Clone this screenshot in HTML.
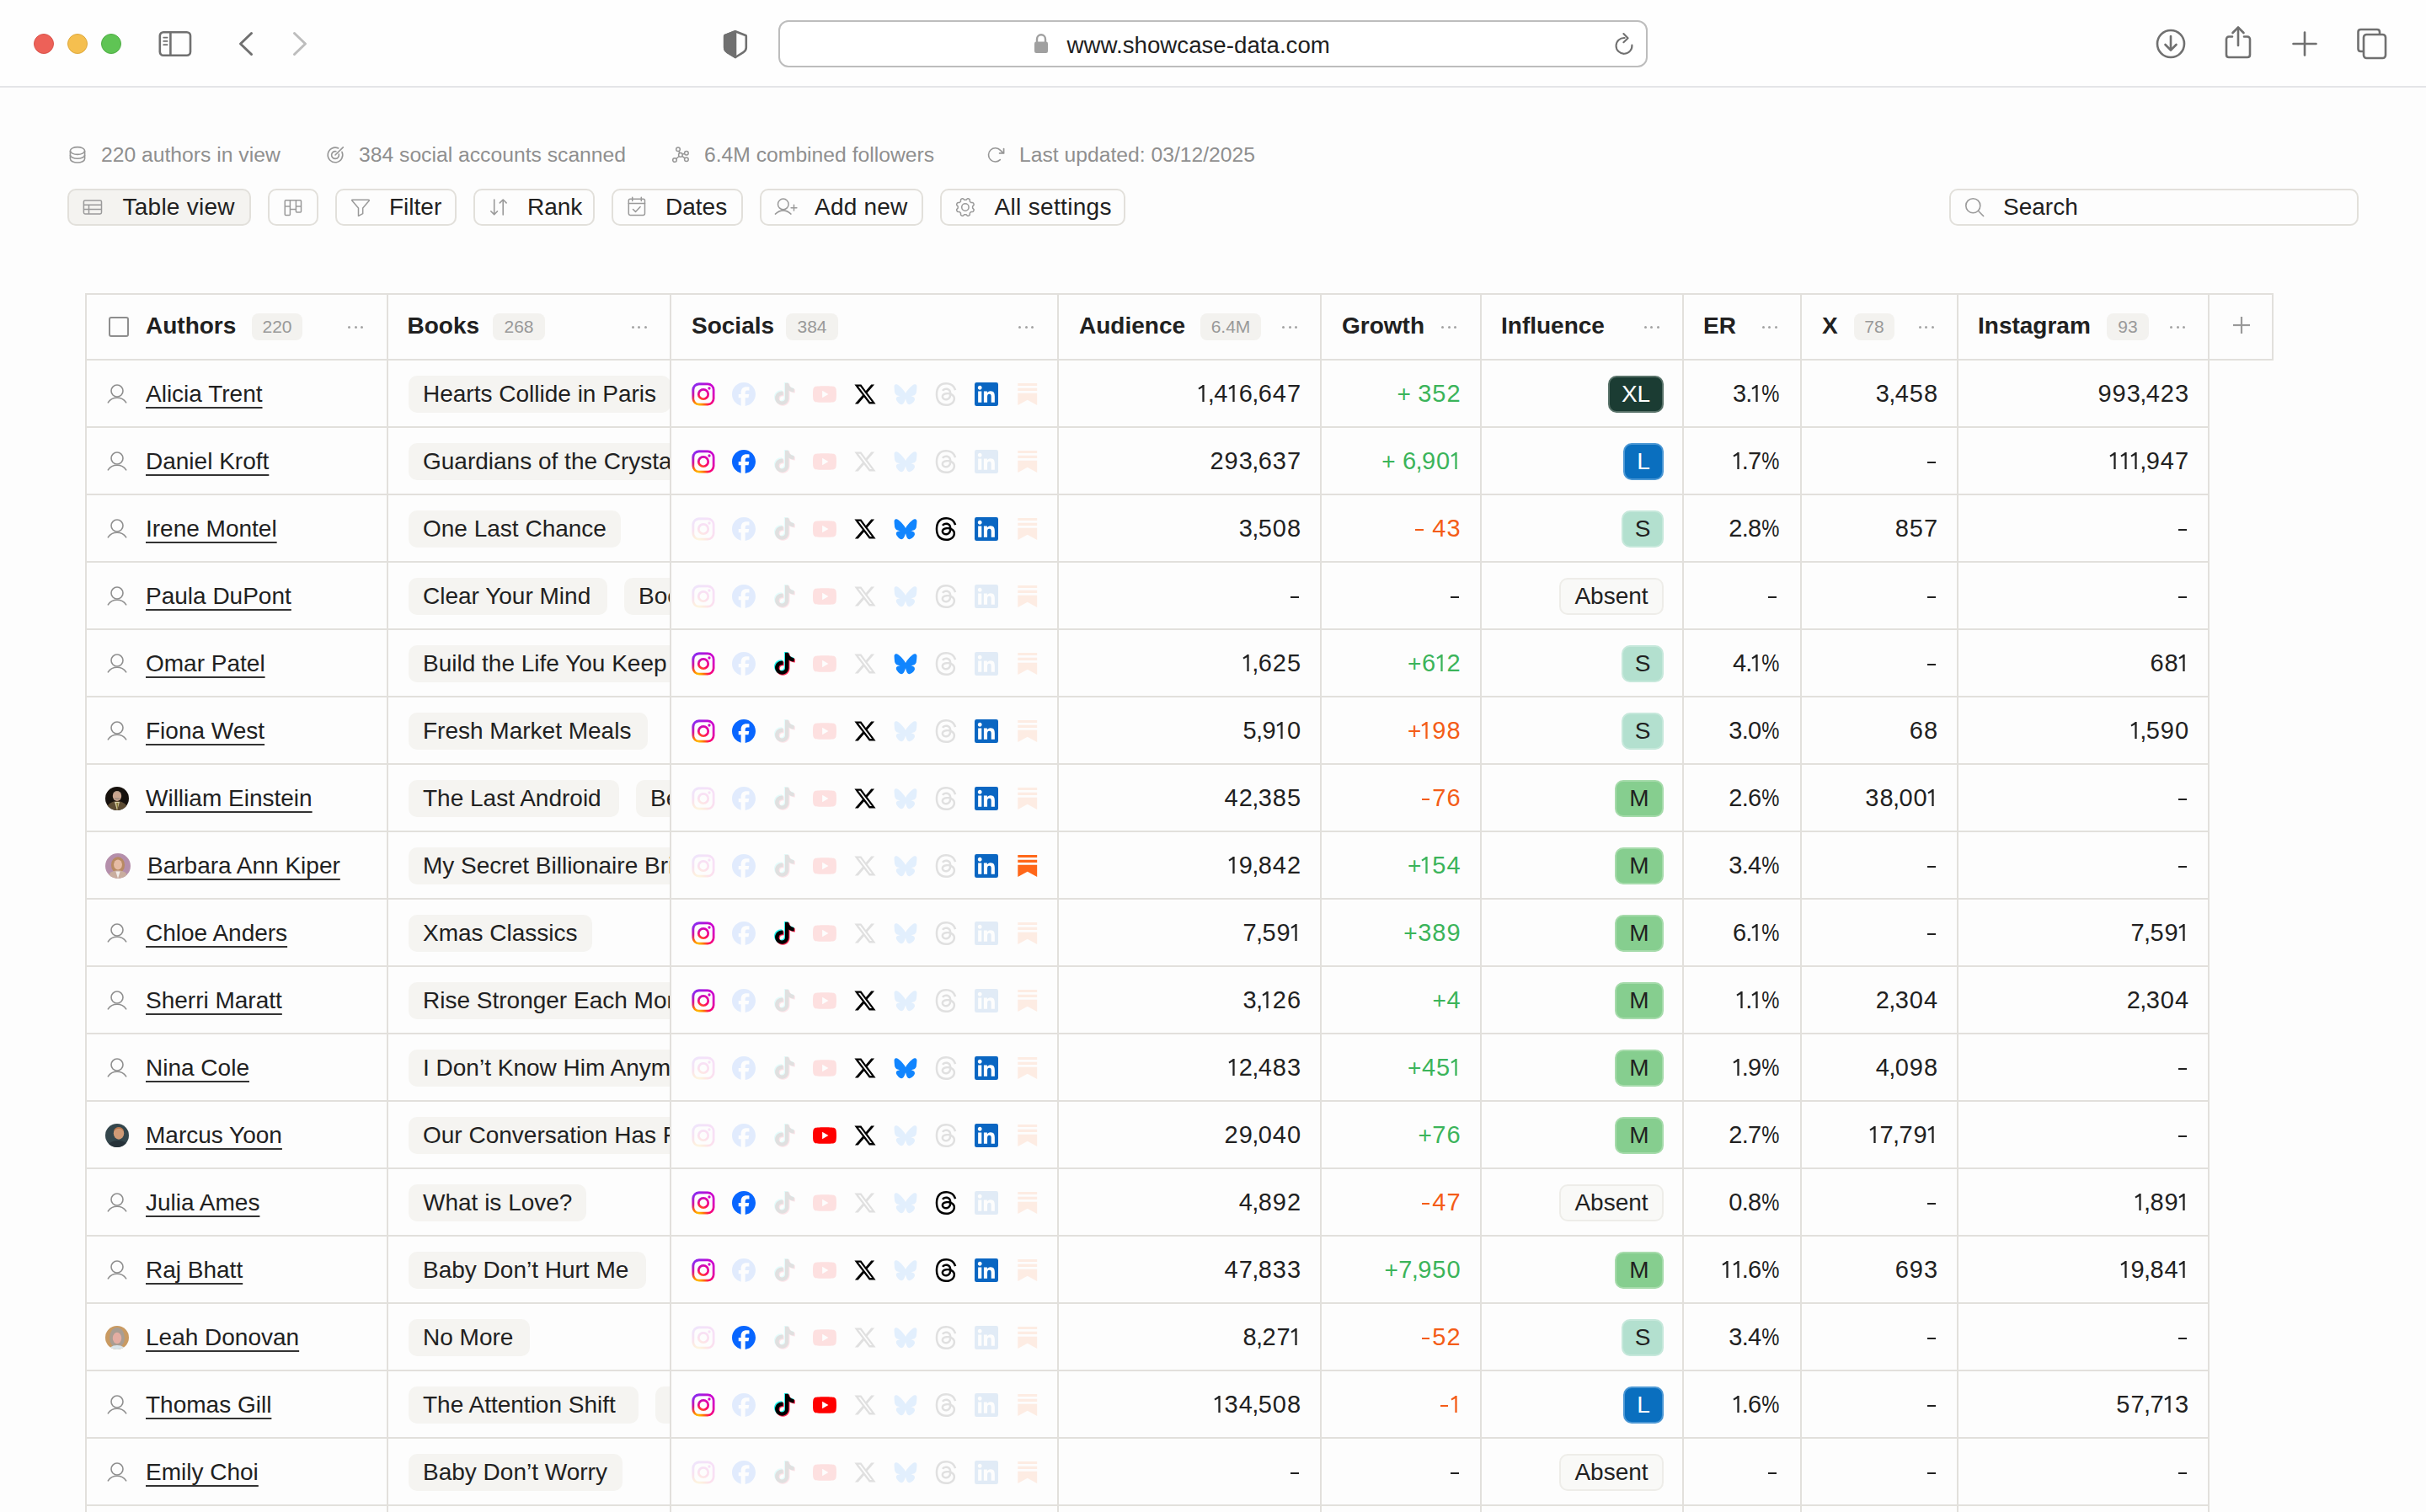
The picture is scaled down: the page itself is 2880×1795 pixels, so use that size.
<!DOCTYPE html><html><head><meta charset="utf-8"><style>
*{box-sizing:border-box;margin:0;padding:0}
html,body{width:2880px;height:1795px;overflow:hidden;background:#fdfdfd;font-family:"Liberation Sans", sans-serif;color:#212121}
.a{position:absolute}
.t28{font-size:28px}
.chrome{position:absolute;left:0;top:0;width:2880px;height:104px;background:#fefefe;border-bottom:2px solid #e4e5e8}
.light{position:absolute;top:39.5px;width:24px;height:24px;border-radius:50%}
.url{position:absolute;left:924px;top:24px;width:1032px;height:56px;border:2px solid #bdbdbd;border-radius:12px;background:#fff}
.stat{position:absolute;top:168.5px;height:30px;line-height:30px;font-size:24.7px;color:#8f8f8f;white-space:nowrap}
.btn{position:absolute;top:224px;height:44px;border:2px solid #e2e0db;border-radius:10px;background:#fdfdfd}
.btxt{position:absolute;top:224px;height:44px;line-height:44px;font-size:28px;white-space:nowrap;color:#212121}
.vl{position:absolute;top:348px;width:2px;height:1447px;background:#e2e0dc}
.hl{position:absolute;left:101px;width:2522px;height:2px;background:#e2e0dc}
.hd{position:absolute;top:348px;height:77px;line-height:77px;font-size:28px;font-weight:bold;white-space:nowrap}
.hb{position:absolute;top:372px;height:32px;line-height:32px;border-radius:8px;background:#f3f2ef;color:#999;font-size:21px;text-align:center}
.dots{position:absolute;top:386px;height:4px;width:19px}
.dots i{position:absolute;top:0.5px;width:3px;height:3px;border-radius:50%;background:#a3a3a3}
.cell{position:absolute;height:80px;line-height:80px;font-size:28px;white-space:nowrap}
.r{text-align:right}
.name{text-decoration:underline;text-decoration-thickness:2px;text-underline-offset:6px;text-decoration-color:#333}
.chips{position:absolute;left:461px;width:334px;height:80px;overflow:hidden}
.chip{position:absolute;top:18px;height:44px;line-height:44px;padding:0 17px;border-radius:10px;background:#f5f4f1;font-size:28px;white-space:nowrap}
.soc{position:absolute;width:28px;height:28px}
.off{opacity:.11}
.badge{position:absolute;top:18px;height:44px;line-height:40px;border-radius:10px;border:2px solid;font-size:28px;text-align:center}
.d,.c,.p,.q{display:inline-flex;justify-content:center;font-weight:normal;font-size:29px;line-height:30px}
.d{width:17.1px}svg.o{display:inline-block;width:12.4px;height:20.4px;vertical-align:baseline;fill:currentColor}.c{width:5.9px}.p{width:5.5px}.q{width:20px}
.h{display:inline-block;width:9.6px;height:2.3px;background:currentColor;vertical-align:6.6px;margin:0 2.5px 0 1px}
.q i{font-style:normal;display:inline-block;transform:scaleX(.82)}
.av{position:absolute;left:125px;top:25.5px;width:28px;height:28px;border-radius:50%}
</style></head><body>
<div class="chrome"></div>
<div class="light" style="left:40px;background:#ed6158;border:1px solid #d9534b"></div>
<div class="light" style="left:80px;background:#f5bf4f;border:1px solid #dea93e"></div>
<div class="light" style="left:120px;background:#5fc454;border:1px solid #4fae45"></div>
<div class="a" style="left:188px;top:36px"><svg width="40" height="32" viewBox="0 0 40 32" ><rect x="1.8" y="2.2" width="36.2" height="27.6" rx="4.2" fill="none" stroke="#707070" stroke-width="2.6"/><line x1="14.4" y1="2.5" x2="14.4" y2="29.5" stroke="#707070" stroke-width="2.6"/><line x1="6.2" y1="8.6" x2="10.6" y2="8.6" stroke="#707070" stroke-width="1.7" stroke-linecap="round"/><line x1="6.2" y1="12.9" x2="10.6" y2="12.9" stroke="#707070" stroke-width="1.7" stroke-linecap="round"/><line x1="6.2" y1="17.2" x2="10.6" y2="17.2" stroke="#707070" stroke-width="1.7" stroke-linecap="round"/></svg></div>
<div class="a" style="left:280px;top:35px"><svg width="24" height="34" viewBox="0 0 24 34" ><polyline points="18.5,4.5 5.5,17 18.5,29.5" fill="none" stroke="#707070" stroke-width="3" stroke-linecap="round" stroke-linejoin="round"/></svg></div>
<div class="a" style="left:344px;top:35px"><svg width="24" height="34" viewBox="0 0 24 34" ><polyline points="5.5,4.5 18.5,17 5.5,29.5" fill="none" stroke="#bdbdbd" stroke-width="3" stroke-linecap="round" stroke-linejoin="round"/></svg></div>
<div class="a" style="left:857px;top:35px"><svg width="32" height="35" viewBox="0 0 32 35" ><path d="M16 2.3 L28.2 7 Q28.8 7.3 28.8 8 V21.5 Q28.8 24.6 25.8 26.8 L16 33 L6.2 26.8 Q3.2 24.6 3.2 21.5 V8 Q3.2 7.3 3.8 7 Z" fill="none" stroke="#707070" stroke-width="2.6" stroke-linejoin="round"/><path d="M16 2.3 L3.8 7 Q3.2 7.3 3.2 8 V21.5 Q3.2 24.6 6.2 26.8 L16 33 Z" fill="#707070" stroke="#707070" stroke-width="2.6" stroke-linejoin="round"/></svg></div>
<div class="url"></div>
<div class="a" style="left:1227px;top:39px"><svg width="18" height="25" viewBox="0 0 18 25" ><path d="M4 11 V7.5 C4 4.5 6.2 2.2 9 2.2 C11.8 2.2 14 4.5 14 7.5 V11" fill="none" stroke="#a0a0a0" stroke-width="2.4"/><rect x="1" y="10.5" width="16" height="13.5" rx="2.2" fill="#a0a0a0"/></svg></div>
<div class="a" style="left:1266.5px;top:26px;height:55px;line-height:55px;font-size:27.7px;color:#1f1f1f;white-space:nowrap">www.showcase-data.com</div>
<div class="a" style="left:1914px;top:38px"><svg width="28" height="28" viewBox="0 0 28 28" ><path d="M23.4 15.6 A9.45 9.45 0 1 1 14.6 6.95" fill="none" stroke="#707070" stroke-width="2.1" stroke-linecap="round"/><polyline points="13.4,2 18.6,7.2 13.4,12.2" fill="none" stroke="#707070" stroke-width="2.1" stroke-linecap="round" stroke-linejoin="round"/></svg></div>
<div class="a" style="left:2558px;top:33px"><svg width="38" height="38" viewBox="0 0 38 38" ><circle cx="19" cy="19" r="16" fill="none" stroke="#707070" stroke-width="2.6"/><line x1="19" y1="10" x2="19" y2="26" stroke="#707070" stroke-width="2.6" stroke-linecap="round"/><polyline points="12.5,20 19,26.5 25.5,20" fill="none" stroke="#707070" stroke-width="2.6" stroke-linecap="round" stroke-linejoin="round"/></svg></div>
<div class="a" style="left:2640px;top:30px"><svg width="34" height="41" viewBox="0 0 34 41" ><path d="M10 13.5 H6 C4.3 13.5 3 14.8 3 16.5 V35 C3 36.7 4.3 38 6 38 H28 C29.7 38 31 36.7 31 35 V16.5 C31 14.8 29.7 13.5 28 13.5 H24" fill="none" stroke="#707070" stroke-width="2.6" stroke-linecap="round"/><line x1="17" y1="3" x2="17" y2="24" stroke="#707070" stroke-width="2.6" stroke-linecap="round"/><polyline points="10.5,9 17,2.5 23.5,9" fill="none" stroke="#707070" stroke-width="2.6" stroke-linecap="round" stroke-linejoin="round"/></svg></div>
<div class="a" style="left:2720px;top:36px"><svg width="32" height="32" viewBox="0 0 32 32" ><line x1="16" y1="2.5" x2="16" y2="29.5" stroke="#707070" stroke-width="2.6" stroke-linecap="round"/><line x1="2.5" y1="16" x2="29.5" y2="16" stroke="#707070" stroke-width="2.6" stroke-linecap="round"/></svg></div>
<div class="a" style="left:2796px;top:32px"><svg width="40" height="40" viewBox="0 0 40 40" ><path d="M9 29 H6.5 C4.5 29 3.5 28 3.5 26 V6 C3.5 4 4.5 3 6.5 3 H26 C28 3 29 4 29 6 V8.5" fill="none" stroke="#707070" stroke-width="2.6"/><rect x="10" y="9" width="26" height="28" rx="3.5" fill="none" stroke="#707070" stroke-width="2.6"/></svg></div>
<div class="a" style="left:81px;top:173px"><svg width="22" height="23" viewBox="0 0 22 23" ><ellipse cx="11" cy="6" rx="8.6" ry="4.4" fill="none" stroke="#979797" stroke-width="1.6"/><path d="M2.4 6 V15.6 A8.6 4.4 0 0 0 19.6 15.6 V6" fill="none" stroke="#979797" stroke-width="1.6"/><path d="M2.4 10.9 A8.6 4.4 0 0 0 19.6 10.9" fill="none" stroke="#979797" stroke-width="1.6"/></svg></div>
<div class="a" style="left:387px;top:173px"><svg width="22" height="22" viewBox="0 0 22 22" ><path d="M18.98 7.28 A8.8 8.8 0 1 1 14.72 3.02" fill="none" stroke="#979797" stroke-width="1.6" stroke-linecap="round"/><path d="M15.30 10.09 A4.4 4.4 0 1 1 11.91 6.70" fill="none" stroke="#979797" stroke-width="1.6" stroke-linecap="round"/><line x1="11" y1="11" x2="20.3" y2="1.9" stroke="#979797" stroke-width="1.6" stroke-linecap="round"/></svg></div>
<div class="a" style="left:797px;top:172px"><svg width="22" height="23" viewBox="0 0 22 23" ><circle cx="8" cy="5.2" r="2.3" fill="none" stroke="#979797" stroke-width="1.5"/><circle cx="17.9" cy="9.7" r="2.3" fill="none" stroke="#979797" stroke-width="1.5"/><circle cx="10.9" cy="11.9" r="2.3" fill="none" stroke="#979797" stroke-width="1.5"/><circle cx="4" cy="18" r="2.3" fill="none" stroke="#979797" stroke-width="1.5"/><circle cx="17.9" cy="17.2" r="2.3" fill="none" stroke="#979797" stroke-width="1.5"/><path d="M8.6 7.4 L10.2 9.7 M13.1 11.2 L15.7 10.4 M9.2 13.5 L5.7 16.5 M12.8 13.4 L16.1 15.8" stroke="#979797" stroke-width="1.5"/></svg></div>
<div class="a" style="left:1171px;top:172px"><svg width="24" height="23" viewBox="0 0 24 23" ><path d="M16.33 17.63 A8.1 8.1 0 1 1 16.6 6.4 L19.8 9.4" fill="none" stroke="#979797" stroke-width="1.6" stroke-linecap="round" stroke-linejoin="round"/><path d="M20.6 4.6 V9.9 H15.6" fill="none" stroke="#979797" stroke-width="1.7" stroke-linecap="round" stroke-linejoin="round"/></svg></div>
<div class="stat" style="left:120px">220 authors in view</div>
<div class="stat" style="left:426px">384 social accounts scanned</div>
<div class="stat" style="left:836px">6.4M combined followers</div>
<div class="stat" style="left:1210px">Last updated: 03/12/2025</div>
<div class="btn" style="left:80px;width:218px;background:#f4f3f0;"></div>
<div class="btn" style="left:318px;width:60px;"></div>
<div class="btn" style="left:398px;width:144px;"></div>
<div class="btn" style="left:562px;width:144px;"></div>
<div class="btn" style="left:726px;width:156px;"></div>
<div class="btn" style="left:902px;width:194px;"></div>
<div class="btn" style="left:1116px;width:220px;"></div>
<div class="a" style="left:98px;top:236px"><svg width="24" height="20" viewBox="0 0 24 20" ><rect x="1.4" y="2" width="21.1" height="15.9" rx="1.6" fill="none" stroke="#9a9a9a" stroke-width="1.5"/><path d="M1.4 7.3 H22.5 M1.4 12.45 H22.5 M7.5 7.3 V17.9" fill="none" stroke="#9a9a9a" stroke-width="1.5"/></svg></div>
<div class="a" style="left:336px;top:236px"><svg width="24" height="22" viewBox="0 0 24 22" ><path d="M8.4 12.6 H15.4 M2.25 8.9 H8.4 M15.4 8.9 H21.5 M8.4 1.8 V18.4 Q8.4 19.4 7.4 19.4 H3.25 Q2.25 19.4 2.25 18.4 V2.8 Q2.25 1.8 3.25 1.8 H20.5 Q21.5 1.8 21.5 2.8 V15 Q21.5 16 20.5 16 H16.4 Q15.4 16 15.4 15 V1.8" fill="none" stroke="#9a9a9a" stroke-width="1.5" stroke-linejoin="round"/></svg></div>
<div class="a" style="left:415px;top:235px"><svg width="26" height="23" viewBox="0 0 26 23" ><path d="M3.2 2.2 H22.4 Q23.9 2.3 23 3.5 L15.7 11.9 V18.6 L10.5 21.3 V11.9 L3.2 3.5 Q2.2 2.3 3.2 2.2 Z" fill="none" stroke="#9a9a9a" stroke-width="1.5" stroke-linejoin="round"/></svg></div>
<div class="a" style="left:580px;top:235px"><svg width="24" height="23" viewBox="0 0 24 23" ><path d="M6.7 2 V19.8 M2.8 15.8 L6.7 19.8 L10.5 15.8 M17.2 20 V2.2 M13.3 5.9 L17.2 2 L21.1 5.9" fill="none" stroke="#9a9a9a" stroke-width="1.6" stroke-linecap="round" stroke-linejoin="round"/></svg></div>
<div class="a" style="left:744px;top:233px"><svg width="24" height="24" viewBox="0 0 24 24" ><rect x="2.3" y="3.2" width="19.2" height="19.2" rx="1.8" fill="none" stroke="#9a9a9a" stroke-width="1.5"/><path d="M2.3 8.5 H21.5 M6.7 1.2 V5.4 M17.3 1.2 V5.4 M7.5 15.5 L10.5 18.4 L16.1 12.5" fill="none" stroke="#9a9a9a" stroke-width="1.5" stroke-linecap="round" stroke-linejoin="round"/></svg></div>
<div class="a" style="left:919px;top:234px"><svg width="28" height="24" viewBox="0 0 28 24" ><circle cx="10.8" cy="8.4" r="6.3" fill="none" stroke="#9a9a9a" stroke-width="1.5"/><path d="M1.4 20.1 Q10.8 11.6 20 20.1" fill="none" stroke="#9a9a9a" stroke-width="1.5" stroke-linecap="round"/><path d="M23.5 9.3 V16.1 M20.1 12.7 H26.9" fill="none" stroke="#9a9a9a" stroke-width="1.5" stroke-linecap="round"/></svg></div>
<div class="a" style="left:1133px;top:234px"><svg width="26" height="24" viewBox="0 0 26 24" ><polygon points="12.90,3.30 13.47,3.30 14.06,3.19 14.80,2.44 15.65,1.75 16.36,1.79 17.03,2.02 17.67,2.33 18.21,2.81 18.32,3.89 18.31,4.95 18.65,5.44 19.05,5.85 19.46,6.25 19.95,6.59 21.01,6.58 22.09,6.69 22.57,7.23 22.88,7.87 23.11,8.54 23.15,9.25 22.46,10.10 21.71,10.84 21.60,11.43 21.60,12.00 21.60,12.57 21.71,13.16 22.46,13.90 23.15,14.75 23.11,15.46 22.88,16.13 22.57,16.77 22.09,17.31 21.01,17.42 19.95,17.41 19.46,17.75 19.05,18.15 18.65,18.56 18.31,19.05 18.32,20.11 18.21,21.19 17.67,21.67 17.03,21.98 16.36,22.21 15.65,22.25 14.80,21.56 14.06,20.81 13.47,20.70 12.90,20.70 12.33,20.70 11.74,20.81 11.00,21.56 10.15,22.25 9.44,22.21 8.77,21.98 8.13,21.67 7.59,21.19 7.48,20.11 7.49,19.05 7.15,18.56 6.75,18.15 6.34,17.75 5.85,17.41 4.79,17.42 3.71,17.31 3.23,16.77 2.92,16.13 2.69,15.46 2.65,14.75 3.34,13.90 4.09,13.16 4.20,12.57 4.20,12.00 4.20,11.43 4.09,10.84 3.34,10.10 2.65,9.25 2.69,8.54 2.92,7.87 3.23,7.23 3.71,6.69 4.79,6.58 5.85,6.59 6.34,6.25 6.75,5.85 7.15,5.44 7.49,4.95 7.48,3.89 7.59,2.81 8.13,2.33 8.77,2.02 9.44,1.79 10.15,1.75 11.00,2.44 11.74,3.19 12.33,3.30 12.90,3.30" fill="none" stroke="#9a9a9a" stroke-width="1.5" stroke-linejoin="round"/><circle cx="12.9" cy="12" r="4.2" fill="none" stroke="#9a9a9a" stroke-width="1.5"/></svg></div>
<div class="btxt" style="left:145.5px;letter-spacing:0.25px">Table view</div>
<div class="btxt" style="left:462px;letter-spacing:0px">Filter</div>
<div class="btxt" style="left:626px;letter-spacing:0px">Rank</div>
<div class="btxt" style="left:790px;letter-spacing:0px">Dates</div>
<div class="btxt" style="left:967px;letter-spacing:0.2px">Add new</div>
<div class="btxt" style="left:1180.5px;letter-spacing:0.33px">All settings</div>
<div class="btn" style="left:2314px;width:486px"></div>
<div class="a" style="left:2331px;top:234px"><svg width="26" height="25" viewBox="0 0 26 25" ><circle cx="11.3" cy="10.2" r="8.5" fill="none" stroke="#9a9a9a" stroke-width="1.6"/><line x1="17.4" y1="16.3" x2="23.6" y2="22.5" stroke="#9a9a9a" stroke-width="1.6" stroke-linecap="round"/></svg></div>
<div class="btxt" style="left:2378px">Search</div>
<div class="vl" style="left:101px"></div>
<div class="vl" style="left:459px"></div>
<div class="vl" style="left:795px"></div>
<div class="vl" style="left:1255px"></div>
<div class="vl" style="left:1567px"></div>
<div class="vl" style="left:1757px"></div>
<div class="vl" style="left:1997px"></div>
<div class="vl" style="left:2137px"></div>
<div class="vl" style="left:2323px"></div>
<div class="vl" style="left:2621px"></div>
<div class="a" style="left:2622px;top:348px;width:77px;height:80px;border:2px solid #e2e0dc;border-left:none"></div>
<div class="hl" style="top:348px"></div>
<div class="hl" style="top:426px"></div>
<div class="hl" style="top:506px"></div>
<div class="hl" style="top:586px"></div>
<div class="hl" style="top:666px"></div>
<div class="hl" style="top:746px"></div>
<div class="hl" style="top:826px"></div>
<div class="hl" style="top:906px"></div>
<div class="hl" style="top:986px"></div>
<div class="hl" style="top:1066px"></div>
<div class="hl" style="top:1146px"></div>
<div class="hl" style="top:1226px"></div>
<div class="hl" style="top:1306px"></div>
<div class="hl" style="top:1386px"></div>
<div class="hl" style="top:1466px"></div>
<div class="hl" style="top:1546px"></div>
<div class="hl" style="top:1626px"></div>
<div class="hl" style="top:1706px"></div>
<div class="hl" style="top:1786px"></div>
<div class="a" style="left:2650px;top:375px"><svg width="22" height="22" viewBox="0 0 22 22" ><line x1="11" y1="1" x2="11" y2="21" stroke="#999" stroke-width="2.2"/><line x1="1" y1="11" x2="21" y2="11" stroke="#999" stroke-width="2.2"/></svg></div>
<div class="a" style="left:129px;top:376px;width:24px;height:24px;border:2.4px solid #8e8e8e;border-radius:3px"></div>
<div class="hd" style="left:173px">Authors</div>
<div class="hb" style="left:299px;width:60px">220</div>
<div class="dots" style="left:413px"><i style="left:0"></i><i style="left:7.7px"></i><i style="left:15.4px"></i></div>
<div class="hd" style="left:483.5px">Books</div>
<div class="hb" style="left:585px;width:62px">268</div>
<div class="dots" style="left:749.5px"><i style="left:0"></i><i style="left:7.7px"></i><i style="left:15.4px"></i></div>
<div class="hd" style="left:821px">Socials</div>
<div class="hb" style="left:933px;width:62px">384</div>
<div class="dots" style="left:1209px"><i style="left:0"></i><i style="left:7.7px"></i><i style="left:15.4px"></i></div>
<div class="hd" style="left:1281px">Audience</div>
<div class="hb" style="left:1425px;width:72px">6.4M</div>
<div class="dots" style="left:1522px"><i style="left:0"></i><i style="left:7.7px"></i><i style="left:15.4px"></i></div>
<div class="hd" style="left:1593px">Growth</div>
<div class="dots" style="left:1711px"><i style="left:0"></i><i style="left:7.7px"></i><i style="left:15.4px"></i></div>
<div class="hd" style="left:1782px">Influence</div>
<div class="dots" style="left:1951.5px"><i style="left:0"></i><i style="left:7.7px"></i><i style="left:15.4px"></i></div>
<div class="hd" style="left:2022px">ER</div>
<div class="dots" style="left:2091.6px"><i style="left:0"></i><i style="left:7.7px"></i><i style="left:15.4px"></i></div>
<div class="hd" style="left:2163px">X</div>
<div class="hb" style="left:2201px;width:48px">78</div>
<div class="dots" style="left:2277.7px"><i style="left:0"></i><i style="left:7.7px"></i><i style="left:15.4px"></i></div>
<div class="hd" style="left:2348px">Instagram</div>
<div class="hb" style="left:2501px;width:50px">93</div>
<div class="dots" style="left:2576px"><i style="left:0"></i><i style="left:7.7px"></i><i style="left:15.4px"></i></div>
<svg width="0" height="0" style="position:absolute"><defs><radialGradient id="igg" gradientUnits="userSpaceOnUse" cx="6.5" cy="24.5" r="27"><stop offset="0" stop-color="#ffd600"/><stop offset="0.22" stop-color="#ff7a00"/><stop offset="0.45" stop-color="#ff0069"/><stop offset="0.78" stop-color="#d300c5"/><stop offset="1" stop-color="#c800d0"/></radialGradient><linearGradient id="igv" gradientUnits="userSpaceOnUse" x1="1" y1="1" x2="11" y2="11"><stop offset="0" stop-color="#7638fa"/><stop offset="1" stop-color="#7638fa" stop-opacity="0"/></linearGradient></defs></svg>
<div class="a" style="left:0;top:428px;width:2880px;height:80px">
<div class="a" style="left:127px;top:28px"><svg width="24" height="24" viewBox="0 0 24 24" ><circle cx="12" cy="8.05" r="7" fill="none" stroke="#8f8f8f" stroke-width="1.6"/><path d="M1.3 21.9 C4 17.8 8 16.3 12 16.3 C16 16.3 20 17.8 22.7 21.9" fill="none" stroke="#8f8f8f" stroke-width="1.6" stroke-linecap="round"/></svg></div>
<div class="cell" style="left:173px"><span class="name">Alicia Trent</span></div>
<div class="chips">
<div style="position:absolute;left:24px;top:18px;display:flex;gap:20px">
<div class="chip" style="position:relative;top:0;">Hearts Collide in Paris</div>
</div></div>
<div class="soc" style="left:821px;top:26px"><svg width="28" height="28" viewBox="0 0 24 24" ><rect x="1.6" y="1.6" width="20.8" height="20.8" rx="6" fill="none" stroke="url(#igg)" stroke-width="2.3"/><circle cx="12" cy="12" r="4.9" fill="none" stroke="url(#igg)" stroke-width="2.3"/><circle cx="18" cy="6" r="1.4" fill="url(#igg)"/><rect x="1.6" y="1.6" width="20.8" height="20.8" rx="6" fill="none" stroke="url(#igv)" stroke-width="2.3"/><circle cx="12" cy="12" r="4.9" fill="none" stroke="url(#igv)" stroke-width="2.3"/><circle cx="18" cy="6" r="1.4" fill="url(#igv)"/></svg></div>
<div class="soc off" style="left:869px;top:26px"><svg width="28" height="28" viewBox="0 0 24 24" ><path fill="#0866ff" d="M9.101 23.691v-7.98H6.627v-3.667h2.474v-1.58c0-4.085 1.848-5.978 5.858-5.978.401 0 .955.042 1.468.103a8.68 8.68 0 0 1 1.141.195v3.325a8.623 8.623 0 0 0-.653-.036 26.805 26.805 0 0 0-.733-.009c-.707 0-1.259.096-1.675.309a1.686 1.686 0 0 0-.679.622c-.258.42-.374.995-.374 1.752v1.297h3.919l-.386 2.103-.287 1.564h-3.246v8.245C19.396 23.238 24 18.179 24 12.044c0-6.627-5.373-12-12-12s-12 5.373-12 12c0 5.628 3.874 10.35 9.101 11.647Z"/></svg></div>
<div class="soc off" style="left:917px;top:26px"><svg width="28" height="28" viewBox="0 0 24 24" ><g transform="translate(1.2 0.6) scale(0.93)"><path fill="#25f4ee" transform="translate(-1 -1)" d="M12.525.02c1.31-.02 2.61-.01 3.91-.02.08 1.53.63 3.09 1.75 4.17 1.12 1.11 2.7 1.62 4.24 1.79v4.03c-1.44-.05-2.89-.35-4.2-.97-.57-.26-1.1-.59-1.62-.93-.01 2.92.01 5.84-.02 8.75-.08 1.4-.54 2.79-1.35 3.94-1.310 1.92-3.58 3.17-5.91 3.21-1.43.08-2.86-.31-4.08-1.03-2.02-1.19-3.44-3.37-3.65-5.71-.02-.5-.03-1-.01-1.49.18-1.9 1.12-3.72 2.58-4.96 1.66-1.44 3.98-2.13 6.15-1.72.02 1.480-.04 2.96-.04 4.44-.99-.32-2.15-.23-3.02.37-.63.41-1.11 1.04-1.36 1.75-.21.51-.15 1.07-.14 1.61.24 1.64 1.82 3.02 3.5 2.87 1.12-.01 2.19-.66 2.77-1.61.19-.33.4-.67.41-1.06.1-1.79.06-3.57.07-5.36.01-4.03-.01-8.05.02-12.07z"/><path fill="#fe2c55" transform="translate(1 1)" d="M12.525.02c1.31-.02 2.61-.01 3.91-.02.08 1.53.63 3.09 1.75 4.17 1.12 1.11 2.7 1.62 4.24 1.79v4.03c-1.44-.05-2.89-.35-4.2-.97-.57-.26-1.1-.59-1.62-.93-.01 2.92.01 5.84-.02 8.75-.08 1.4-.54 2.79-1.35 3.94-1.310 1.92-3.58 3.17-5.91 3.21-1.43.08-2.86-.31-4.08-1.03-2.02-1.19-3.44-3.37-3.65-5.71-.02-.5-.03-1-.01-1.49.18-1.9 1.12-3.72 2.58-4.96 1.66-1.44 3.98-2.13 6.15-1.72.02 1.480-.04 2.96-.04 4.44-.99-.32-2.15-.23-3.02.37-.63.41-1.11 1.04-1.36 1.75-.21.51-.15 1.07-.14 1.61.24 1.64 1.82 3.02 3.5 2.87 1.12-.01 2.19-.66 2.77-1.61.19-.33.4-.67.41-1.06.1-1.79.06-3.57.07-5.36.01-4.03-.01-8.05.02-12.07z"/><path fill="#000" d="M12.525.02c1.31-.02 2.61-.01 3.91-.02.08 1.53.63 3.09 1.75 4.17 1.12 1.11 2.7 1.62 4.24 1.79v4.03c-1.44-.05-2.89-.35-4.2-.97-.57-.26-1.1-.59-1.62-.93-.01 2.92.01 5.84-.02 8.75-.08 1.4-.54 2.79-1.35 3.94-1.310 1.92-3.58 3.17-5.91 3.21-1.43.08-2.86-.31-4.08-1.03-2.02-1.19-3.44-3.37-3.65-5.71-.02-.5-.03-1-.01-1.49.18-1.9 1.12-3.72 2.58-4.96 1.66-1.44 3.98-2.13 6.15-1.72.02 1.480-.04 2.96-.04 4.44-.99-.32-2.15-.23-3.02.37-.63.41-1.11 1.04-1.36 1.75-.21.51-.15 1.07-.14 1.61.24 1.64 1.82 3.02 3.5 2.87 1.12-.01 2.19-.66 2.77-1.61.19-.33.4-.67.41-1.06.1-1.79.06-3.57.07-5.36.01-4.03-.01-8.05.02-12.07z"/></g></svg></div>
<div class="soc off" style="left:965px;top:26px"><svg width="28" height="28" viewBox="0 0 24 24" ><path fill="#ff0000" d="M23.498 6.186a3.016 3.016 0 0 0-2.122-2.136C19.505 3.545 12 3.545 12 3.545s-7.505 0-9.377.505A3.017 3.017 0 0 0 .502 6.186C0 8.07 0 12 0 12s0 3.93.502 5.814a3.016 3.016 0 0 0 2.122 2.136c1.871.505 9.376.505 9.376.505s7.505 0 9.377-.505a3.015 3.015 0 0 0 2.122-2.136C24 15.93 24 12 24 12s0-3.93-.502-5.814z"/><path fill="#fff" d="M9.545 15.568V8.432L15.818 12l-6.273 3.568z"/></svg></div>
<div class="soc" style="left:1013px;top:26px"><svg width="28" height="28" viewBox="0 0 24 24" ><path fill="#000" transform="translate(1.2 1.2) scale(0.9)" d="M18.901 1.153h3.68l-8.04 9.19L24 22.846h-7.406l-5.8-7.584-6.638 7.584H.474l8.6-9.83L0 1.154h7.594l5.243 6.932ZM17.61 20.644h2.039L6.486 3.24H4.298Z"/></svg></div>
<div class="soc off" style="left:1061px;top:26px"><svg width="28" height="28" viewBox="0 0 24 24" ><path fill="#1185fe" transform="translate(0.5 0.75) scale(0.96)" d="M12 10.8c-1.087-2.114-4.046-6.053-6.798-7.995C2.566.944 1.561 1.266.902 1.565.139 1.908 0 3.08 0 3.768c0 .69.378 5.65.624 6.479.815 2.736 3.713 3.66 6.383 3.364.136-.02.275-.039.415-.056-.138.022-.276.04-.415.056-3.912.58-7.387 2.005-2.83 7.078 5.013 5.19 6.87-1.113 7.823-4.308.953 3.195 2.05 9.271 7.733 4.308 4.267-4.308 1.172-6.498-2.74-7.078a8.741 8.741 0 0 1-.415-.056c.14.017.279.036.415.056 2.67.297 5.568-.628 6.383-3.364.246-.828.624-5.79.624-6.478 0-.69-.139-1.861-.902-2.206-.659-.298-1.664-.62-4.3 1.24C16.046 4.748 13.087 8.687 12 10.8Z"/></svg></div>
<div class="soc off" style="left:1109px;top:26px"><svg width="28" height="28" viewBox="0 0 24 24" ><path fill="#000" d="M12.186 24h-.007c-3.581-.024-6.334-1.205-8.184-3.509C2.35 18.44 1.5 15.586 1.472 12.01v-.017c.03-3.579.879-6.43 2.525-8.482C5.845 1.205 8.6.024 12.18 0h.014c2.746.02 5.043.725 6.826 2.098 1.677 1.29 2.858 3.13 3.509 5.467l-2.04.569c-1.104-3.96-3.898-5.984-8.304-6.015-2.910.022-5.11.936-6.54 2.717C4.307 6.504 3.616 8.914 3.589 12c.027 3.086.718 5.496 2.057 7.164 1.43 1.783 3.631 2.698 6.54 2.717 2.623-.02 4.358-.631 5.8-2.045 1.647-1.613 1.618-3.593 1.090-4.798-.31-.71-.873-1.3-1.634-1.75-.192 1.352-.622 2.446-1.284 3.272-.886 1.102-2.14 1.704-3.73 1.790-1.202.065-2.361-.218-3.259-.801-1.063-.689-1.685-1.74-1.752-2.964-.065-1.190.408-2.285 1.33-3.082.88-.76 2.119-1.207 3.583-1.291a13.853 13.853 0 0 1 3.020.142c-.126-.742-.375-1.332-.75-1.757-.513-.586-1.308-.883-2.359-.89h-.029c-.844 0-1.992.232-2.721 1.32L7.734 7.847c.98-1.454 2.568-2.256 4.478-2.256h.044c3.194.02 5.097 1.975 5.287 5.388.108.046.216.094.321.142 1.49.7 2.58 1.761 3.154 3.070.797 1.820.871 4.790-1.548 7.158-1.85 1.81-4.094 2.628-7.277 2.65Zm1.003-11.69c-.242 0-.487.007-.739.021-1.836.103-2.98.946-2.916 2.143.067 1.256 1.452 1.839 2.784 1.767 1.224-.065 2.818-.543 3.086-3.710a10.5 10.5 0 0 0-2.215-.221z"/></svg></div>
<div class="soc" style="left:1157px;top:26px"><svg width="28" height="28" viewBox="0 0 24 24" ><rect x="0" y="0" width="24" height="24" rx="2" fill="#0a66c2"/><path fill="#fff" d="M20.447 20.452h-3.554v-5.569c0-1.328-.027-3.037-1.852-3.037-1.853 0-2.136 1.445-2.136 2.939v5.667H9.351V9h3.414v1.561h.046c.477-.9 1.637-1.85 3.37-1.85 3.601 0 4.267 2.370 4.267 5.455v6.286zM5.337 7.433c-1.144 0-2.063-.926-2.063-2.065 0-1.138.92-2.063 2.063-2.063 1.140 0 2.064.925 2.064 2.063 0 1.139-.925 2.065-2.064 2.065zm1.782 13.019H3.555V9h3.564v11.452z"/></svg></div>
<div class="soc off" style="left:1205px;top:26px"><svg width="28" height="28" viewBox="0 0 24 24" ><path fill="#ff6719" transform="translate(1.47 0.86) scale(0.93)" d="M22.539 8.242H1.46V5.406h21.08v2.836zM1.46 10.812V24L12 18.110 22.540 24V10.812H1.46zM22.540 0H1.46v2.836h21.080V0z"/></svg></div>
<div class="cell r" style="left:1257px;width:287.5px"><svg class="o" viewBox="0 0 12.4 20.4"><path d="M5.35 0H7.65V20.4H5.35V3.2L1.45 5.6L0.45 3.7L5.35 0.4Z"/></svg><b class="c">,</b><b class="d">4</b><svg class="o" viewBox="0 0 12.4 20.4"><path d="M5.35 0H7.65V20.4H5.35V3.2L1.45 5.6L0.45 3.7L5.35 0.4Z"/></svg><b class="d">6</b><b class="c">,</b><b class="d">6</b><b class="d">4</b><b class="d">7</b></div>
<div class="cell r" style="left:1569px;width:165px;color:#3bb45a">+ <b class="d">3</b><b class="d">5</b><b class="d">2</b></div>
<div class="badge" style="left:1909px;width:66px;background:#1b3c33;border-color:#587269;color:#fff">XL</div>
<div class="cell r" style="left:1999px;width:112.5px"><b class="d">3</b><b class="p">.</b><svg class="o" viewBox="0 0 12.4 20.4"><path d="M5.35 0H7.65V20.4H5.35V3.2L1.45 5.6L0.45 3.7L5.35 0.4Z"/></svg><b class="q"><i>%</i></b></div>
<div class="cell r" style="left:2139px;width:161.5px"><b class="d">3</b><b class="c">,</b><b class="d">4</b><b class="d">5</b><b class="d">8</b></div>
<div class="cell r" style="left:2325px;width:273.5px"><b class="d">9</b><b class="d">9</b><b class="d">3</b><b class="c">,</b><b class="d">4</b><b class="d">2</b><b class="d">3</b></div>
</div>
<div class="a" style="left:0;top:508px;width:2880px;height:80px">
<div class="a" style="left:127px;top:28px"><svg width="24" height="24" viewBox="0 0 24 24" ><circle cx="12" cy="8.05" r="7" fill="none" stroke="#8f8f8f" stroke-width="1.6"/><path d="M1.3 21.9 C4 17.8 8 16.3 12 16.3 C16 16.3 20 17.8 22.7 21.9" fill="none" stroke="#8f8f8f" stroke-width="1.6" stroke-linecap="round"/></svg></div>
<div class="cell" style="left:173px"><span class="name">Daniel Kroft</span></div>
<div class="chips">
<div style="position:absolute;left:24px;top:18px;display:flex;gap:20px">
<div class="chip" style="position:relative;top:0;">Guardians of the Crystal Caves</div>
</div></div>
<div class="soc" style="left:821px;top:26px"><svg width="28" height="28" viewBox="0 0 24 24" ><rect x="1.6" y="1.6" width="20.8" height="20.8" rx="6" fill="none" stroke="url(#igg)" stroke-width="2.3"/><circle cx="12" cy="12" r="4.9" fill="none" stroke="url(#igg)" stroke-width="2.3"/><circle cx="18" cy="6" r="1.4" fill="url(#igg)"/><rect x="1.6" y="1.6" width="20.8" height="20.8" rx="6" fill="none" stroke="url(#igv)" stroke-width="2.3"/><circle cx="12" cy="12" r="4.9" fill="none" stroke="url(#igv)" stroke-width="2.3"/><circle cx="18" cy="6" r="1.4" fill="url(#igv)"/></svg></div>
<div class="soc" style="left:869px;top:26px"><svg width="28" height="28" viewBox="0 0 24 24" ><path fill="#0866ff" d="M9.101 23.691v-7.98H6.627v-3.667h2.474v-1.58c0-4.085 1.848-5.978 5.858-5.978.401 0 .955.042 1.468.103a8.68 8.68 0 0 1 1.141.195v3.325a8.623 8.623 0 0 0-.653-.036 26.805 26.805 0 0 0-.733-.009c-.707 0-1.259.096-1.675.309a1.686 1.686 0 0 0-.679.622c-.258.42-.374.995-.374 1.752v1.297h3.919l-.386 2.103-.287 1.564h-3.246v8.245C19.396 23.238 24 18.179 24 12.044c0-6.627-5.373-12-12-12s-12 5.373-12 12c0 5.628 3.874 10.35 9.101 11.647Z"/></svg></div>
<div class="soc off" style="left:917px;top:26px"><svg width="28" height="28" viewBox="0 0 24 24" ><g transform="translate(1.2 0.6) scale(0.93)"><path fill="#25f4ee" transform="translate(-1 -1)" d="M12.525.02c1.31-.02 2.61-.01 3.91-.02.08 1.53.63 3.09 1.75 4.17 1.12 1.11 2.7 1.62 4.24 1.79v4.03c-1.44-.05-2.89-.35-4.2-.97-.57-.26-1.1-.59-1.62-.93-.01 2.92.01 5.84-.02 8.75-.08 1.4-.54 2.79-1.35 3.94-1.310 1.92-3.58 3.17-5.91 3.21-1.43.08-2.86-.31-4.08-1.03-2.02-1.19-3.44-3.37-3.65-5.71-.02-.5-.03-1-.01-1.49.18-1.9 1.12-3.72 2.58-4.96 1.66-1.44 3.98-2.13 6.15-1.72.02 1.480-.04 2.96-.04 4.44-.99-.32-2.15-.23-3.02.37-.63.41-1.11 1.04-1.36 1.75-.21.51-.15 1.07-.14 1.61.24 1.64 1.82 3.02 3.5 2.87 1.12-.01 2.19-.66 2.77-1.61.19-.33.4-.67.41-1.06.1-1.79.06-3.57.07-5.36.01-4.03-.01-8.05.02-12.07z"/><path fill="#fe2c55" transform="translate(1 1)" d="M12.525.02c1.31-.02 2.61-.01 3.91-.02.08 1.53.63 3.09 1.75 4.17 1.12 1.11 2.7 1.62 4.24 1.79v4.03c-1.44-.05-2.89-.35-4.2-.97-.57-.26-1.1-.59-1.62-.93-.01 2.92.01 5.84-.02 8.75-.08 1.4-.54 2.79-1.35 3.94-1.310 1.92-3.58 3.17-5.91 3.21-1.43.08-2.86-.31-4.08-1.03-2.02-1.19-3.44-3.37-3.65-5.71-.02-.5-.03-1-.01-1.49.18-1.9 1.12-3.72 2.58-4.96 1.66-1.44 3.98-2.13 6.15-1.72.02 1.480-.04 2.96-.04 4.44-.99-.32-2.15-.23-3.02.37-.63.41-1.11 1.04-1.36 1.75-.21.51-.15 1.07-.14 1.61.24 1.64 1.82 3.02 3.5 2.87 1.12-.01 2.19-.66 2.77-1.61.19-.33.4-.67.41-1.06.1-1.79.06-3.57.07-5.36.01-4.03-.01-8.05.02-12.07z"/><path fill="#000" d="M12.525.02c1.31-.02 2.61-.01 3.91-.02.08 1.53.63 3.09 1.75 4.17 1.12 1.11 2.7 1.62 4.24 1.79v4.03c-1.44-.05-2.89-.35-4.2-.97-.57-.26-1.1-.59-1.62-.93-.01 2.92.01 5.84-.02 8.75-.08 1.4-.54 2.79-1.35 3.94-1.310 1.92-3.58 3.17-5.91 3.21-1.43.08-2.86-.31-4.08-1.03-2.02-1.19-3.44-3.37-3.65-5.71-.02-.5-.03-1-.01-1.49.18-1.9 1.12-3.72 2.58-4.96 1.66-1.44 3.98-2.13 6.15-1.72.02 1.480-.04 2.96-.04 4.44-.99-.32-2.15-.23-3.02.37-.63.41-1.11 1.04-1.36 1.75-.21.51-.15 1.07-.14 1.61.24 1.64 1.82 3.02 3.5 2.87 1.12-.01 2.19-.66 2.77-1.61.19-.33.4-.67.41-1.06.1-1.79.06-3.57.07-5.36.01-4.03-.01-8.05.02-12.07z"/></g></svg></div>
<div class="soc off" style="left:965px;top:26px"><svg width="28" height="28" viewBox="0 0 24 24" ><path fill="#ff0000" d="M23.498 6.186a3.016 3.016 0 0 0-2.122-2.136C19.505 3.545 12 3.545 12 3.545s-7.505 0-9.377.505A3.017 3.017 0 0 0 .502 6.186C0 8.07 0 12 0 12s0 3.93.502 5.814a3.016 3.016 0 0 0 2.122 2.136c1.871.505 9.376.505 9.376.505s7.505 0 9.377-.505a3.015 3.015 0 0 0 2.122-2.136C24 15.93 24 12 24 12s0-3.93-.502-5.814z"/><path fill="#fff" d="M9.545 15.568V8.432L15.818 12l-6.273 3.568z"/></svg></div>
<div class="soc off" style="left:1013px;top:26px"><svg width="28" height="28" viewBox="0 0 24 24" ><path fill="#000" transform="translate(1.2 1.2) scale(0.9)" d="M18.901 1.153h3.68l-8.04 9.19L24 22.846h-7.406l-5.8-7.584-6.638 7.584H.474l8.6-9.83L0 1.154h7.594l5.243 6.932ZM17.61 20.644h2.039L6.486 3.24H4.298Z"/></svg></div>
<div class="soc off" style="left:1061px;top:26px"><svg width="28" height="28" viewBox="0 0 24 24" ><path fill="#1185fe" transform="translate(0.5 0.75) scale(0.96)" d="M12 10.8c-1.087-2.114-4.046-6.053-6.798-7.995C2.566.944 1.561 1.266.902 1.565.139 1.908 0 3.08 0 3.768c0 .69.378 5.65.624 6.479.815 2.736 3.713 3.66 6.383 3.364.136-.02.275-.039.415-.056-.138.022-.276.04-.415.056-3.912.58-7.387 2.005-2.83 7.078 5.013 5.19 6.87-1.113 7.823-4.308.953 3.195 2.05 9.271 7.733 4.308 4.267-4.308 1.172-6.498-2.74-7.078a8.741 8.741 0 0 1-.415-.056c.14.017.279.036.415.056 2.67.297 5.568-.628 6.383-3.364.246-.828.624-5.79.624-6.478 0-.69-.139-1.861-.902-2.206-.659-.298-1.664-.62-4.3 1.24C16.046 4.748 13.087 8.687 12 10.8Z"/></svg></div>
<div class="soc off" style="left:1109px;top:26px"><svg width="28" height="28" viewBox="0 0 24 24" ><path fill="#000" d="M12.186 24h-.007c-3.581-.024-6.334-1.205-8.184-3.509C2.35 18.44 1.5 15.586 1.472 12.01v-.017c.03-3.579.879-6.43 2.525-8.482C5.845 1.205 8.6.024 12.18 0h.014c2.746.02 5.043.725 6.826 2.098 1.677 1.29 2.858 3.13 3.509 5.467l-2.04.569c-1.104-3.96-3.898-5.984-8.304-6.015-2.910.022-5.11.936-6.54 2.717C4.307 6.504 3.616 8.914 3.589 12c.027 3.086.718 5.496 2.057 7.164 1.43 1.783 3.631 2.698 6.54 2.717 2.623-.02 4.358-.631 5.8-2.045 1.647-1.613 1.618-3.593 1.090-4.798-.31-.71-.873-1.3-1.634-1.75-.192 1.352-.622 2.446-1.284 3.272-.886 1.102-2.14 1.704-3.73 1.790-1.202.065-2.361-.218-3.259-.801-1.063-.689-1.685-1.74-1.752-2.964-.065-1.190.408-2.285 1.33-3.082.88-.76 2.119-1.207 3.583-1.291a13.853 13.853 0 0 1 3.020.142c-.126-.742-.375-1.332-.75-1.757-.513-.586-1.308-.883-2.359-.89h-.029c-.844 0-1.992.232-2.721 1.32L7.734 7.847c.98-1.454 2.568-2.256 4.478-2.256h.044c3.194.02 5.097 1.975 5.287 5.388.108.046.216.094.321.142 1.49.7 2.58 1.761 3.154 3.070.797 1.820.871 4.790-1.548 7.158-1.85 1.81-4.094 2.628-7.277 2.65Zm1.003-11.69c-.242 0-.487.007-.739.021-1.836.103-2.98.946-2.916 2.143.067 1.256 1.452 1.839 2.784 1.767 1.224-.065 2.818-.543 3.086-3.710a10.5 10.5 0 0 0-2.215-.221z"/></svg></div>
<div class="soc off" style="left:1157px;top:26px"><svg width="28" height="28" viewBox="0 0 24 24" ><rect x="0" y="0" width="24" height="24" rx="2" fill="#0a66c2"/><path fill="#fff" d="M20.447 20.452h-3.554v-5.569c0-1.328-.027-3.037-1.852-3.037-1.853 0-2.136 1.445-2.136 2.939v5.667H9.351V9h3.414v1.561h.046c.477-.9 1.637-1.85 3.37-1.85 3.601 0 4.267 2.370 4.267 5.455v6.286zM5.337 7.433c-1.144 0-2.063-.926-2.063-2.065 0-1.138.92-2.063 2.063-2.063 1.140 0 2.064.925 2.064 2.063 0 1.139-.925 2.065-2.064 2.065zm1.782 13.019H3.555V9h3.564v11.452z"/></svg></div>
<div class="soc off" style="left:1205px;top:26px"><svg width="28" height="28" viewBox="0 0 24 24" ><path fill="#ff6719" transform="translate(1.47 0.86) scale(0.93)" d="M22.539 8.242H1.46V5.406h21.08v2.836zM1.46 10.812V24L12 18.110 22.540 24V10.812H1.46zM22.540 0H1.46v2.836h21.080V0z"/></svg></div>
<div class="cell r" style="left:1257px;width:287.5px"><b class="d">2</b><b class="d">9</b><b class="d">3</b><b class="c">,</b><b class="d">6</b><b class="d">3</b><b class="d">7</b></div>
<div class="cell r" style="left:1569px;width:165px;color:#3bb45a">+ <b class="d">6</b><b class="c">,</b><b class="d">9</b><b class="d">0</b><svg class="o" viewBox="0 0 12.4 20.4"><path d="M5.35 0H7.65V20.4H5.35V3.2L1.45 5.6L0.45 3.7L5.35 0.4Z"/></svg></div>
<div class="badge" style="left:1927px;width:48px;background:#0a6fbf;border-color:#4b97d4;color:#fff">L</div>
<div class="cell r" style="left:1999px;width:112.5px"><svg class="o" viewBox="0 0 12.4 20.4"><path d="M5.35 0H7.65V20.4H5.35V3.2L1.45 5.6L0.45 3.7L5.35 0.4Z"/></svg><b class="p">.</b><b class="d">7</b><b class="q"><i>%</i></b></div>
<div class="cell r" style="left:2139px;width:161.5px"><b class="h"></b></div>
<div class="cell r" style="left:2325px;width:273.5px"><svg class="o" viewBox="0 0 12.4 20.4"><path d="M5.35 0H7.65V20.4H5.35V3.2L1.45 5.6L0.45 3.7L5.35 0.4Z"/></svg><svg class="o" viewBox="0 0 12.4 20.4"><path d="M5.35 0H7.65V20.4H5.35V3.2L1.45 5.6L0.45 3.7L5.35 0.4Z"/></svg><svg class="o" viewBox="0 0 12.4 20.4"><path d="M5.35 0H7.65V20.4H5.35V3.2L1.45 5.6L0.45 3.7L5.35 0.4Z"/></svg><b class="c">,</b><b class="d">9</b><b class="d">4</b><b class="d">7</b></div>
</div>
<div class="a" style="left:0;top:588px;width:2880px;height:80px">
<div class="a" style="left:127px;top:28px"><svg width="24" height="24" viewBox="0 0 24 24" ><circle cx="12" cy="8.05" r="7" fill="none" stroke="#8f8f8f" stroke-width="1.6"/><path d="M1.3 21.9 C4 17.8 8 16.3 12 16.3 C16 16.3 20 17.8 22.7 21.9" fill="none" stroke="#8f8f8f" stroke-width="1.6" stroke-linecap="round"/></svg></div>
<div class="cell" style="left:173px"><span class="name">Irene Montel</span></div>
<div class="chips">
<div style="position:absolute;left:24px;top:18px;display:flex;gap:20px">
<div class="chip" style="position:relative;top:0;min-width:251.4px;">One Last Chance</div>
</div></div>
<div class="soc off" style="left:821px;top:26px"><svg width="28" height="28" viewBox="0 0 24 24" ><rect x="1.6" y="1.6" width="20.8" height="20.8" rx="6" fill="none" stroke="url(#igg)" stroke-width="2.3"/><circle cx="12" cy="12" r="4.9" fill="none" stroke="url(#igg)" stroke-width="2.3"/><circle cx="18" cy="6" r="1.4" fill="url(#igg)"/><rect x="1.6" y="1.6" width="20.8" height="20.8" rx="6" fill="none" stroke="url(#igv)" stroke-width="2.3"/><circle cx="12" cy="12" r="4.9" fill="none" stroke="url(#igv)" stroke-width="2.3"/><circle cx="18" cy="6" r="1.4" fill="url(#igv)"/></svg></div>
<div class="soc off" style="left:869px;top:26px"><svg width="28" height="28" viewBox="0 0 24 24" ><path fill="#0866ff" d="M9.101 23.691v-7.98H6.627v-3.667h2.474v-1.58c0-4.085 1.848-5.978 5.858-5.978.401 0 .955.042 1.468.103a8.68 8.68 0 0 1 1.141.195v3.325a8.623 8.623 0 0 0-.653-.036 26.805 26.805 0 0 0-.733-.009c-.707 0-1.259.096-1.675.309a1.686 1.686 0 0 0-.679.622c-.258.42-.374.995-.374 1.752v1.297h3.919l-.386 2.103-.287 1.564h-3.246v8.245C19.396 23.238 24 18.179 24 12.044c0-6.627-5.373-12-12-12s-12 5.373-12 12c0 5.628 3.874 10.35 9.101 11.647Z"/></svg></div>
<div class="soc off" style="left:917px;top:26px"><svg width="28" height="28" viewBox="0 0 24 24" ><g transform="translate(1.2 0.6) scale(0.93)"><path fill="#25f4ee" transform="translate(-1 -1)" d="M12.525.02c1.31-.02 2.61-.01 3.91-.02.08 1.53.63 3.09 1.75 4.17 1.12 1.11 2.7 1.62 4.24 1.79v4.03c-1.44-.05-2.89-.35-4.2-.97-.57-.26-1.1-.59-1.62-.93-.01 2.92.01 5.84-.02 8.75-.08 1.4-.54 2.79-1.35 3.94-1.310 1.92-3.58 3.17-5.91 3.21-1.43.08-2.86-.31-4.08-1.03-2.02-1.19-3.44-3.37-3.65-5.71-.02-.5-.03-1-.01-1.49.18-1.9 1.12-3.72 2.58-4.96 1.66-1.44 3.98-2.13 6.15-1.72.02 1.480-.04 2.96-.04 4.44-.99-.32-2.15-.23-3.02.37-.63.41-1.11 1.04-1.36 1.75-.21.51-.15 1.07-.14 1.61.24 1.64 1.82 3.02 3.5 2.87 1.12-.01 2.19-.66 2.77-1.61.19-.33.4-.67.41-1.06.1-1.79.06-3.57.07-5.36.01-4.03-.01-8.05.02-12.07z"/><path fill="#fe2c55" transform="translate(1 1)" d="M12.525.02c1.31-.02 2.61-.01 3.91-.02.08 1.53.63 3.09 1.75 4.17 1.12 1.11 2.7 1.62 4.24 1.79v4.03c-1.44-.05-2.89-.35-4.2-.97-.57-.26-1.1-.59-1.62-.93-.01 2.92.01 5.84-.02 8.75-.08 1.4-.54 2.79-1.35 3.94-1.310 1.92-3.58 3.17-5.91 3.21-1.43.08-2.86-.31-4.08-1.03-2.02-1.19-3.44-3.37-3.65-5.71-.02-.5-.03-1-.01-1.49.18-1.9 1.12-3.72 2.58-4.96 1.66-1.44 3.98-2.13 6.15-1.72.02 1.480-.04 2.96-.04 4.44-.99-.32-2.15-.23-3.02.37-.63.41-1.11 1.04-1.36 1.75-.21.51-.15 1.07-.14 1.61.24 1.64 1.82 3.02 3.5 2.87 1.12-.01 2.19-.66 2.77-1.61.19-.33.4-.67.41-1.06.1-1.79.06-3.57.07-5.36.01-4.03-.01-8.05.02-12.07z"/><path fill="#000" d="M12.525.02c1.31-.02 2.61-.01 3.91-.02.08 1.53.63 3.09 1.75 4.17 1.12 1.11 2.7 1.62 4.24 1.79v4.03c-1.44-.05-2.89-.35-4.2-.97-.57-.26-1.1-.59-1.62-.93-.01 2.92.01 5.84-.02 8.75-.08 1.4-.54 2.79-1.35 3.94-1.310 1.92-3.58 3.17-5.91 3.21-1.43.08-2.86-.31-4.08-1.03-2.02-1.19-3.44-3.37-3.65-5.71-.02-.5-.03-1-.01-1.49.18-1.9 1.12-3.72 2.58-4.96 1.66-1.44 3.98-2.13 6.15-1.72.02 1.480-.04 2.96-.04 4.44-.99-.32-2.15-.23-3.02.37-.63.41-1.11 1.04-1.36 1.75-.21.51-.15 1.07-.14 1.61.24 1.64 1.82 3.02 3.5 2.87 1.12-.01 2.19-.66 2.77-1.61.19-.33.4-.67.41-1.06.1-1.79.06-3.57.07-5.36.01-4.03-.01-8.05.02-12.07z"/></g></svg></div>
<div class="soc off" style="left:965px;top:26px"><svg width="28" height="28" viewBox="0 0 24 24" ><path fill="#ff0000" d="M23.498 6.186a3.016 3.016 0 0 0-2.122-2.136C19.505 3.545 12 3.545 12 3.545s-7.505 0-9.377.505A3.017 3.017 0 0 0 .502 6.186C0 8.07 0 12 0 12s0 3.93.502 5.814a3.016 3.016 0 0 0 2.122 2.136c1.871.505 9.376.505 9.376.505s7.505 0 9.377-.505a3.015 3.015 0 0 0 2.122-2.136C24 15.93 24 12 24 12s0-3.93-.502-5.814z"/><path fill="#fff" d="M9.545 15.568V8.432L15.818 12l-6.273 3.568z"/></svg></div>
<div class="soc" style="left:1013px;top:26px"><svg width="28" height="28" viewBox="0 0 24 24" ><path fill="#000" transform="translate(1.2 1.2) scale(0.9)" d="M18.901 1.153h3.68l-8.04 9.19L24 22.846h-7.406l-5.8-7.584-6.638 7.584H.474l8.6-9.83L0 1.154h7.594l5.243 6.932ZM17.61 20.644h2.039L6.486 3.24H4.298Z"/></svg></div>
<div class="soc" style="left:1061px;top:26px"><svg width="28" height="28" viewBox="0 0 24 24" ><path fill="#1185fe" transform="translate(0.5 0.75) scale(0.96)" d="M12 10.8c-1.087-2.114-4.046-6.053-6.798-7.995C2.566.944 1.561 1.266.902 1.565.139 1.908 0 3.08 0 3.768c0 .69.378 5.65.624 6.479.815 2.736 3.713 3.66 6.383 3.364.136-.02.275-.039.415-.056-.138.022-.276.04-.415.056-3.912.58-7.387 2.005-2.83 7.078 5.013 5.19 6.87-1.113 7.823-4.308.953 3.195 2.05 9.271 7.733 4.308 4.267-4.308 1.172-6.498-2.74-7.078a8.741 8.741 0 0 1-.415-.056c.14.017.279.036.415.056 2.67.297 5.568-.628 6.383-3.364.246-.828.624-5.79.624-6.478 0-.69-.139-1.861-.902-2.206-.659-.298-1.664-.62-4.3 1.24C16.046 4.748 13.087 8.687 12 10.8Z"/></svg></div>
<div class="soc" style="left:1109px;top:26px"><svg width="28" height="28" viewBox="0 0 24 24" ><path fill="#000" d="M12.186 24h-.007c-3.581-.024-6.334-1.205-8.184-3.509C2.35 18.44 1.5 15.586 1.472 12.01v-.017c.03-3.579.879-6.43 2.525-8.482C5.845 1.205 8.6.024 12.18 0h.014c2.746.02 5.043.725 6.826 2.098 1.677 1.29 2.858 3.13 3.509 5.467l-2.04.569c-1.104-3.96-3.898-5.984-8.304-6.015-2.910.022-5.11.936-6.54 2.717C4.307 6.504 3.616 8.914 3.589 12c.027 3.086.718 5.496 2.057 7.164 1.43 1.783 3.631 2.698 6.54 2.717 2.623-.02 4.358-.631 5.8-2.045 1.647-1.613 1.618-3.593 1.090-4.798-.31-.71-.873-1.3-1.634-1.75-.192 1.352-.622 2.446-1.284 3.272-.886 1.102-2.14 1.704-3.73 1.790-1.202.065-2.361-.218-3.259-.801-1.063-.689-1.685-1.74-1.752-2.964-.065-1.190.408-2.285 1.33-3.082.88-.76 2.119-1.207 3.583-1.291a13.853 13.853 0 0 1 3.020.142c-.126-.742-.375-1.332-.75-1.757-.513-.586-1.308-.883-2.359-.89h-.029c-.844 0-1.992.232-2.721 1.32L7.734 7.847c.98-1.454 2.568-2.256 4.478-2.256h.044c3.194.02 5.097 1.975 5.287 5.388.108.046.216.094.321.142 1.49.7 2.58 1.761 3.154 3.070.797 1.820.871 4.790-1.548 7.158-1.85 1.81-4.094 2.628-7.277 2.65Zm1.003-11.69c-.242 0-.487.007-.739.021-1.836.103-2.98.946-2.916 2.143.067 1.256 1.452 1.839 2.784 1.767 1.224-.065 2.818-.543 3.086-3.710a10.5 10.5 0 0 0-2.215-.221z"/></svg></div>
<div class="soc" style="left:1157px;top:26px"><svg width="28" height="28" viewBox="0 0 24 24" ><rect x="0" y="0" width="24" height="24" rx="2" fill="#0a66c2"/><path fill="#fff" d="M20.447 20.452h-3.554v-5.569c0-1.328-.027-3.037-1.852-3.037-1.853 0-2.136 1.445-2.136 2.939v5.667H9.351V9h3.414v1.561h.046c.477-.9 1.637-1.85 3.37-1.85 3.601 0 4.267 2.370 4.267 5.455v6.286zM5.337 7.433c-1.144 0-2.063-.926-2.063-2.065 0-1.138.92-2.063 2.063-2.063 1.140 0 2.064.925 2.064 2.063 0 1.139-.925 2.065-2.064 2.065zm1.782 13.019H3.555V9h3.564v11.452z"/></svg></div>
<div class="soc off" style="left:1205px;top:26px"><svg width="28" height="28" viewBox="0 0 24 24" ><path fill="#ff6719" transform="translate(1.47 0.86) scale(0.93)" d="M22.539 8.242H1.46V5.406h21.08v2.836zM1.46 10.812V24L12 18.110 22.540 24V10.812H1.46zM22.540 0H1.46v2.836h21.080V0z"/></svg></div>
<div class="cell r" style="left:1257px;width:287.5px"><b class="d">3</b><b class="c">,</b><b class="d">5</b><b class="d">0</b><b class="d">8</b></div>
<div class="cell r" style="left:1569px;width:165px;color:#f45c17"><b class="h"></b> <b class="d">4</b><b class="d">3</b></div>
<div class="badge" style="left:1925px;width:50px;background:#b3e0cf;border-color:#c6e8db;color:#212121">S</div>
<div class="cell r" style="left:1999px;width:112.5px"><b class="d">2</b><b class="p">.</b><b class="d">8</b><b class="q"><i>%</i></b></div>
<div class="cell r" style="left:2139px;width:161.5px"><b class="d">8</b><b class="d">5</b><b class="d">7</b></div>
<div class="cell r" style="left:2325px;width:273.5px"><b class="h"></b></div>
</div>
<div class="a" style="left:0;top:668px;width:2880px;height:80px">
<div class="a" style="left:127px;top:28px"><svg width="24" height="24" viewBox="0 0 24 24" ><circle cx="12" cy="8.05" r="7" fill="none" stroke="#8f8f8f" stroke-width="1.6"/><path d="M1.3 21.9 C4 17.8 8 16.3 12 16.3 C16 16.3 20 17.8 22.7 21.9" fill="none" stroke="#8f8f8f" stroke-width="1.6" stroke-linecap="round"/></svg></div>
<div class="cell" style="left:173px"><span class="name">Paula DuPont</span></div>
<div class="chips">
<div style="position:absolute;left:24px;top:18px;display:flex;gap:20px">
<div class="chip" style="position:relative;top:0;min-width:236px;">Clear Your Mind</div>
<div class="chip" style="position:relative;top:0;">Book Two</div>
</div></div>
<div class="soc off" style="left:821px;top:26px"><svg width="28" height="28" viewBox="0 0 24 24" ><rect x="1.6" y="1.6" width="20.8" height="20.8" rx="6" fill="none" stroke="url(#igg)" stroke-width="2.3"/><circle cx="12" cy="12" r="4.9" fill="none" stroke="url(#igg)" stroke-width="2.3"/><circle cx="18" cy="6" r="1.4" fill="url(#igg)"/><rect x="1.6" y="1.6" width="20.8" height="20.8" rx="6" fill="none" stroke="url(#igv)" stroke-width="2.3"/><circle cx="12" cy="12" r="4.9" fill="none" stroke="url(#igv)" stroke-width="2.3"/><circle cx="18" cy="6" r="1.4" fill="url(#igv)"/></svg></div>
<div class="soc off" style="left:869px;top:26px"><svg width="28" height="28" viewBox="0 0 24 24" ><path fill="#0866ff" d="M9.101 23.691v-7.98H6.627v-3.667h2.474v-1.58c0-4.085 1.848-5.978 5.858-5.978.401 0 .955.042 1.468.103a8.68 8.68 0 0 1 1.141.195v3.325a8.623 8.623 0 0 0-.653-.036 26.805 26.805 0 0 0-.733-.009c-.707 0-1.259.096-1.675.309a1.686 1.686 0 0 0-.679.622c-.258.42-.374.995-.374 1.752v1.297h3.919l-.386 2.103-.287 1.564h-3.246v8.245C19.396 23.238 24 18.179 24 12.044c0-6.627-5.373-12-12-12s-12 5.373-12 12c0 5.628 3.874 10.35 9.101 11.647Z"/></svg></div>
<div class="soc off" style="left:917px;top:26px"><svg width="28" height="28" viewBox="0 0 24 24" ><g transform="translate(1.2 0.6) scale(0.93)"><path fill="#25f4ee" transform="translate(-1 -1)" d="M12.525.02c1.31-.02 2.61-.01 3.91-.02.08 1.53.63 3.09 1.75 4.17 1.12 1.11 2.7 1.62 4.24 1.79v4.03c-1.44-.05-2.89-.35-4.2-.97-.57-.26-1.1-.59-1.62-.93-.01 2.92.01 5.84-.02 8.75-.08 1.4-.54 2.79-1.35 3.94-1.310 1.92-3.58 3.17-5.91 3.21-1.43.08-2.86-.31-4.08-1.03-2.02-1.19-3.44-3.37-3.65-5.71-.02-.5-.03-1-.01-1.49.18-1.9 1.12-3.72 2.58-4.96 1.66-1.44 3.98-2.13 6.15-1.72.02 1.480-.04 2.96-.04 4.44-.99-.32-2.15-.23-3.02.37-.63.41-1.11 1.04-1.36 1.75-.21.51-.15 1.07-.14 1.61.24 1.64 1.82 3.02 3.5 2.87 1.12-.01 2.19-.66 2.77-1.61.19-.33.4-.67.41-1.06.1-1.79.06-3.57.07-5.36.01-4.03-.01-8.05.02-12.07z"/><path fill="#fe2c55" transform="translate(1 1)" d="M12.525.02c1.31-.02 2.61-.01 3.91-.02.08 1.53.63 3.09 1.75 4.17 1.12 1.11 2.7 1.62 4.24 1.79v4.03c-1.44-.05-2.89-.35-4.2-.97-.57-.26-1.1-.59-1.62-.93-.01 2.92.01 5.84-.02 8.75-.08 1.4-.54 2.79-1.35 3.94-1.310 1.92-3.58 3.17-5.91 3.21-1.43.08-2.86-.31-4.08-1.03-2.02-1.19-3.44-3.37-3.65-5.71-.02-.5-.03-1-.01-1.49.18-1.9 1.12-3.72 2.58-4.96 1.66-1.44 3.98-2.13 6.15-1.72.02 1.480-.04 2.96-.04 4.44-.99-.32-2.15-.23-3.02.37-.63.41-1.11 1.04-1.36 1.75-.21.51-.15 1.07-.14 1.61.24 1.64 1.82 3.02 3.5 2.87 1.12-.01 2.19-.66 2.77-1.61.19-.33.4-.67.41-1.06.1-1.79.06-3.57.07-5.36.01-4.03-.01-8.05.02-12.07z"/><path fill="#000" d="M12.525.02c1.31-.02 2.61-.01 3.91-.02.08 1.53.63 3.09 1.75 4.17 1.12 1.11 2.7 1.62 4.24 1.79v4.03c-1.44-.05-2.89-.35-4.2-.97-.57-.26-1.1-.59-1.62-.93-.01 2.92.01 5.84-.02 8.75-.08 1.4-.54 2.79-1.35 3.94-1.310 1.92-3.58 3.17-5.91 3.21-1.43.08-2.86-.31-4.08-1.03-2.02-1.19-3.44-3.37-3.65-5.71-.02-.5-.03-1-.01-1.49.18-1.9 1.12-3.72 2.58-4.96 1.66-1.44 3.98-2.13 6.15-1.72.02 1.480-.04 2.96-.04 4.44-.99-.32-2.15-.23-3.02.37-.63.41-1.11 1.04-1.36 1.75-.21.51-.15 1.07-.14 1.61.24 1.64 1.82 3.02 3.5 2.87 1.12-.01 2.19-.66 2.77-1.61.19-.33.4-.67.41-1.06.1-1.79.06-3.57.07-5.36.01-4.03-.01-8.05.02-12.07z"/></g></svg></div>
<div class="soc off" style="left:965px;top:26px"><svg width="28" height="28" viewBox="0 0 24 24" ><path fill="#ff0000" d="M23.498 6.186a3.016 3.016 0 0 0-2.122-2.136C19.505 3.545 12 3.545 12 3.545s-7.505 0-9.377.505A3.017 3.017 0 0 0 .502 6.186C0 8.07 0 12 0 12s0 3.93.502 5.814a3.016 3.016 0 0 0 2.122 2.136c1.871.505 9.376.505 9.376.505s7.505 0 9.377-.505a3.015 3.015 0 0 0 2.122-2.136C24 15.93 24 12 24 12s0-3.93-.502-5.814z"/><path fill="#fff" d="M9.545 15.568V8.432L15.818 12l-6.273 3.568z"/></svg></div>
<div class="soc off" style="left:1013px;top:26px"><svg width="28" height="28" viewBox="0 0 24 24" ><path fill="#000" transform="translate(1.2 1.2) scale(0.9)" d="M18.901 1.153h3.68l-8.04 9.19L24 22.846h-7.406l-5.8-7.584-6.638 7.584H.474l8.6-9.83L0 1.154h7.594l5.243 6.932ZM17.61 20.644h2.039L6.486 3.24H4.298Z"/></svg></div>
<div class="soc off" style="left:1061px;top:26px"><svg width="28" height="28" viewBox="0 0 24 24" ><path fill="#1185fe" transform="translate(0.5 0.75) scale(0.96)" d="M12 10.8c-1.087-2.114-4.046-6.053-6.798-7.995C2.566.944 1.561 1.266.902 1.565.139 1.908 0 3.08 0 3.768c0 .69.378 5.65.624 6.479.815 2.736 3.713 3.66 6.383 3.364.136-.02.275-.039.415-.056-.138.022-.276.04-.415.056-3.912.58-7.387 2.005-2.83 7.078 5.013 5.19 6.87-1.113 7.823-4.308.953 3.195 2.05 9.271 7.733 4.308 4.267-4.308 1.172-6.498-2.74-7.078a8.741 8.741 0 0 1-.415-.056c.14.017.279.036.415.056 2.67.297 5.568-.628 6.383-3.364.246-.828.624-5.79.624-6.478 0-.69-.139-1.861-.902-2.206-.659-.298-1.664-.62-4.3 1.24C16.046 4.748 13.087 8.687 12 10.8Z"/></svg></div>
<div class="soc off" style="left:1109px;top:26px"><svg width="28" height="28" viewBox="0 0 24 24" ><path fill="#000" d="M12.186 24h-.007c-3.581-.024-6.334-1.205-8.184-3.509C2.35 18.44 1.5 15.586 1.472 12.01v-.017c.03-3.579.879-6.43 2.525-8.482C5.845 1.205 8.6.024 12.18 0h.014c2.746.02 5.043.725 6.826 2.098 1.677 1.29 2.858 3.13 3.509 5.467l-2.04.569c-1.104-3.96-3.898-5.984-8.304-6.015-2.910.022-5.11.936-6.54 2.717C4.307 6.504 3.616 8.914 3.589 12c.027 3.086.718 5.496 2.057 7.164 1.43 1.783 3.631 2.698 6.54 2.717 2.623-.02 4.358-.631 5.8-2.045 1.647-1.613 1.618-3.593 1.090-4.798-.31-.71-.873-1.3-1.634-1.75-.192 1.352-.622 2.446-1.284 3.272-.886 1.102-2.14 1.704-3.73 1.790-1.202.065-2.361-.218-3.259-.801-1.063-.689-1.685-1.74-1.752-2.964-.065-1.190.408-2.285 1.33-3.082.88-.76 2.119-1.207 3.583-1.291a13.853 13.853 0 0 1 3.020.142c-.126-.742-.375-1.332-.75-1.757-.513-.586-1.308-.883-2.359-.89h-.029c-.844 0-1.992.232-2.721 1.32L7.734 7.847c.98-1.454 2.568-2.256 4.478-2.256h.044c3.194.02 5.097 1.975 5.287 5.388.108.046.216.094.321.142 1.49.7 2.58 1.761 3.154 3.070.797 1.820.871 4.790-1.548 7.158-1.85 1.81-4.094 2.628-7.277 2.65Zm1.003-11.69c-.242 0-.487.007-.739.021-1.836.103-2.98.946-2.916 2.143.067 1.256 1.452 1.839 2.784 1.767 1.224-.065 2.818-.543 3.086-3.710a10.5 10.5 0 0 0-2.215-.221z"/></svg></div>
<div class="soc off" style="left:1157px;top:26px"><svg width="28" height="28" viewBox="0 0 24 24" ><rect x="0" y="0" width="24" height="24" rx="2" fill="#0a66c2"/><path fill="#fff" d="M20.447 20.452h-3.554v-5.569c0-1.328-.027-3.037-1.852-3.037-1.853 0-2.136 1.445-2.136 2.939v5.667H9.351V9h3.414v1.561h.046c.477-.9 1.637-1.85 3.37-1.85 3.601 0 4.267 2.370 4.267 5.455v6.286zM5.337 7.433c-1.144 0-2.063-.926-2.063-2.065 0-1.138.92-2.063 2.063-2.063 1.140 0 2.064.925 2.064 2.063 0 1.139-.925 2.065-2.064 2.065zm1.782 13.019H3.555V9h3.564v11.452z"/></svg></div>
<div class="soc off" style="left:1205px;top:26px"><svg width="28" height="28" viewBox="0 0 24 24" ><path fill="#ff6719" transform="translate(1.47 0.86) scale(0.93)" d="M22.539 8.242H1.46V5.406h21.08v2.836zM1.46 10.812V24L12 18.110 22.540 24V10.812H1.46zM22.540 0H1.46v2.836h21.080V0z"/></svg></div>
<div class="cell r" style="left:1257px;width:287.5px"><b class="h"></b></div>
<div class="cell r" style="left:1569px;width:165px;color:#212121"><b class="h"></b></div>
<div class="badge" style="left:1851px;width:124px;background:#f9f9f7;border-color:#eeede9;color:#212121">Absent</div>
<div class="cell r" style="left:1999px;width:112.5px"><b class="h"></b></div>
<div class="cell r" style="left:2139px;width:161.5px"><b class="h"></b></div>
<div class="cell r" style="left:2325px;width:273.5px"><b class="h"></b></div>
</div>
<div class="a" style="left:0;top:748px;width:2880px;height:80px">
<div class="a" style="left:127px;top:28px"><svg width="24" height="24" viewBox="0 0 24 24" ><circle cx="12" cy="8.05" r="7" fill="none" stroke="#8f8f8f" stroke-width="1.6"/><path d="M1.3 21.9 C4 17.8 8 16.3 12 16.3 C16 16.3 20 17.8 22.7 21.9" fill="none" stroke="#8f8f8f" stroke-width="1.6" stroke-linecap="round"/></svg></div>
<div class="cell" style="left:173px"><span class="name">Omar Patel</span></div>
<div class="chips">
<div style="position:absolute;left:24px;top:18px;display:flex;gap:20px">
<div class="chip" style="position:relative;top:0;">Build the Life You Keep</div>
</div></div>
<div class="soc" style="left:821px;top:26px"><svg width="28" height="28" viewBox="0 0 24 24" ><rect x="1.6" y="1.6" width="20.8" height="20.8" rx="6" fill="none" stroke="url(#igg)" stroke-width="2.3"/><circle cx="12" cy="12" r="4.9" fill="none" stroke="url(#igg)" stroke-width="2.3"/><circle cx="18" cy="6" r="1.4" fill="url(#igg)"/><rect x="1.6" y="1.6" width="20.8" height="20.8" rx="6" fill="none" stroke="url(#igv)" stroke-width="2.3"/><circle cx="12" cy="12" r="4.9" fill="none" stroke="url(#igv)" stroke-width="2.3"/><circle cx="18" cy="6" r="1.4" fill="url(#igv)"/></svg></div>
<div class="soc off" style="left:869px;top:26px"><svg width="28" height="28" viewBox="0 0 24 24" ><path fill="#0866ff" d="M9.101 23.691v-7.98H6.627v-3.667h2.474v-1.58c0-4.085 1.848-5.978 5.858-5.978.401 0 .955.042 1.468.103a8.68 8.68 0 0 1 1.141.195v3.325a8.623 8.623 0 0 0-.653-.036 26.805 26.805 0 0 0-.733-.009c-.707 0-1.259.096-1.675.309a1.686 1.686 0 0 0-.679.622c-.258.42-.374.995-.374 1.752v1.297h3.919l-.386 2.103-.287 1.564h-3.246v8.245C19.396 23.238 24 18.179 24 12.044c0-6.627-5.373-12-12-12s-12 5.373-12 12c0 5.628 3.874 10.35 9.101 11.647Z"/></svg></div>
<div class="soc" style="left:917px;top:26px"><svg width="28" height="28" viewBox="0 0 24 24" ><g transform="translate(1.2 0.6) scale(0.93)"><path fill="#25f4ee" transform="translate(-1 -1)" d="M12.525.02c1.31-.02 2.61-.01 3.91-.02.08 1.53.63 3.09 1.75 4.17 1.12 1.11 2.7 1.62 4.24 1.79v4.03c-1.44-.05-2.89-.35-4.2-.97-.57-.26-1.1-.59-1.62-.93-.01 2.92.01 5.84-.02 8.75-.08 1.4-.54 2.79-1.35 3.94-1.310 1.92-3.58 3.17-5.91 3.21-1.43.08-2.86-.31-4.08-1.03-2.02-1.19-3.44-3.37-3.65-5.71-.02-.5-.03-1-.01-1.49.18-1.9 1.12-3.72 2.58-4.96 1.66-1.44 3.98-2.13 6.15-1.72.02 1.480-.04 2.96-.04 4.44-.99-.32-2.15-.23-3.02.37-.63.41-1.11 1.04-1.36 1.75-.21.51-.15 1.07-.14 1.61.24 1.64 1.82 3.02 3.5 2.87 1.12-.01 2.19-.66 2.77-1.61.19-.33.4-.67.41-1.06.1-1.79.06-3.57.07-5.36.01-4.03-.01-8.05.02-12.07z"/><path fill="#fe2c55" transform="translate(1 1)" d="M12.525.02c1.31-.02 2.61-.01 3.91-.02.08 1.53.63 3.09 1.75 4.17 1.12 1.11 2.7 1.62 4.24 1.79v4.03c-1.44-.05-2.89-.35-4.2-.97-.57-.26-1.1-.59-1.62-.93-.01 2.92.01 5.84-.02 8.75-.08 1.4-.54 2.79-1.35 3.94-1.310 1.92-3.58 3.17-5.91 3.21-1.43.08-2.86-.31-4.08-1.03-2.02-1.19-3.44-3.37-3.65-5.71-.02-.5-.03-1-.01-1.49.18-1.9 1.12-3.72 2.58-4.96 1.66-1.44 3.98-2.13 6.15-1.72.02 1.480-.04 2.96-.04 4.44-.99-.32-2.15-.23-3.02.37-.63.41-1.11 1.04-1.36 1.75-.21.51-.15 1.07-.14 1.61.24 1.64 1.82 3.02 3.5 2.87 1.12-.01 2.19-.66 2.77-1.61.19-.33.4-.67.41-1.06.1-1.79.06-3.57.07-5.36.01-4.03-.01-8.05.02-12.07z"/><path fill="#000" d="M12.525.02c1.31-.02 2.61-.01 3.91-.02.08 1.53.63 3.09 1.75 4.17 1.12 1.11 2.7 1.62 4.24 1.79v4.03c-1.44-.05-2.89-.35-4.2-.97-.57-.26-1.1-.59-1.62-.93-.01 2.92.01 5.84-.02 8.75-.08 1.4-.54 2.79-1.35 3.94-1.310 1.92-3.58 3.17-5.91 3.21-1.43.08-2.86-.31-4.08-1.03-2.02-1.19-3.44-3.37-3.65-5.71-.02-.5-.03-1-.01-1.49.18-1.9 1.12-3.72 2.58-4.96 1.66-1.44 3.98-2.13 6.15-1.72.02 1.480-.04 2.96-.04 4.44-.99-.32-2.15-.23-3.02.37-.63.41-1.11 1.04-1.36 1.75-.21.51-.15 1.07-.14 1.61.24 1.64 1.82 3.02 3.5 2.87 1.12-.01 2.19-.66 2.77-1.61.19-.33.4-.67.41-1.06.1-1.79.06-3.57.07-5.36.01-4.03-.01-8.05.02-12.07z"/></g></svg></div>
<div class="soc off" style="left:965px;top:26px"><svg width="28" height="28" viewBox="0 0 24 24" ><path fill="#ff0000" d="M23.498 6.186a3.016 3.016 0 0 0-2.122-2.136C19.505 3.545 12 3.545 12 3.545s-7.505 0-9.377.505A3.017 3.017 0 0 0 .502 6.186C0 8.07 0 12 0 12s0 3.93.502 5.814a3.016 3.016 0 0 0 2.122 2.136c1.871.505 9.376.505 9.376.505s7.505 0 9.377-.505a3.015 3.015 0 0 0 2.122-2.136C24 15.93 24 12 24 12s0-3.93-.502-5.814z"/><path fill="#fff" d="M9.545 15.568V8.432L15.818 12l-6.273 3.568z"/></svg></div>
<div class="soc off" style="left:1013px;top:26px"><svg width="28" height="28" viewBox="0 0 24 24" ><path fill="#000" transform="translate(1.2 1.2) scale(0.9)" d="M18.901 1.153h3.68l-8.04 9.19L24 22.846h-7.406l-5.8-7.584-6.638 7.584H.474l8.6-9.83L0 1.154h7.594l5.243 6.932ZM17.61 20.644h2.039L6.486 3.24H4.298Z"/></svg></div>
<div class="soc" style="left:1061px;top:26px"><svg width="28" height="28" viewBox="0 0 24 24" ><path fill="#1185fe" transform="translate(0.5 0.75) scale(0.96)" d="M12 10.8c-1.087-2.114-4.046-6.053-6.798-7.995C2.566.944 1.561 1.266.902 1.565.139 1.908 0 3.08 0 3.768c0 .69.378 5.65.624 6.479.815 2.736 3.713 3.66 6.383 3.364.136-.02.275-.039.415-.056-.138.022-.276.04-.415.056-3.912.58-7.387 2.005-2.83 7.078 5.013 5.19 6.87-1.113 7.823-4.308.953 3.195 2.05 9.271 7.733 4.308 4.267-4.308 1.172-6.498-2.74-7.078a8.741 8.741 0 0 1-.415-.056c.14.017.279.036.415.056 2.67.297 5.568-.628 6.383-3.364.246-.828.624-5.79.624-6.478 0-.69-.139-1.861-.902-2.206-.659-.298-1.664-.62-4.3 1.24C16.046 4.748 13.087 8.687 12 10.8Z"/></svg></div>
<div class="soc off" style="left:1109px;top:26px"><svg width="28" height="28" viewBox="0 0 24 24" ><path fill="#000" d="M12.186 24h-.007c-3.581-.024-6.334-1.205-8.184-3.509C2.35 18.44 1.5 15.586 1.472 12.01v-.017c.03-3.579.879-6.43 2.525-8.482C5.845 1.205 8.6.024 12.18 0h.014c2.746.02 5.043.725 6.826 2.098 1.677 1.29 2.858 3.13 3.509 5.467l-2.04.569c-1.104-3.96-3.898-5.984-8.304-6.015-2.910.022-5.11.936-6.54 2.717C4.307 6.504 3.616 8.914 3.589 12c.027 3.086.718 5.496 2.057 7.164 1.43 1.783 3.631 2.698 6.54 2.717 2.623-.02 4.358-.631 5.8-2.045 1.647-1.613 1.618-3.593 1.090-4.798-.31-.71-.873-1.3-1.634-1.75-.192 1.352-.622 2.446-1.284 3.272-.886 1.102-2.14 1.704-3.73 1.790-1.202.065-2.361-.218-3.259-.801-1.063-.689-1.685-1.74-1.752-2.964-.065-1.190.408-2.285 1.33-3.082.88-.76 2.119-1.207 3.583-1.291a13.853 13.853 0 0 1 3.020.142c-.126-.742-.375-1.332-.75-1.757-.513-.586-1.308-.883-2.359-.89h-.029c-.844 0-1.992.232-2.721 1.32L7.734 7.847c.98-1.454 2.568-2.256 4.478-2.256h.044c3.194.02 5.097 1.975 5.287 5.388.108.046.216.094.321.142 1.49.7 2.58 1.761 3.154 3.070.797 1.820.871 4.790-1.548 7.158-1.85 1.81-4.094 2.628-7.277 2.65Zm1.003-11.69c-.242 0-.487.007-.739.021-1.836.103-2.98.946-2.916 2.143.067 1.256 1.452 1.839 2.784 1.767 1.224-.065 2.818-.543 3.086-3.710a10.5 10.5 0 0 0-2.215-.221z"/></svg></div>
<div class="soc off" style="left:1157px;top:26px"><svg width="28" height="28" viewBox="0 0 24 24" ><rect x="0" y="0" width="24" height="24" rx="2" fill="#0a66c2"/><path fill="#fff" d="M20.447 20.452h-3.554v-5.569c0-1.328-.027-3.037-1.852-3.037-1.853 0-2.136 1.445-2.136 2.939v5.667H9.351V9h3.414v1.561h.046c.477-.9 1.637-1.85 3.37-1.85 3.601 0 4.267 2.370 4.267 5.455v6.286zM5.337 7.433c-1.144 0-2.063-.926-2.063-2.065 0-1.138.92-2.063 2.063-2.063 1.140 0 2.064.925 2.064 2.063 0 1.139-.925 2.065-2.064 2.065zm1.782 13.019H3.555V9h3.564v11.452z"/></svg></div>
<div class="soc off" style="left:1205px;top:26px"><svg width="28" height="28" viewBox="0 0 24 24" ><path fill="#ff6719" transform="translate(1.47 0.86) scale(0.93)" d="M22.539 8.242H1.46V5.406h21.08v2.836zM1.46 10.812V24L12 18.110 22.540 24V10.812H1.46zM22.540 0H1.46v2.836h21.080V0z"/></svg></div>
<div class="cell r" style="left:1257px;width:287.5px"><svg class="o" viewBox="0 0 12.4 20.4"><path d="M5.35 0H7.65V20.4H5.35V3.2L1.45 5.6L0.45 3.7L5.35 0.4Z"/></svg><b class="c">,</b><b class="d">6</b><b class="d">2</b><b class="d">5</b></div>
<div class="cell r" style="left:1569px;width:165px;color:#3bb45a">+<b class="d">6</b><svg class="o" viewBox="0 0 12.4 20.4"><path d="M5.35 0H7.65V20.4H5.35V3.2L1.45 5.6L0.45 3.7L5.35 0.4Z"/></svg><b class="d">2</b></div>
<div class="badge" style="left:1925px;width:50px;background:#b3e0cf;border-color:#c6e8db;color:#212121">S</div>
<div class="cell r" style="left:1999px;width:112.5px"><b class="d">4</b><b class="p">.</b><svg class="o" viewBox="0 0 12.4 20.4"><path d="M5.35 0H7.65V20.4H5.35V3.2L1.45 5.6L0.45 3.7L5.35 0.4Z"/></svg><b class="q"><i>%</i></b></div>
<div class="cell r" style="left:2139px;width:161.5px"><b class="h"></b></div>
<div class="cell r" style="left:2325px;width:273.5px"><b class="d">6</b><b class="d">8</b><svg class="o" viewBox="0 0 12.4 20.4"><path d="M5.35 0H7.65V20.4H5.35V3.2L1.45 5.6L0.45 3.7L5.35 0.4Z"/></svg></div>
</div>
<div class="a" style="left:0;top:828px;width:2880px;height:80px">
<div class="a" style="left:127px;top:28px"><svg width="24" height="24" viewBox="0 0 24 24" ><circle cx="12" cy="8.05" r="7" fill="none" stroke="#8f8f8f" stroke-width="1.6"/><path d="M1.3 21.9 C4 17.8 8 16.3 12 16.3 C16 16.3 20 17.8 22.7 21.9" fill="none" stroke="#8f8f8f" stroke-width="1.6" stroke-linecap="round"/></svg></div>
<div class="cell" style="left:173px"><span class="name">Fiona West</span></div>
<div class="chips">
<div style="position:absolute;left:24px;top:18px;display:flex;gap:20px">
<div class="chip" style="position:relative;top:0;min-width:283.5px;">Fresh Market Meals</div>
</div></div>
<div class="soc" style="left:821px;top:26px"><svg width="28" height="28" viewBox="0 0 24 24" ><rect x="1.6" y="1.6" width="20.8" height="20.8" rx="6" fill="none" stroke="url(#igg)" stroke-width="2.3"/><circle cx="12" cy="12" r="4.9" fill="none" stroke="url(#igg)" stroke-width="2.3"/><circle cx="18" cy="6" r="1.4" fill="url(#igg)"/><rect x="1.6" y="1.6" width="20.8" height="20.8" rx="6" fill="none" stroke="url(#igv)" stroke-width="2.3"/><circle cx="12" cy="12" r="4.9" fill="none" stroke="url(#igv)" stroke-width="2.3"/><circle cx="18" cy="6" r="1.4" fill="url(#igv)"/></svg></div>
<div class="soc" style="left:869px;top:26px"><svg width="28" height="28" viewBox="0 0 24 24" ><path fill="#0866ff" d="M9.101 23.691v-7.98H6.627v-3.667h2.474v-1.58c0-4.085 1.848-5.978 5.858-5.978.401 0 .955.042 1.468.103a8.68 8.68 0 0 1 1.141.195v3.325a8.623 8.623 0 0 0-.653-.036 26.805 26.805 0 0 0-.733-.009c-.707 0-1.259.096-1.675.309a1.686 1.686 0 0 0-.679.622c-.258.42-.374.995-.374 1.752v1.297h3.919l-.386 2.103-.287 1.564h-3.246v8.245C19.396 23.238 24 18.179 24 12.044c0-6.627-5.373-12-12-12s-12 5.373-12 12c0 5.628 3.874 10.35 9.101 11.647Z"/></svg></div>
<div class="soc off" style="left:917px;top:26px"><svg width="28" height="28" viewBox="0 0 24 24" ><g transform="translate(1.2 0.6) scale(0.93)"><path fill="#25f4ee" transform="translate(-1 -1)" d="M12.525.02c1.31-.02 2.61-.01 3.91-.02.08 1.53.63 3.09 1.75 4.17 1.12 1.11 2.7 1.62 4.24 1.79v4.03c-1.44-.05-2.89-.35-4.2-.97-.57-.26-1.1-.59-1.62-.93-.01 2.92.01 5.84-.02 8.75-.08 1.4-.54 2.79-1.35 3.94-1.310 1.92-3.58 3.17-5.91 3.21-1.43.08-2.86-.31-4.08-1.03-2.02-1.19-3.44-3.37-3.65-5.71-.02-.5-.03-1-.01-1.49.18-1.9 1.12-3.72 2.58-4.96 1.66-1.44 3.98-2.13 6.15-1.72.02 1.480-.04 2.96-.04 4.44-.99-.32-2.15-.23-3.02.37-.63.41-1.11 1.04-1.36 1.75-.21.51-.15 1.07-.14 1.61.24 1.64 1.82 3.02 3.5 2.87 1.12-.01 2.19-.66 2.77-1.61.19-.33.4-.67.41-1.06.1-1.79.06-3.57.07-5.36.01-4.03-.01-8.05.02-12.07z"/><path fill="#fe2c55" transform="translate(1 1)" d="M12.525.02c1.31-.02 2.61-.01 3.91-.02.08 1.53.63 3.09 1.75 4.17 1.12 1.11 2.7 1.62 4.24 1.79v4.03c-1.44-.05-2.89-.35-4.2-.97-.57-.26-1.1-.59-1.62-.93-.01 2.92.01 5.84-.02 8.75-.08 1.4-.54 2.79-1.35 3.94-1.310 1.92-3.58 3.17-5.91 3.21-1.43.08-2.86-.31-4.08-1.03-2.02-1.19-3.44-3.37-3.65-5.71-.02-.5-.03-1-.01-1.49.18-1.9 1.12-3.72 2.58-4.96 1.66-1.44 3.98-2.13 6.15-1.72.02 1.480-.04 2.96-.04 4.44-.99-.32-2.15-.23-3.02.37-.63.41-1.11 1.04-1.36 1.75-.21.51-.15 1.07-.14 1.61.24 1.64 1.82 3.02 3.5 2.87 1.12-.01 2.19-.66 2.77-1.61.19-.33.4-.67.41-1.06.1-1.79.06-3.57.07-5.36.01-4.03-.01-8.05.02-12.07z"/><path fill="#000" d="M12.525.02c1.31-.02 2.61-.01 3.91-.02.08 1.53.63 3.09 1.75 4.17 1.12 1.11 2.7 1.62 4.24 1.79v4.03c-1.44-.05-2.89-.35-4.2-.97-.57-.26-1.1-.59-1.62-.93-.01 2.92.01 5.84-.02 8.75-.08 1.4-.54 2.79-1.35 3.94-1.310 1.92-3.58 3.17-5.91 3.21-1.43.08-2.86-.31-4.08-1.03-2.02-1.19-3.44-3.37-3.65-5.71-.02-.5-.03-1-.01-1.49.18-1.9 1.12-3.72 2.58-4.96 1.66-1.44 3.98-2.13 6.15-1.72.02 1.480-.04 2.96-.04 4.44-.99-.32-2.15-.23-3.02.37-.63.41-1.11 1.04-1.36 1.75-.21.51-.15 1.07-.14 1.61.24 1.64 1.82 3.02 3.5 2.87 1.12-.01 2.19-.66 2.77-1.61.19-.33.4-.67.41-1.06.1-1.79.06-3.57.07-5.36.01-4.03-.01-8.05.02-12.07z"/></g></svg></div>
<div class="soc off" style="left:965px;top:26px"><svg width="28" height="28" viewBox="0 0 24 24" ><path fill="#ff0000" d="M23.498 6.186a3.016 3.016 0 0 0-2.122-2.136C19.505 3.545 12 3.545 12 3.545s-7.505 0-9.377.505A3.017 3.017 0 0 0 .502 6.186C0 8.07 0 12 0 12s0 3.93.502 5.814a3.016 3.016 0 0 0 2.122 2.136c1.871.505 9.376.505 9.376.505s7.505 0 9.377-.505a3.015 3.015 0 0 0 2.122-2.136C24 15.93 24 12 24 12s0-3.93-.502-5.814z"/><path fill="#fff" d="M9.545 15.568V8.432L15.818 12l-6.273 3.568z"/></svg></div>
<div class="soc" style="left:1013px;top:26px"><svg width="28" height="28" viewBox="0 0 24 24" ><path fill="#000" transform="translate(1.2 1.2) scale(0.9)" d="M18.901 1.153h3.68l-8.04 9.19L24 22.846h-7.406l-5.8-7.584-6.638 7.584H.474l8.6-9.83L0 1.154h7.594l5.243 6.932ZM17.61 20.644h2.039L6.486 3.24H4.298Z"/></svg></div>
<div class="soc off" style="left:1061px;top:26px"><svg width="28" height="28" viewBox="0 0 24 24" ><path fill="#1185fe" transform="translate(0.5 0.75) scale(0.96)" d="M12 10.8c-1.087-2.114-4.046-6.053-6.798-7.995C2.566.944 1.561 1.266.902 1.565.139 1.908 0 3.08 0 3.768c0 .69.378 5.65.624 6.479.815 2.736 3.713 3.66 6.383 3.364.136-.02.275-.039.415-.056-.138.022-.276.04-.415.056-3.912.58-7.387 2.005-2.83 7.078 5.013 5.19 6.87-1.113 7.823-4.308.953 3.195 2.05 9.271 7.733 4.308 4.267-4.308 1.172-6.498-2.74-7.078a8.741 8.741 0 0 1-.415-.056c.14.017.279.036.415.056 2.67.297 5.568-.628 6.383-3.364.246-.828.624-5.79.624-6.478 0-.69-.139-1.861-.902-2.206-.659-.298-1.664-.62-4.3 1.24C16.046 4.748 13.087 8.687 12 10.8Z"/></svg></div>
<div class="soc off" style="left:1109px;top:26px"><svg width="28" height="28" viewBox="0 0 24 24" ><path fill="#000" d="M12.186 24h-.007c-3.581-.024-6.334-1.205-8.184-3.509C2.35 18.44 1.5 15.586 1.472 12.01v-.017c.03-3.579.879-6.43 2.525-8.482C5.845 1.205 8.6.024 12.18 0h.014c2.746.02 5.043.725 6.826 2.098 1.677 1.29 2.858 3.13 3.509 5.467l-2.04.569c-1.104-3.96-3.898-5.984-8.304-6.015-2.910.022-5.11.936-6.54 2.717C4.307 6.504 3.616 8.914 3.589 12c.027 3.086.718 5.496 2.057 7.164 1.43 1.783 3.631 2.698 6.54 2.717 2.623-.02 4.358-.631 5.8-2.045 1.647-1.613 1.618-3.593 1.090-4.798-.31-.71-.873-1.3-1.634-1.75-.192 1.352-.622 2.446-1.284 3.272-.886 1.102-2.14 1.704-3.73 1.790-1.202.065-2.361-.218-3.259-.801-1.063-.689-1.685-1.74-1.752-2.964-.065-1.190.408-2.285 1.33-3.082.88-.76 2.119-1.207 3.583-1.291a13.853 13.853 0 0 1 3.020.142c-.126-.742-.375-1.332-.75-1.757-.513-.586-1.308-.883-2.359-.89h-.029c-.844 0-1.992.232-2.721 1.32L7.734 7.847c.98-1.454 2.568-2.256 4.478-2.256h.044c3.194.02 5.097 1.975 5.287 5.388.108.046.216.094.321.142 1.49.7 2.58 1.761 3.154 3.070.797 1.820.871 4.790-1.548 7.158-1.85 1.81-4.094 2.628-7.277 2.65Zm1.003-11.69c-.242 0-.487.007-.739.021-1.836.103-2.98.946-2.916 2.143.067 1.256 1.452 1.839 2.784 1.767 1.224-.065 2.818-.543 3.086-3.710a10.5 10.5 0 0 0-2.215-.221z"/></svg></div>
<div class="soc" style="left:1157px;top:26px"><svg width="28" height="28" viewBox="0 0 24 24" ><rect x="0" y="0" width="24" height="24" rx="2" fill="#0a66c2"/><path fill="#fff" d="M20.447 20.452h-3.554v-5.569c0-1.328-.027-3.037-1.852-3.037-1.853 0-2.136 1.445-2.136 2.939v5.667H9.351V9h3.414v1.561h.046c.477-.9 1.637-1.85 3.37-1.85 3.601 0 4.267 2.370 4.267 5.455v6.286zM5.337 7.433c-1.144 0-2.063-.926-2.063-2.065 0-1.138.92-2.063 2.063-2.063 1.140 0 2.064.925 2.064 2.063 0 1.139-.925 2.065-2.064 2.065zm1.782 13.019H3.555V9h3.564v11.452z"/></svg></div>
<div class="soc off" style="left:1205px;top:26px"><svg width="28" height="28" viewBox="0 0 24 24" ><path fill="#ff6719" transform="translate(1.47 0.86) scale(0.93)" d="M22.539 8.242H1.46V5.406h21.08v2.836zM1.46 10.812V24L12 18.110 22.540 24V10.812H1.46zM22.540 0H1.46v2.836h21.080V0z"/></svg></div>
<div class="cell r" style="left:1257px;width:287.5px"><b class="d">5</b><b class="c">,</b><b class="d">9</b><svg class="o" viewBox="0 0 12.4 20.4"><path d="M5.35 0H7.65V20.4H5.35V3.2L1.45 5.6L0.45 3.7L5.35 0.4Z"/></svg><b class="d">0</b></div>
<div class="cell r" style="left:1569px;width:165px;color:#f45c17">+<svg class="o" viewBox="0 0 12.4 20.4"><path d="M5.35 0H7.65V20.4H5.35V3.2L1.45 5.6L0.45 3.7L5.35 0.4Z"/></svg><b class="d">9</b><b class="d">8</b></div>
<div class="badge" style="left:1925px;width:50px;background:#b3e0cf;border-color:#c6e8db;color:#212121">S</div>
<div class="cell r" style="left:1999px;width:112.5px"><b class="d">3</b><b class="p">.</b><b class="d">0</b><b class="q"><i>%</i></b></div>
<div class="cell r" style="left:2139px;width:161.5px"><b class="d">6</b><b class="d">8</b></div>
<div class="cell r" style="left:2325px;width:273.5px"><svg class="o" viewBox="0 0 12.4 20.4"><path d="M5.35 0H7.65V20.4H5.35V3.2L1.45 5.6L0.45 3.7L5.35 0.4Z"/></svg><b class="c">,</b><b class="d">5</b><b class="d">9</b><b class="d">0</b></div>
</div>
<div class="a" style="left:0;top:908px;width:2880px;height:80px">
<div class="av" style="overflow:hidden"><svg width="100%" height="100%" viewBox="0 0 28 28"><rect width="28" height="28" fill="#16110d"/><ellipse cx="14" cy="30" rx="14" ry="13" fill="#5d4c33"/><path d="M11 18 L14 28 L17 18 Z" fill="#d8cfa8"/><path d="M13 19 L14.5 28 L15.5 19 Z" fill="#8a7a3a"/><ellipse cx="14" cy="11" rx="5.2" ry="6" fill="#c9a48e"/><path d="M8.8 9 Q14 3 19.2 9 Q18 5.5 14 5 Q10 5.5 8.8 9Z" fill="#a89484"/><rect x="11" y="13.5" width="6" height="1.6" fill="#9c8a80"/></svg></div>
<div class="cell" style="left:173px"><span class="name">William Einstein</span></div>
<div class="chips">
<div style="position:absolute;left:24px;top:18px;display:flex;gap:20px">
<div class="chip" style="position:relative;top:0;min-width:250px;">The Last Android</div>
<div class="chip" style="position:relative;top:0;">Beyond</div>
</div></div>
<div class="soc off" style="left:821px;top:26px"><svg width="28" height="28" viewBox="0 0 24 24" ><rect x="1.6" y="1.6" width="20.8" height="20.8" rx="6" fill="none" stroke="url(#igg)" stroke-width="2.3"/><circle cx="12" cy="12" r="4.9" fill="none" stroke="url(#igg)" stroke-width="2.3"/><circle cx="18" cy="6" r="1.4" fill="url(#igg)"/><rect x="1.6" y="1.6" width="20.8" height="20.8" rx="6" fill="none" stroke="url(#igv)" stroke-width="2.3"/><circle cx="12" cy="12" r="4.9" fill="none" stroke="url(#igv)" stroke-width="2.3"/><circle cx="18" cy="6" r="1.4" fill="url(#igv)"/></svg></div>
<div class="soc off" style="left:869px;top:26px"><svg width="28" height="28" viewBox="0 0 24 24" ><path fill="#0866ff" d="M9.101 23.691v-7.98H6.627v-3.667h2.474v-1.58c0-4.085 1.848-5.978 5.858-5.978.401 0 .955.042 1.468.103a8.68 8.68 0 0 1 1.141.195v3.325a8.623 8.623 0 0 0-.653-.036 26.805 26.805 0 0 0-.733-.009c-.707 0-1.259.096-1.675.309a1.686 1.686 0 0 0-.679.622c-.258.42-.374.995-.374 1.752v1.297h3.919l-.386 2.103-.287 1.564h-3.246v8.245C19.396 23.238 24 18.179 24 12.044c0-6.627-5.373-12-12-12s-12 5.373-12 12c0 5.628 3.874 10.35 9.101 11.647Z"/></svg></div>
<div class="soc off" style="left:917px;top:26px"><svg width="28" height="28" viewBox="0 0 24 24" ><g transform="translate(1.2 0.6) scale(0.93)"><path fill="#25f4ee" transform="translate(-1 -1)" d="M12.525.02c1.31-.02 2.61-.01 3.91-.02.08 1.53.63 3.09 1.75 4.17 1.12 1.11 2.7 1.62 4.24 1.79v4.03c-1.44-.05-2.89-.35-4.2-.97-.57-.26-1.1-.59-1.62-.93-.01 2.92.01 5.84-.02 8.75-.08 1.4-.54 2.79-1.35 3.94-1.310 1.92-3.58 3.17-5.91 3.21-1.43.08-2.86-.31-4.08-1.03-2.02-1.19-3.44-3.37-3.65-5.71-.02-.5-.03-1-.01-1.49.18-1.9 1.12-3.72 2.58-4.96 1.66-1.44 3.98-2.13 6.15-1.72.02 1.480-.04 2.96-.04 4.44-.99-.32-2.15-.23-3.02.37-.63.41-1.11 1.04-1.36 1.75-.21.51-.15 1.07-.14 1.61.24 1.64 1.82 3.02 3.5 2.87 1.12-.01 2.19-.66 2.77-1.61.19-.33.4-.67.41-1.06.1-1.79.06-3.57.07-5.36.01-4.03-.01-8.05.02-12.07z"/><path fill="#fe2c55" transform="translate(1 1)" d="M12.525.02c1.31-.02 2.61-.01 3.91-.02.08 1.53.63 3.09 1.75 4.17 1.12 1.11 2.7 1.62 4.24 1.79v4.03c-1.44-.05-2.89-.35-4.2-.97-.57-.26-1.1-.59-1.62-.93-.01 2.92.01 5.84-.02 8.75-.08 1.4-.54 2.79-1.35 3.94-1.310 1.92-3.58 3.17-5.91 3.21-1.43.08-2.86-.31-4.08-1.03-2.02-1.19-3.44-3.37-3.65-5.71-.02-.5-.03-1-.01-1.49.18-1.9 1.12-3.72 2.58-4.96 1.66-1.44 3.98-2.13 6.15-1.72.02 1.480-.04 2.96-.04 4.44-.99-.32-2.15-.23-3.02.37-.63.41-1.11 1.04-1.36 1.75-.21.51-.15 1.07-.14 1.61.24 1.64 1.82 3.02 3.5 2.87 1.12-.01 2.19-.66 2.77-1.61.19-.33.4-.67.41-1.06.1-1.79.06-3.57.07-5.36.01-4.03-.01-8.05.02-12.07z"/><path fill="#000" d="M12.525.02c1.31-.02 2.61-.01 3.91-.02.08 1.53.63 3.09 1.75 4.17 1.12 1.11 2.7 1.62 4.24 1.79v4.03c-1.44-.05-2.89-.35-4.2-.97-.57-.26-1.1-.59-1.62-.93-.01 2.92.01 5.84-.02 8.75-.08 1.4-.54 2.79-1.35 3.94-1.310 1.92-3.58 3.17-5.91 3.21-1.43.08-2.86-.31-4.08-1.03-2.02-1.19-3.44-3.37-3.65-5.71-.02-.5-.03-1-.01-1.49.18-1.9 1.12-3.72 2.58-4.96 1.66-1.44 3.98-2.13 6.15-1.72.02 1.480-.04 2.96-.04 4.44-.99-.32-2.15-.23-3.02.37-.63.41-1.11 1.04-1.36 1.75-.21.51-.15 1.07-.14 1.61.24 1.64 1.82 3.02 3.5 2.87 1.12-.01 2.19-.66 2.77-1.61.19-.33.4-.67.41-1.06.1-1.79.06-3.57.07-5.36.01-4.03-.01-8.05.02-12.07z"/></g></svg></div>
<div class="soc off" style="left:965px;top:26px"><svg width="28" height="28" viewBox="0 0 24 24" ><path fill="#ff0000" d="M23.498 6.186a3.016 3.016 0 0 0-2.122-2.136C19.505 3.545 12 3.545 12 3.545s-7.505 0-9.377.505A3.017 3.017 0 0 0 .502 6.186C0 8.07 0 12 0 12s0 3.93.502 5.814a3.016 3.016 0 0 0 2.122 2.136c1.871.505 9.376.505 9.376.505s7.505 0 9.377-.505a3.015 3.015 0 0 0 2.122-2.136C24 15.93 24 12 24 12s0-3.93-.502-5.814z"/><path fill="#fff" d="M9.545 15.568V8.432L15.818 12l-6.273 3.568z"/></svg></div>
<div class="soc" style="left:1013px;top:26px"><svg width="28" height="28" viewBox="0 0 24 24" ><path fill="#000" transform="translate(1.2 1.2) scale(0.9)" d="M18.901 1.153h3.68l-8.04 9.19L24 22.846h-7.406l-5.8-7.584-6.638 7.584H.474l8.6-9.83L0 1.154h7.594l5.243 6.932ZM17.61 20.644h2.039L6.486 3.24H4.298Z"/></svg></div>
<div class="soc off" style="left:1061px;top:26px"><svg width="28" height="28" viewBox="0 0 24 24" ><path fill="#1185fe" transform="translate(0.5 0.75) scale(0.96)" d="M12 10.8c-1.087-2.114-4.046-6.053-6.798-7.995C2.566.944 1.561 1.266.902 1.565.139 1.908 0 3.08 0 3.768c0 .69.378 5.65.624 6.479.815 2.736 3.713 3.66 6.383 3.364.136-.02.275-.039.415-.056-.138.022-.276.04-.415.056-3.912.58-7.387 2.005-2.83 7.078 5.013 5.19 6.87-1.113 7.823-4.308.953 3.195 2.05 9.271 7.733 4.308 4.267-4.308 1.172-6.498-2.74-7.078a8.741 8.741 0 0 1-.415-.056c.14.017.279.036.415.056 2.67.297 5.568-.628 6.383-3.364.246-.828.624-5.79.624-6.478 0-.69-.139-1.861-.902-2.206-.659-.298-1.664-.62-4.3 1.24C16.046 4.748 13.087 8.687 12 10.8Z"/></svg></div>
<div class="soc off" style="left:1109px;top:26px"><svg width="28" height="28" viewBox="0 0 24 24" ><path fill="#000" d="M12.186 24h-.007c-3.581-.024-6.334-1.205-8.184-3.509C2.35 18.44 1.5 15.586 1.472 12.01v-.017c.03-3.579.879-6.43 2.525-8.482C5.845 1.205 8.6.024 12.18 0h.014c2.746.02 5.043.725 6.826 2.098 1.677 1.29 2.858 3.13 3.509 5.467l-2.04.569c-1.104-3.96-3.898-5.984-8.304-6.015-2.910.022-5.11.936-6.54 2.717C4.307 6.504 3.616 8.914 3.589 12c.027 3.086.718 5.496 2.057 7.164 1.43 1.783 3.631 2.698 6.54 2.717 2.623-.02 4.358-.631 5.8-2.045 1.647-1.613 1.618-3.593 1.090-4.798-.31-.71-.873-1.3-1.634-1.75-.192 1.352-.622 2.446-1.284 3.272-.886 1.102-2.14 1.704-3.73 1.790-1.202.065-2.361-.218-3.259-.801-1.063-.689-1.685-1.74-1.752-2.964-.065-1.190.408-2.285 1.33-3.082.88-.76 2.119-1.207 3.583-1.291a13.853 13.853 0 0 1 3.020.142c-.126-.742-.375-1.332-.75-1.757-.513-.586-1.308-.883-2.359-.89h-.029c-.844 0-1.992.232-2.721 1.32L7.734 7.847c.98-1.454 2.568-2.256 4.478-2.256h.044c3.194.02 5.097 1.975 5.287 5.388.108.046.216.094.321.142 1.49.7 2.58 1.761 3.154 3.070.797 1.820.871 4.790-1.548 7.158-1.85 1.81-4.094 2.628-7.277 2.65Zm1.003-11.69c-.242 0-.487.007-.739.021-1.836.103-2.98.946-2.916 2.143.067 1.256 1.452 1.839 2.784 1.767 1.224-.065 2.818-.543 3.086-3.710a10.5 10.5 0 0 0-2.215-.221z"/></svg></div>
<div class="soc" style="left:1157px;top:26px"><svg width="28" height="28" viewBox="0 0 24 24" ><rect x="0" y="0" width="24" height="24" rx="2" fill="#0a66c2"/><path fill="#fff" d="M20.447 20.452h-3.554v-5.569c0-1.328-.027-3.037-1.852-3.037-1.853 0-2.136 1.445-2.136 2.939v5.667H9.351V9h3.414v1.561h.046c.477-.9 1.637-1.85 3.37-1.85 3.601 0 4.267 2.370 4.267 5.455v6.286zM5.337 7.433c-1.144 0-2.063-.926-2.063-2.065 0-1.138.92-2.063 2.063-2.063 1.140 0 2.064.925 2.064 2.063 0 1.139-.925 2.065-2.064 2.065zm1.782 13.019H3.555V9h3.564v11.452z"/></svg></div>
<div class="soc off" style="left:1205px;top:26px"><svg width="28" height="28" viewBox="0 0 24 24" ><path fill="#ff6719" transform="translate(1.47 0.86) scale(0.93)" d="M22.539 8.242H1.46V5.406h21.08v2.836zM1.46 10.812V24L12 18.110 22.540 24V10.812H1.46zM22.540 0H1.46v2.836h21.080V0z"/></svg></div>
<div class="cell r" style="left:1257px;width:287.5px"><b class="d">4</b><b class="d">2</b><b class="c">,</b><b class="d">3</b><b class="d">8</b><b class="d">5</b></div>
<div class="cell r" style="left:1569px;width:165px;color:#f45c17"><b class="h"></b><b class="d">7</b><b class="d">6</b></div>
<div class="badge" style="left:1917px;width:58px;background:#86ce8f;border-color:#a6dbab;color:#212121">M</div>
<div class="cell r" style="left:1999px;width:112.5px"><b class="d">2</b><b class="p">.</b><b class="d">6</b><b class="q"><i>%</i></b></div>
<div class="cell r" style="left:2139px;width:161.5px"><b class="d">3</b><b class="d">8</b><b class="c">,</b><b class="d">0</b><b class="d">0</b><svg class="o" viewBox="0 0 12.4 20.4"><path d="M5.35 0H7.65V20.4H5.35V3.2L1.45 5.6L0.45 3.7L5.35 0.4Z"/></svg></div>
<div class="cell r" style="left:2325px;width:273.5px"><b class="h"></b></div>
</div>
<div class="a" style="left:0;top:988px;width:2880px;height:80px">
<div class="av" style="left:125px;top:25px;width:30px;height:30px;overflow:hidden"><svg width="100%" height="100%" viewBox="0 0 28 28"><rect width="28" height="28" fill="#b58fab"/><ellipse cx="14" cy="13" rx="7.5" ry="9" fill="#b88a62"/><ellipse cx="14" cy="31" rx="13" ry="12" fill="#c9ad9f"/><path d="M11.5 20 L14 28 L16.5 20Z" fill="#f2ece8"/><ellipse cx="14" cy="12.5" rx="4.6" ry="5.6" fill="#e6bba4"/></svg></div>
<div class="cell" style="left:175px"><span class="name">Barbara Ann Kiper</span></div>
<div class="chips">
<div style="position:absolute;left:24px;top:18px;display:flex;gap:20px">
<div class="chip" style="position:relative;top:0;">My Secret Billionaire Bride</div>
</div></div>
<div class="soc off" style="left:821px;top:26px"><svg width="28" height="28" viewBox="0 0 24 24" ><rect x="1.6" y="1.6" width="20.8" height="20.8" rx="6" fill="none" stroke="url(#igg)" stroke-width="2.3"/><circle cx="12" cy="12" r="4.9" fill="none" stroke="url(#igg)" stroke-width="2.3"/><circle cx="18" cy="6" r="1.4" fill="url(#igg)"/><rect x="1.6" y="1.6" width="20.8" height="20.8" rx="6" fill="none" stroke="url(#igv)" stroke-width="2.3"/><circle cx="12" cy="12" r="4.9" fill="none" stroke="url(#igv)" stroke-width="2.3"/><circle cx="18" cy="6" r="1.4" fill="url(#igv)"/></svg></div>
<div class="soc off" style="left:869px;top:26px"><svg width="28" height="28" viewBox="0 0 24 24" ><path fill="#0866ff" d="M9.101 23.691v-7.98H6.627v-3.667h2.474v-1.58c0-4.085 1.848-5.978 5.858-5.978.401 0 .955.042 1.468.103a8.68 8.68 0 0 1 1.141.195v3.325a8.623 8.623 0 0 0-.653-.036 26.805 26.805 0 0 0-.733-.009c-.707 0-1.259.096-1.675.309a1.686 1.686 0 0 0-.679.622c-.258.42-.374.995-.374 1.752v1.297h3.919l-.386 2.103-.287 1.564h-3.246v8.245C19.396 23.238 24 18.179 24 12.044c0-6.627-5.373-12-12-12s-12 5.373-12 12c0 5.628 3.874 10.35 9.101 11.647Z"/></svg></div>
<div class="soc off" style="left:917px;top:26px"><svg width="28" height="28" viewBox="0 0 24 24" ><g transform="translate(1.2 0.6) scale(0.93)"><path fill="#25f4ee" transform="translate(-1 -1)" d="M12.525.02c1.31-.02 2.61-.01 3.91-.02.08 1.53.63 3.09 1.75 4.17 1.12 1.11 2.7 1.62 4.24 1.79v4.03c-1.44-.05-2.89-.35-4.2-.97-.57-.26-1.1-.59-1.62-.93-.01 2.92.01 5.84-.02 8.75-.08 1.4-.54 2.79-1.35 3.94-1.310 1.92-3.58 3.17-5.91 3.21-1.43.08-2.86-.31-4.08-1.03-2.02-1.19-3.44-3.37-3.65-5.71-.02-.5-.03-1-.01-1.49.18-1.9 1.12-3.72 2.58-4.96 1.66-1.44 3.98-2.13 6.15-1.72.02 1.480-.04 2.96-.04 4.44-.99-.32-2.15-.23-3.02.37-.63.41-1.11 1.04-1.36 1.75-.21.51-.15 1.07-.14 1.61.24 1.64 1.82 3.02 3.5 2.87 1.12-.01 2.19-.66 2.77-1.61.19-.33.4-.67.41-1.06.1-1.79.06-3.57.07-5.36.01-4.03-.01-8.05.02-12.07z"/><path fill="#fe2c55" transform="translate(1 1)" d="M12.525.02c1.31-.02 2.61-.01 3.91-.02.08 1.53.63 3.09 1.75 4.17 1.12 1.11 2.7 1.62 4.24 1.79v4.03c-1.44-.05-2.89-.35-4.2-.97-.57-.26-1.1-.59-1.62-.93-.01 2.92.01 5.84-.02 8.75-.08 1.4-.54 2.79-1.35 3.94-1.310 1.92-3.58 3.17-5.91 3.21-1.43.08-2.86-.31-4.08-1.03-2.02-1.19-3.44-3.37-3.65-5.71-.02-.5-.03-1-.01-1.49.18-1.9 1.12-3.72 2.58-4.96 1.66-1.44 3.98-2.13 6.15-1.72.02 1.480-.04 2.96-.04 4.44-.99-.32-2.15-.23-3.02.37-.63.41-1.11 1.04-1.36 1.75-.21.51-.15 1.07-.14 1.61.24 1.64 1.82 3.02 3.5 2.87 1.12-.01 2.19-.66 2.77-1.61.19-.33.4-.67.41-1.06.1-1.79.06-3.57.07-5.36.01-4.03-.01-8.05.02-12.07z"/><path fill="#000" d="M12.525.02c1.31-.02 2.61-.01 3.91-.02.08 1.53.63 3.09 1.75 4.17 1.12 1.11 2.7 1.62 4.24 1.79v4.03c-1.44-.05-2.89-.35-4.2-.97-.57-.26-1.1-.59-1.62-.93-.01 2.92.01 5.84-.02 8.75-.08 1.4-.54 2.79-1.35 3.94-1.310 1.92-3.58 3.17-5.91 3.21-1.43.08-2.86-.31-4.08-1.03-2.02-1.19-3.44-3.37-3.65-5.71-.02-.5-.03-1-.01-1.49.18-1.9 1.12-3.72 2.58-4.96 1.66-1.44 3.98-2.13 6.15-1.72.02 1.480-.04 2.96-.04 4.44-.99-.32-2.15-.23-3.02.37-.63.41-1.11 1.04-1.36 1.75-.21.51-.15 1.07-.14 1.61.24 1.64 1.82 3.02 3.5 2.87 1.12-.01 2.19-.66 2.77-1.61.19-.33.4-.67.41-1.06.1-1.79.06-3.57.07-5.36.01-4.03-.01-8.05.02-12.07z"/></g></svg></div>
<div class="soc off" style="left:965px;top:26px"><svg width="28" height="28" viewBox="0 0 24 24" ><path fill="#ff0000" d="M23.498 6.186a3.016 3.016 0 0 0-2.122-2.136C19.505 3.545 12 3.545 12 3.545s-7.505 0-9.377.505A3.017 3.017 0 0 0 .502 6.186C0 8.07 0 12 0 12s0 3.93.502 5.814a3.016 3.016 0 0 0 2.122 2.136c1.871.505 9.376.505 9.376.505s7.505 0 9.377-.505a3.015 3.015 0 0 0 2.122-2.136C24 15.93 24 12 24 12s0-3.93-.502-5.814z"/><path fill="#fff" d="M9.545 15.568V8.432L15.818 12l-6.273 3.568z"/></svg></div>
<div class="soc off" style="left:1013px;top:26px"><svg width="28" height="28" viewBox="0 0 24 24" ><path fill="#000" transform="translate(1.2 1.2) scale(0.9)" d="M18.901 1.153h3.68l-8.04 9.19L24 22.846h-7.406l-5.8-7.584-6.638 7.584H.474l8.6-9.83L0 1.154h7.594l5.243 6.932ZM17.61 20.644h2.039L6.486 3.24H4.298Z"/></svg></div>
<div class="soc off" style="left:1061px;top:26px"><svg width="28" height="28" viewBox="0 0 24 24" ><path fill="#1185fe" transform="translate(0.5 0.75) scale(0.96)" d="M12 10.8c-1.087-2.114-4.046-6.053-6.798-7.995C2.566.944 1.561 1.266.902 1.565.139 1.908 0 3.08 0 3.768c0 .69.378 5.65.624 6.479.815 2.736 3.713 3.66 6.383 3.364.136-.02.275-.039.415-.056-.138.022-.276.04-.415.056-3.912.58-7.387 2.005-2.83 7.078 5.013 5.19 6.87-1.113 7.823-4.308.953 3.195 2.05 9.271 7.733 4.308 4.267-4.308 1.172-6.498-2.74-7.078a8.741 8.741 0 0 1-.415-.056c.14.017.279.036.415.056 2.67.297 5.568-.628 6.383-3.364.246-.828.624-5.79.624-6.478 0-.69-.139-1.861-.902-2.206-.659-.298-1.664-.62-4.3 1.24C16.046 4.748 13.087 8.687 12 10.8Z"/></svg></div>
<div class="soc off" style="left:1109px;top:26px"><svg width="28" height="28" viewBox="0 0 24 24" ><path fill="#000" d="M12.186 24h-.007c-3.581-.024-6.334-1.205-8.184-3.509C2.35 18.44 1.5 15.586 1.472 12.01v-.017c.03-3.579.879-6.43 2.525-8.482C5.845 1.205 8.6.024 12.18 0h.014c2.746.02 5.043.725 6.826 2.098 1.677 1.29 2.858 3.13 3.509 5.467l-2.04.569c-1.104-3.96-3.898-5.984-8.304-6.015-2.910.022-5.11.936-6.54 2.717C4.307 6.504 3.616 8.914 3.589 12c.027 3.086.718 5.496 2.057 7.164 1.43 1.783 3.631 2.698 6.54 2.717 2.623-.02 4.358-.631 5.8-2.045 1.647-1.613 1.618-3.593 1.090-4.798-.31-.71-.873-1.3-1.634-1.75-.192 1.352-.622 2.446-1.284 3.272-.886 1.102-2.14 1.704-3.73 1.790-1.202.065-2.361-.218-3.259-.801-1.063-.689-1.685-1.74-1.752-2.964-.065-1.190.408-2.285 1.33-3.082.88-.76 2.119-1.207 3.583-1.291a13.853 13.853 0 0 1 3.020.142c-.126-.742-.375-1.332-.75-1.757-.513-.586-1.308-.883-2.359-.89h-.029c-.844 0-1.992.232-2.721 1.32L7.734 7.847c.98-1.454 2.568-2.256 4.478-2.256h.044c3.194.02 5.097 1.975 5.287 5.388.108.046.216.094.321.142 1.49.7 2.58 1.761 3.154 3.070.797 1.820.871 4.790-1.548 7.158-1.85 1.81-4.094 2.628-7.277 2.65Zm1.003-11.69c-.242 0-.487.007-.739.021-1.836.103-2.98.946-2.916 2.143.067 1.256 1.452 1.839 2.784 1.767 1.224-.065 2.818-.543 3.086-3.710a10.5 10.5 0 0 0-2.215-.221z"/></svg></div>
<div class="soc" style="left:1157px;top:26px"><svg width="28" height="28" viewBox="0 0 24 24" ><rect x="0" y="0" width="24" height="24" rx="2" fill="#0a66c2"/><path fill="#fff" d="M20.447 20.452h-3.554v-5.569c0-1.328-.027-3.037-1.852-3.037-1.853 0-2.136 1.445-2.136 2.939v5.667H9.351V9h3.414v1.561h.046c.477-.9 1.637-1.85 3.37-1.85 3.601 0 4.267 2.370 4.267 5.455v6.286zM5.337 7.433c-1.144 0-2.063-.926-2.063-2.065 0-1.138.92-2.063 2.063-2.063 1.140 0 2.064.925 2.064 2.063 0 1.139-.925 2.065-2.064 2.065zm1.782 13.019H3.555V9h3.564v11.452z"/></svg></div>
<div class="soc" style="left:1205px;top:26px"><svg width="28" height="28" viewBox="0 0 24 24" ><path fill="#ff6719" transform="translate(1.47 0.86) scale(0.93)" d="M22.539 8.242H1.46V5.406h21.08v2.836zM1.46 10.812V24L12 18.110 22.540 24V10.812H1.46zM22.540 0H1.46v2.836h21.080V0z"/></svg></div>
<div class="cell r" style="left:1257px;width:287.5px"><svg class="o" viewBox="0 0 12.4 20.4"><path d="M5.35 0H7.65V20.4H5.35V3.2L1.45 5.6L0.45 3.7L5.35 0.4Z"/></svg><b class="d">9</b><b class="c">,</b><b class="d">8</b><b class="d">4</b><b class="d">2</b></div>
<div class="cell r" style="left:1569px;width:165px;color:#3bb45a">+<svg class="o" viewBox="0 0 12.4 20.4"><path d="M5.35 0H7.65V20.4H5.35V3.2L1.45 5.6L0.45 3.7L5.35 0.4Z"/></svg><b class="d">5</b><b class="d">4</b></div>
<div class="badge" style="left:1917px;width:58px;background:#86ce8f;border-color:#a6dbab;color:#212121">M</div>
<div class="cell r" style="left:1999px;width:112.5px"><b class="d">3</b><b class="p">.</b><b class="d">4</b><b class="q"><i>%</i></b></div>
<div class="cell r" style="left:2139px;width:161.5px"><b class="h"></b></div>
<div class="cell r" style="left:2325px;width:273.5px"><b class="h"></b></div>
</div>
<div class="a" style="left:0;top:1068px;width:2880px;height:80px">
<div class="a" style="left:127px;top:28px"><svg width="24" height="24" viewBox="0 0 24 24" ><circle cx="12" cy="8.05" r="7" fill="none" stroke="#8f8f8f" stroke-width="1.6"/><path d="M1.3 21.9 C4 17.8 8 16.3 12 16.3 C16 16.3 20 17.8 22.7 21.9" fill="none" stroke="#8f8f8f" stroke-width="1.6" stroke-linecap="round"/></svg></div>
<div class="cell" style="left:173px"><span class="name">Chloe Anders</span></div>
<div class="chips">
<div style="position:absolute;left:24px;top:18px;display:flex;gap:20px">
<div class="chip" style="position:relative;top:0;min-width:216px;">Xmas Classics</div>
</div></div>
<div class="soc" style="left:821px;top:26px"><svg width="28" height="28" viewBox="0 0 24 24" ><rect x="1.6" y="1.6" width="20.8" height="20.8" rx="6" fill="none" stroke="url(#igg)" stroke-width="2.3"/><circle cx="12" cy="12" r="4.9" fill="none" stroke="url(#igg)" stroke-width="2.3"/><circle cx="18" cy="6" r="1.4" fill="url(#igg)"/><rect x="1.6" y="1.6" width="20.8" height="20.8" rx="6" fill="none" stroke="url(#igv)" stroke-width="2.3"/><circle cx="12" cy="12" r="4.9" fill="none" stroke="url(#igv)" stroke-width="2.3"/><circle cx="18" cy="6" r="1.4" fill="url(#igv)"/></svg></div>
<div class="soc off" style="left:869px;top:26px"><svg width="28" height="28" viewBox="0 0 24 24" ><path fill="#0866ff" d="M9.101 23.691v-7.98H6.627v-3.667h2.474v-1.58c0-4.085 1.848-5.978 5.858-5.978.401 0 .955.042 1.468.103a8.68 8.68 0 0 1 1.141.195v3.325a8.623 8.623 0 0 0-.653-.036 26.805 26.805 0 0 0-.733-.009c-.707 0-1.259.096-1.675.309a1.686 1.686 0 0 0-.679.622c-.258.42-.374.995-.374 1.752v1.297h3.919l-.386 2.103-.287 1.564h-3.246v8.245C19.396 23.238 24 18.179 24 12.044c0-6.627-5.373-12-12-12s-12 5.373-12 12c0 5.628 3.874 10.35 9.101 11.647Z"/></svg></div>
<div class="soc" style="left:917px;top:26px"><svg width="28" height="28" viewBox="0 0 24 24" ><g transform="translate(1.2 0.6) scale(0.93)"><path fill="#25f4ee" transform="translate(-1 -1)" d="M12.525.02c1.31-.02 2.61-.01 3.91-.02.08 1.53.63 3.09 1.75 4.17 1.12 1.11 2.7 1.62 4.24 1.79v4.03c-1.44-.05-2.89-.35-4.2-.97-.57-.26-1.1-.59-1.62-.93-.01 2.92.01 5.84-.02 8.75-.08 1.4-.54 2.79-1.35 3.94-1.310 1.92-3.58 3.17-5.91 3.21-1.43.08-2.86-.31-4.08-1.03-2.02-1.19-3.44-3.37-3.65-5.71-.02-.5-.03-1-.01-1.49.18-1.9 1.12-3.72 2.58-4.96 1.66-1.44 3.98-2.13 6.15-1.72.02 1.480-.04 2.96-.04 4.44-.99-.32-2.15-.23-3.02.37-.63.41-1.11 1.04-1.36 1.75-.21.51-.15 1.07-.14 1.61.24 1.64 1.82 3.02 3.5 2.87 1.12-.01 2.19-.66 2.77-1.61.19-.33.4-.67.41-1.06.1-1.79.06-3.57.07-5.36.01-4.03-.01-8.05.02-12.07z"/><path fill="#fe2c55" transform="translate(1 1)" d="M12.525.02c1.31-.02 2.61-.01 3.91-.02.08 1.53.63 3.09 1.75 4.17 1.12 1.11 2.7 1.62 4.24 1.79v4.03c-1.44-.05-2.89-.35-4.2-.97-.57-.26-1.1-.59-1.62-.93-.01 2.92.01 5.84-.02 8.75-.08 1.4-.54 2.79-1.35 3.94-1.310 1.92-3.58 3.17-5.91 3.21-1.43.08-2.86-.31-4.08-1.03-2.02-1.19-3.44-3.37-3.65-5.71-.02-.5-.03-1-.01-1.49.18-1.9 1.12-3.72 2.58-4.96 1.66-1.44 3.98-2.13 6.15-1.72.02 1.480-.04 2.96-.04 4.44-.99-.32-2.15-.23-3.02.37-.63.41-1.11 1.04-1.36 1.75-.21.51-.15 1.07-.14 1.61.24 1.64 1.82 3.02 3.5 2.87 1.12-.01 2.19-.66 2.77-1.61.19-.33.4-.67.41-1.06.1-1.79.06-3.57.07-5.36.01-4.03-.01-8.05.02-12.07z"/><path fill="#000" d="M12.525.02c1.31-.02 2.61-.01 3.91-.02.08 1.53.63 3.09 1.75 4.17 1.12 1.11 2.7 1.62 4.24 1.79v4.03c-1.44-.05-2.89-.35-4.2-.97-.57-.26-1.1-.59-1.62-.93-.01 2.92.01 5.84-.02 8.75-.08 1.4-.54 2.79-1.35 3.94-1.310 1.92-3.58 3.17-5.91 3.21-1.43.08-2.86-.31-4.08-1.03-2.02-1.19-3.44-3.37-3.65-5.71-.02-.5-.03-1-.01-1.49.18-1.9 1.12-3.72 2.58-4.96 1.66-1.44 3.98-2.13 6.15-1.72.02 1.480-.04 2.96-.04 4.44-.99-.32-2.15-.23-3.02.37-.63.41-1.11 1.04-1.36 1.75-.21.51-.15 1.07-.14 1.61.24 1.64 1.82 3.02 3.5 2.87 1.12-.01 2.19-.66 2.77-1.61.19-.33.4-.67.41-1.06.1-1.79.06-3.57.07-5.36.01-4.03-.01-8.05.02-12.07z"/></g></svg></div>
<div class="soc off" style="left:965px;top:26px"><svg width="28" height="28" viewBox="0 0 24 24" ><path fill="#ff0000" d="M23.498 6.186a3.016 3.016 0 0 0-2.122-2.136C19.505 3.545 12 3.545 12 3.545s-7.505 0-9.377.505A3.017 3.017 0 0 0 .502 6.186C0 8.07 0 12 0 12s0 3.93.502 5.814a3.016 3.016 0 0 0 2.122 2.136c1.871.505 9.376.505 9.376.505s7.505 0 9.377-.505a3.015 3.015 0 0 0 2.122-2.136C24 15.93 24 12 24 12s0-3.93-.502-5.814z"/><path fill="#fff" d="M9.545 15.568V8.432L15.818 12l-6.273 3.568z"/></svg></div>
<div class="soc off" style="left:1013px;top:26px"><svg width="28" height="28" viewBox="0 0 24 24" ><path fill="#000" transform="translate(1.2 1.2) scale(0.9)" d="M18.901 1.153h3.68l-8.04 9.19L24 22.846h-7.406l-5.8-7.584-6.638 7.584H.474l8.6-9.83L0 1.154h7.594l5.243 6.932ZM17.61 20.644h2.039L6.486 3.24H4.298Z"/></svg></div>
<div class="soc off" style="left:1061px;top:26px"><svg width="28" height="28" viewBox="0 0 24 24" ><path fill="#1185fe" transform="translate(0.5 0.75) scale(0.96)" d="M12 10.8c-1.087-2.114-4.046-6.053-6.798-7.995C2.566.944 1.561 1.266.902 1.565.139 1.908 0 3.08 0 3.768c0 .69.378 5.65.624 6.479.815 2.736 3.713 3.66 6.383 3.364.136-.02.275-.039.415-.056-.138.022-.276.04-.415.056-3.912.58-7.387 2.005-2.83 7.078 5.013 5.19 6.87-1.113 7.823-4.308.953 3.195 2.05 9.271 7.733 4.308 4.267-4.308 1.172-6.498-2.74-7.078a8.741 8.741 0 0 1-.415-.056c.14.017.279.036.415.056 2.67.297 5.568-.628 6.383-3.364.246-.828.624-5.79.624-6.478 0-.69-.139-1.861-.902-2.206-.659-.298-1.664-.62-4.3 1.24C16.046 4.748 13.087 8.687 12 10.8Z"/></svg></div>
<div class="soc off" style="left:1109px;top:26px"><svg width="28" height="28" viewBox="0 0 24 24" ><path fill="#000" d="M12.186 24h-.007c-3.581-.024-6.334-1.205-8.184-3.509C2.35 18.44 1.5 15.586 1.472 12.01v-.017c.03-3.579.879-6.43 2.525-8.482C5.845 1.205 8.6.024 12.18 0h.014c2.746.02 5.043.725 6.826 2.098 1.677 1.29 2.858 3.13 3.509 5.467l-2.04.569c-1.104-3.96-3.898-5.984-8.304-6.015-2.910.022-5.11.936-6.54 2.717C4.307 6.504 3.616 8.914 3.589 12c.027 3.086.718 5.496 2.057 7.164 1.43 1.783 3.631 2.698 6.54 2.717 2.623-.02 4.358-.631 5.8-2.045 1.647-1.613 1.618-3.593 1.090-4.798-.31-.71-.873-1.3-1.634-1.75-.192 1.352-.622 2.446-1.284 3.272-.886 1.102-2.14 1.704-3.73 1.790-1.202.065-2.361-.218-3.259-.801-1.063-.689-1.685-1.74-1.752-2.964-.065-1.190.408-2.285 1.33-3.082.88-.76 2.119-1.207 3.583-1.291a13.853 13.853 0 0 1 3.020.142c-.126-.742-.375-1.332-.75-1.757-.513-.586-1.308-.883-2.359-.89h-.029c-.844 0-1.992.232-2.721 1.32L7.734 7.847c.98-1.454 2.568-2.256 4.478-2.256h.044c3.194.02 5.097 1.975 5.287 5.388.108.046.216.094.321.142 1.49.7 2.58 1.761 3.154 3.070.797 1.820.871 4.790-1.548 7.158-1.85 1.81-4.094 2.628-7.277 2.65Zm1.003-11.69c-.242 0-.487.007-.739.021-1.836.103-2.98.946-2.916 2.143.067 1.256 1.452 1.839 2.784 1.767 1.224-.065 2.818-.543 3.086-3.710a10.5 10.5 0 0 0-2.215-.221z"/></svg></div>
<div class="soc off" style="left:1157px;top:26px"><svg width="28" height="28" viewBox="0 0 24 24" ><rect x="0" y="0" width="24" height="24" rx="2" fill="#0a66c2"/><path fill="#fff" d="M20.447 20.452h-3.554v-5.569c0-1.328-.027-3.037-1.852-3.037-1.853 0-2.136 1.445-2.136 2.939v5.667H9.351V9h3.414v1.561h.046c.477-.9 1.637-1.85 3.37-1.85 3.601 0 4.267 2.370 4.267 5.455v6.286zM5.337 7.433c-1.144 0-2.063-.926-2.063-2.065 0-1.138.92-2.063 2.063-2.063 1.140 0 2.064.925 2.064 2.063 0 1.139-.925 2.065-2.064 2.065zm1.782 13.019H3.555V9h3.564v11.452z"/></svg></div>
<div class="soc off" style="left:1205px;top:26px"><svg width="28" height="28" viewBox="0 0 24 24" ><path fill="#ff6719" transform="translate(1.47 0.86) scale(0.93)" d="M22.539 8.242H1.46V5.406h21.08v2.836zM1.46 10.812V24L12 18.110 22.540 24V10.812H1.46zM22.540 0H1.46v2.836h21.080V0z"/></svg></div>
<div class="cell r" style="left:1257px;width:287.5px"><b class="d">7</b><b class="c">,</b><b class="d">5</b><b class="d">9</b><svg class="o" viewBox="0 0 12.4 20.4"><path d="M5.35 0H7.65V20.4H5.35V3.2L1.45 5.6L0.45 3.7L5.35 0.4Z"/></svg></div>
<div class="cell r" style="left:1569px;width:165px;color:#3bb45a">+<b class="d">3</b><b class="d">8</b><b class="d">9</b></div>
<div class="badge" style="left:1917px;width:58px;background:#86ce8f;border-color:#a6dbab;color:#212121">M</div>
<div class="cell r" style="left:1999px;width:112.5px"><b class="d">6</b><b class="p">.</b><svg class="o" viewBox="0 0 12.4 20.4"><path d="M5.35 0H7.65V20.4H5.35V3.2L1.45 5.6L0.45 3.7L5.35 0.4Z"/></svg><b class="q"><i>%</i></b></div>
<div class="cell r" style="left:2139px;width:161.5px"><b class="h"></b></div>
<div class="cell r" style="left:2325px;width:273.5px"><b class="d">7</b><b class="c">,</b><b class="d">5</b><b class="d">9</b><svg class="o" viewBox="0 0 12.4 20.4"><path d="M5.35 0H7.65V20.4H5.35V3.2L1.45 5.6L0.45 3.7L5.35 0.4Z"/></svg></div>
</div>
<div class="a" style="left:0;top:1148px;width:2880px;height:80px">
<div class="a" style="left:127px;top:28px"><svg width="24" height="24" viewBox="0 0 24 24" ><circle cx="12" cy="8.05" r="7" fill="none" stroke="#8f8f8f" stroke-width="1.6"/><path d="M1.3 21.9 C4 17.8 8 16.3 12 16.3 C16 16.3 20 17.8 22.7 21.9" fill="none" stroke="#8f8f8f" stroke-width="1.6" stroke-linecap="round"/></svg></div>
<div class="cell" style="left:173px"><span class="name">Sherri Maratt</span></div>
<div class="chips">
<div style="position:absolute;left:24px;top:18px;display:flex;gap:20px">
<div class="chip" style="position:relative;top:0;">Rise Stronger Each Morning</div>
</div></div>
<div class="soc" style="left:821px;top:26px"><svg width="28" height="28" viewBox="0 0 24 24" ><rect x="1.6" y="1.6" width="20.8" height="20.8" rx="6" fill="none" stroke="url(#igg)" stroke-width="2.3"/><circle cx="12" cy="12" r="4.9" fill="none" stroke="url(#igg)" stroke-width="2.3"/><circle cx="18" cy="6" r="1.4" fill="url(#igg)"/><rect x="1.6" y="1.6" width="20.8" height="20.8" rx="6" fill="none" stroke="url(#igv)" stroke-width="2.3"/><circle cx="12" cy="12" r="4.9" fill="none" stroke="url(#igv)" stroke-width="2.3"/><circle cx="18" cy="6" r="1.4" fill="url(#igv)"/></svg></div>
<div class="soc off" style="left:869px;top:26px"><svg width="28" height="28" viewBox="0 0 24 24" ><path fill="#0866ff" d="M9.101 23.691v-7.98H6.627v-3.667h2.474v-1.58c0-4.085 1.848-5.978 5.858-5.978.401 0 .955.042 1.468.103a8.68 8.68 0 0 1 1.141.195v3.325a8.623 8.623 0 0 0-.653-.036 26.805 26.805 0 0 0-.733-.009c-.707 0-1.259.096-1.675.309a1.686 1.686 0 0 0-.679.622c-.258.42-.374.995-.374 1.752v1.297h3.919l-.386 2.103-.287 1.564h-3.246v8.245C19.396 23.238 24 18.179 24 12.044c0-6.627-5.373-12-12-12s-12 5.373-12 12c0 5.628 3.874 10.35 9.101 11.647Z"/></svg></div>
<div class="soc off" style="left:917px;top:26px"><svg width="28" height="28" viewBox="0 0 24 24" ><g transform="translate(1.2 0.6) scale(0.93)"><path fill="#25f4ee" transform="translate(-1 -1)" d="M12.525.02c1.31-.02 2.61-.01 3.91-.02.08 1.53.63 3.09 1.75 4.17 1.12 1.11 2.7 1.62 4.24 1.79v4.03c-1.44-.05-2.89-.35-4.2-.97-.57-.26-1.1-.59-1.62-.93-.01 2.92.01 5.84-.02 8.75-.08 1.4-.54 2.79-1.35 3.94-1.310 1.92-3.58 3.17-5.91 3.21-1.43.08-2.86-.31-4.08-1.03-2.02-1.19-3.44-3.37-3.65-5.71-.02-.5-.03-1-.01-1.49.18-1.9 1.12-3.72 2.58-4.96 1.66-1.44 3.98-2.13 6.15-1.72.02 1.480-.04 2.96-.04 4.44-.99-.32-2.15-.23-3.02.37-.63.41-1.11 1.04-1.36 1.75-.21.51-.15 1.07-.14 1.61.24 1.64 1.82 3.02 3.5 2.87 1.12-.01 2.19-.66 2.77-1.61.19-.33.4-.67.41-1.06.1-1.79.06-3.57.07-5.36.01-4.03-.01-8.05.02-12.07z"/><path fill="#fe2c55" transform="translate(1 1)" d="M12.525.02c1.31-.02 2.61-.01 3.91-.02.08 1.53.63 3.09 1.75 4.17 1.12 1.11 2.7 1.62 4.24 1.79v4.03c-1.44-.05-2.89-.35-4.2-.97-.57-.26-1.1-.59-1.62-.93-.01 2.92.01 5.84-.02 8.75-.08 1.4-.54 2.79-1.35 3.94-1.310 1.92-3.58 3.17-5.91 3.21-1.43.08-2.86-.31-4.08-1.03-2.02-1.19-3.44-3.37-3.65-5.71-.02-.5-.03-1-.01-1.49.18-1.9 1.12-3.72 2.58-4.96 1.66-1.44 3.98-2.13 6.15-1.72.02 1.480-.04 2.96-.04 4.44-.99-.32-2.15-.23-3.02.37-.63.41-1.11 1.04-1.36 1.75-.21.51-.15 1.07-.14 1.61.24 1.64 1.82 3.02 3.5 2.87 1.12-.01 2.19-.66 2.77-1.61.19-.33.4-.67.41-1.06.1-1.79.06-3.57.07-5.36.01-4.03-.01-8.05.02-12.07z"/><path fill="#000" d="M12.525.02c1.31-.02 2.61-.01 3.91-.02.08 1.53.63 3.09 1.75 4.17 1.12 1.11 2.7 1.62 4.24 1.79v4.03c-1.44-.05-2.89-.35-4.2-.97-.57-.26-1.1-.59-1.62-.93-.01 2.92.01 5.84-.02 8.75-.08 1.4-.54 2.79-1.35 3.94-1.310 1.92-3.58 3.17-5.91 3.21-1.43.08-2.86-.31-4.08-1.03-2.02-1.19-3.44-3.37-3.65-5.71-.02-.5-.03-1-.01-1.49.18-1.9 1.12-3.72 2.58-4.96 1.66-1.44 3.98-2.13 6.15-1.72.02 1.480-.04 2.96-.04 4.44-.99-.32-2.15-.23-3.02.37-.63.41-1.11 1.04-1.36 1.75-.21.51-.15 1.07-.14 1.61.24 1.64 1.82 3.02 3.5 2.87 1.12-.01 2.19-.66 2.77-1.61.19-.33.4-.67.41-1.06.1-1.79.06-3.57.07-5.36.01-4.03-.01-8.05.02-12.07z"/></g></svg></div>
<div class="soc off" style="left:965px;top:26px"><svg width="28" height="28" viewBox="0 0 24 24" ><path fill="#ff0000" d="M23.498 6.186a3.016 3.016 0 0 0-2.122-2.136C19.505 3.545 12 3.545 12 3.545s-7.505 0-9.377.505A3.017 3.017 0 0 0 .502 6.186C0 8.07 0 12 0 12s0 3.93.502 5.814a3.016 3.016 0 0 0 2.122 2.136c1.871.505 9.376.505 9.376.505s7.505 0 9.377-.505a3.015 3.015 0 0 0 2.122-2.136C24 15.93 24 12 24 12s0-3.93-.502-5.814z"/><path fill="#fff" d="M9.545 15.568V8.432L15.818 12l-6.273 3.568z"/></svg></div>
<div class="soc" style="left:1013px;top:26px"><svg width="28" height="28" viewBox="0 0 24 24" ><path fill="#000" transform="translate(1.2 1.2) scale(0.9)" d="M18.901 1.153h3.68l-8.04 9.19L24 22.846h-7.406l-5.8-7.584-6.638 7.584H.474l8.6-9.83L0 1.154h7.594l5.243 6.932ZM17.61 20.644h2.039L6.486 3.24H4.298Z"/></svg></div>
<div class="soc off" style="left:1061px;top:26px"><svg width="28" height="28" viewBox="0 0 24 24" ><path fill="#1185fe" transform="translate(0.5 0.75) scale(0.96)" d="M12 10.8c-1.087-2.114-4.046-6.053-6.798-7.995C2.566.944 1.561 1.266.902 1.565.139 1.908 0 3.08 0 3.768c0 .69.378 5.65.624 6.479.815 2.736 3.713 3.66 6.383 3.364.136-.02.275-.039.415-.056-.138.022-.276.04-.415.056-3.912.58-7.387 2.005-2.83 7.078 5.013 5.19 6.87-1.113 7.823-4.308.953 3.195 2.05 9.271 7.733 4.308 4.267-4.308 1.172-6.498-2.74-7.078a8.741 8.741 0 0 1-.415-.056c.14.017.279.036.415.056 2.67.297 5.568-.628 6.383-3.364.246-.828.624-5.79.624-6.478 0-.69-.139-1.861-.902-2.206-.659-.298-1.664-.62-4.3 1.24C16.046 4.748 13.087 8.687 12 10.8Z"/></svg></div>
<div class="soc off" style="left:1109px;top:26px"><svg width="28" height="28" viewBox="0 0 24 24" ><path fill="#000" d="M12.186 24h-.007c-3.581-.024-6.334-1.205-8.184-3.509C2.35 18.44 1.5 15.586 1.472 12.01v-.017c.03-3.579.879-6.43 2.525-8.482C5.845 1.205 8.6.024 12.18 0h.014c2.746.02 5.043.725 6.826 2.098 1.677 1.29 2.858 3.13 3.509 5.467l-2.04.569c-1.104-3.96-3.898-5.984-8.304-6.015-2.910.022-5.11.936-6.54 2.717C4.307 6.504 3.616 8.914 3.589 12c.027 3.086.718 5.496 2.057 7.164 1.43 1.783 3.631 2.698 6.54 2.717 2.623-.02 4.358-.631 5.8-2.045 1.647-1.613 1.618-3.593 1.090-4.798-.31-.71-.873-1.3-1.634-1.75-.192 1.352-.622 2.446-1.284 3.272-.886 1.102-2.14 1.704-3.73 1.790-1.202.065-2.361-.218-3.259-.801-1.063-.689-1.685-1.74-1.752-2.964-.065-1.190.408-2.285 1.33-3.082.88-.76 2.119-1.207 3.583-1.291a13.853 13.853 0 0 1 3.020.142c-.126-.742-.375-1.332-.75-1.757-.513-.586-1.308-.883-2.359-.89h-.029c-.844 0-1.992.232-2.721 1.32L7.734 7.847c.98-1.454 2.568-2.256 4.478-2.256h.044c3.194.02 5.097 1.975 5.287 5.388.108.046.216.094.321.142 1.49.7 2.58 1.761 3.154 3.070.797 1.820.871 4.790-1.548 7.158-1.85 1.81-4.094 2.628-7.277 2.65Zm1.003-11.69c-.242 0-.487.007-.739.021-1.836.103-2.98.946-2.916 2.143.067 1.256 1.452 1.839 2.784 1.767 1.224-.065 2.818-.543 3.086-3.710a10.5 10.5 0 0 0-2.215-.221z"/></svg></div>
<div class="soc off" style="left:1157px;top:26px"><svg width="28" height="28" viewBox="0 0 24 24" ><rect x="0" y="0" width="24" height="24" rx="2" fill="#0a66c2"/><path fill="#fff" d="M20.447 20.452h-3.554v-5.569c0-1.328-.027-3.037-1.852-3.037-1.853 0-2.136 1.445-2.136 2.939v5.667H9.351V9h3.414v1.561h.046c.477-.9 1.637-1.85 3.37-1.85 3.601 0 4.267 2.370 4.267 5.455v6.286zM5.337 7.433c-1.144 0-2.063-.926-2.063-2.065 0-1.138.92-2.063 2.063-2.063 1.140 0 2.064.925 2.064 2.063 0 1.139-.925 2.065-2.064 2.065zm1.782 13.019H3.555V9h3.564v11.452z"/></svg></div>
<div class="soc off" style="left:1205px;top:26px"><svg width="28" height="28" viewBox="0 0 24 24" ><path fill="#ff6719" transform="translate(1.47 0.86) scale(0.93)" d="M22.539 8.242H1.46V5.406h21.08v2.836zM1.46 10.812V24L12 18.110 22.540 24V10.812H1.46zM22.540 0H1.46v2.836h21.080V0z"/></svg></div>
<div class="cell r" style="left:1257px;width:287.5px"><b class="d">3</b><b class="c">,</b><svg class="o" viewBox="0 0 12.4 20.4"><path d="M5.35 0H7.65V20.4H5.35V3.2L1.45 5.6L0.45 3.7L5.35 0.4Z"/></svg><b class="d">2</b><b class="d">6</b></div>
<div class="cell r" style="left:1569px;width:165px;color:#3bb45a">+<b class="d">4</b></div>
<div class="badge" style="left:1917px;width:58px;background:#86ce8f;border-color:#a6dbab;color:#212121">M</div>
<div class="cell r" style="left:1999px;width:112.5px"><svg class="o" viewBox="0 0 12.4 20.4"><path d="M5.35 0H7.65V20.4H5.35V3.2L1.45 5.6L0.45 3.7L5.35 0.4Z"/></svg><b class="p">.</b><svg class="o" viewBox="0 0 12.4 20.4"><path d="M5.35 0H7.65V20.4H5.35V3.2L1.45 5.6L0.45 3.7L5.35 0.4Z"/></svg><b class="q"><i>%</i></b></div>
<div class="cell r" style="left:2139px;width:161.5px"><b class="d">2</b><b class="c">,</b><b class="d">3</b><b class="d">0</b><b class="d">4</b></div>
<div class="cell r" style="left:2325px;width:273.5px"><b class="d">2</b><b class="c">,</b><b class="d">3</b><b class="d">0</b><b class="d">4</b></div>
</div>
<div class="a" style="left:0;top:1228px;width:2880px;height:80px">
<div class="a" style="left:127px;top:28px"><svg width="24" height="24" viewBox="0 0 24 24" ><circle cx="12" cy="8.05" r="7" fill="none" stroke="#8f8f8f" stroke-width="1.6"/><path d="M1.3 21.9 C4 17.8 8 16.3 12 16.3 C16 16.3 20 17.8 22.7 21.9" fill="none" stroke="#8f8f8f" stroke-width="1.6" stroke-linecap="round"/></svg></div>
<div class="cell" style="left:173px"><span class="name">Nina Cole</span></div>
<div class="chips">
<div style="position:absolute;left:24px;top:18px;display:flex;gap:20px">
<div class="chip" style="position:relative;top:0;">I Don’t Know Him Anymore</div>
</div></div>
<div class="soc off" style="left:821px;top:26px"><svg width="28" height="28" viewBox="0 0 24 24" ><rect x="1.6" y="1.6" width="20.8" height="20.8" rx="6" fill="none" stroke="url(#igg)" stroke-width="2.3"/><circle cx="12" cy="12" r="4.9" fill="none" stroke="url(#igg)" stroke-width="2.3"/><circle cx="18" cy="6" r="1.4" fill="url(#igg)"/><rect x="1.6" y="1.6" width="20.8" height="20.8" rx="6" fill="none" stroke="url(#igv)" stroke-width="2.3"/><circle cx="12" cy="12" r="4.9" fill="none" stroke="url(#igv)" stroke-width="2.3"/><circle cx="18" cy="6" r="1.4" fill="url(#igv)"/></svg></div>
<div class="soc off" style="left:869px;top:26px"><svg width="28" height="28" viewBox="0 0 24 24" ><path fill="#0866ff" d="M9.101 23.691v-7.98H6.627v-3.667h2.474v-1.58c0-4.085 1.848-5.978 5.858-5.978.401 0 .955.042 1.468.103a8.68 8.68 0 0 1 1.141.195v3.325a8.623 8.623 0 0 0-.653-.036 26.805 26.805 0 0 0-.733-.009c-.707 0-1.259.096-1.675.309a1.686 1.686 0 0 0-.679.622c-.258.42-.374.995-.374 1.752v1.297h3.919l-.386 2.103-.287 1.564h-3.246v8.245C19.396 23.238 24 18.179 24 12.044c0-6.627-5.373-12-12-12s-12 5.373-12 12c0 5.628 3.874 10.35 9.101 11.647Z"/></svg></div>
<div class="soc off" style="left:917px;top:26px"><svg width="28" height="28" viewBox="0 0 24 24" ><g transform="translate(1.2 0.6) scale(0.93)"><path fill="#25f4ee" transform="translate(-1 -1)" d="M12.525.02c1.31-.02 2.61-.01 3.91-.02.08 1.53.63 3.09 1.75 4.17 1.12 1.11 2.7 1.62 4.24 1.79v4.03c-1.44-.05-2.89-.35-4.2-.97-.57-.26-1.1-.59-1.62-.93-.01 2.92.01 5.84-.02 8.75-.08 1.4-.54 2.79-1.35 3.94-1.310 1.92-3.58 3.17-5.91 3.21-1.43.08-2.86-.31-4.08-1.03-2.02-1.19-3.44-3.37-3.65-5.71-.02-.5-.03-1-.01-1.49.18-1.9 1.12-3.72 2.58-4.96 1.66-1.44 3.98-2.13 6.15-1.72.02 1.480-.04 2.96-.04 4.44-.99-.32-2.15-.23-3.02.37-.63.41-1.11 1.04-1.36 1.75-.21.51-.15 1.07-.14 1.61.24 1.64 1.82 3.02 3.5 2.87 1.12-.01 2.19-.66 2.77-1.61.19-.33.4-.67.41-1.06.1-1.79.06-3.57.07-5.36.01-4.03-.01-8.05.02-12.07z"/><path fill="#fe2c55" transform="translate(1 1)" d="M12.525.02c1.31-.02 2.61-.01 3.91-.02.08 1.53.63 3.09 1.75 4.17 1.12 1.11 2.7 1.62 4.24 1.79v4.03c-1.44-.05-2.89-.35-4.2-.97-.57-.26-1.1-.59-1.62-.93-.01 2.92.01 5.84-.02 8.75-.08 1.4-.54 2.79-1.35 3.94-1.310 1.92-3.58 3.17-5.91 3.21-1.43.08-2.86-.31-4.08-1.03-2.02-1.19-3.44-3.37-3.65-5.71-.02-.5-.03-1-.01-1.49.18-1.9 1.12-3.72 2.58-4.96 1.66-1.44 3.98-2.13 6.15-1.72.02 1.480-.04 2.96-.04 4.44-.99-.32-2.15-.23-3.02.37-.63.41-1.11 1.04-1.36 1.75-.21.51-.15 1.07-.14 1.61.24 1.64 1.82 3.02 3.5 2.87 1.12-.01 2.19-.66 2.77-1.61.19-.33.4-.67.41-1.06.1-1.79.06-3.57.07-5.36.01-4.03-.01-8.05.02-12.07z"/><path fill="#000" d="M12.525.02c1.31-.02 2.61-.01 3.91-.02.08 1.53.63 3.09 1.75 4.17 1.12 1.11 2.7 1.62 4.24 1.79v4.03c-1.44-.05-2.89-.35-4.2-.97-.57-.26-1.1-.59-1.62-.93-.01 2.92.01 5.84-.02 8.75-.08 1.4-.54 2.79-1.35 3.94-1.310 1.92-3.58 3.17-5.91 3.21-1.43.08-2.86-.31-4.08-1.03-2.02-1.19-3.44-3.37-3.65-5.71-.02-.5-.03-1-.01-1.49.18-1.9 1.12-3.72 2.58-4.96 1.66-1.44 3.98-2.13 6.15-1.72.02 1.480-.04 2.96-.04 4.44-.99-.32-2.15-.23-3.02.37-.63.41-1.11 1.04-1.36 1.75-.21.51-.15 1.07-.14 1.61.24 1.64 1.82 3.02 3.5 2.87 1.12-.01 2.19-.66 2.77-1.61.19-.33.4-.67.41-1.06.1-1.79.06-3.57.07-5.36.01-4.03-.01-8.05.02-12.07z"/></g></svg></div>
<div class="soc off" style="left:965px;top:26px"><svg width="28" height="28" viewBox="0 0 24 24" ><path fill="#ff0000" d="M23.498 6.186a3.016 3.016 0 0 0-2.122-2.136C19.505 3.545 12 3.545 12 3.545s-7.505 0-9.377.505A3.017 3.017 0 0 0 .502 6.186C0 8.07 0 12 0 12s0 3.93.502 5.814a3.016 3.016 0 0 0 2.122 2.136c1.871.505 9.376.505 9.376.505s7.505 0 9.377-.505a3.015 3.015 0 0 0 2.122-2.136C24 15.93 24 12 24 12s0-3.93-.502-5.814z"/><path fill="#fff" d="M9.545 15.568V8.432L15.818 12l-6.273 3.568z"/></svg></div>
<div class="soc" style="left:1013px;top:26px"><svg width="28" height="28" viewBox="0 0 24 24" ><path fill="#000" transform="translate(1.2 1.2) scale(0.9)" d="M18.901 1.153h3.68l-8.04 9.19L24 22.846h-7.406l-5.8-7.584-6.638 7.584H.474l8.6-9.83L0 1.154h7.594l5.243 6.932ZM17.61 20.644h2.039L6.486 3.24H4.298Z"/></svg></div>
<div class="soc" style="left:1061px;top:26px"><svg width="28" height="28" viewBox="0 0 24 24" ><path fill="#1185fe" transform="translate(0.5 0.75) scale(0.96)" d="M12 10.8c-1.087-2.114-4.046-6.053-6.798-7.995C2.566.944 1.561 1.266.902 1.565.139 1.908 0 3.08 0 3.768c0 .69.378 5.65.624 6.479.815 2.736 3.713 3.66 6.383 3.364.136-.02.275-.039.415-.056-.138.022-.276.04-.415.056-3.912.58-7.387 2.005-2.83 7.078 5.013 5.19 6.87-1.113 7.823-4.308.953 3.195 2.05 9.271 7.733 4.308 4.267-4.308 1.172-6.498-2.74-7.078a8.741 8.741 0 0 1-.415-.056c.14.017.279.036.415.056 2.67.297 5.568-.628 6.383-3.364.246-.828.624-5.79.624-6.478 0-.69-.139-1.861-.902-2.206-.659-.298-1.664-.62-4.3 1.24C16.046 4.748 13.087 8.687 12 10.8Z"/></svg></div>
<div class="soc off" style="left:1109px;top:26px"><svg width="28" height="28" viewBox="0 0 24 24" ><path fill="#000" d="M12.186 24h-.007c-3.581-.024-6.334-1.205-8.184-3.509C2.35 18.44 1.5 15.586 1.472 12.01v-.017c.03-3.579.879-6.43 2.525-8.482C5.845 1.205 8.6.024 12.18 0h.014c2.746.02 5.043.725 6.826 2.098 1.677 1.29 2.858 3.13 3.509 5.467l-2.04.569c-1.104-3.96-3.898-5.984-8.304-6.015-2.910.022-5.11.936-6.54 2.717C4.307 6.504 3.616 8.914 3.589 12c.027 3.086.718 5.496 2.057 7.164 1.43 1.783 3.631 2.698 6.54 2.717 2.623-.02 4.358-.631 5.8-2.045 1.647-1.613 1.618-3.593 1.090-4.798-.31-.71-.873-1.3-1.634-1.75-.192 1.352-.622 2.446-1.284 3.272-.886 1.102-2.14 1.704-3.73 1.790-1.202.065-2.361-.218-3.259-.801-1.063-.689-1.685-1.74-1.752-2.964-.065-1.190.408-2.285 1.33-3.082.88-.76 2.119-1.207 3.583-1.291a13.853 13.853 0 0 1 3.020.142c-.126-.742-.375-1.332-.75-1.757-.513-.586-1.308-.883-2.359-.89h-.029c-.844 0-1.992.232-2.721 1.32L7.734 7.847c.98-1.454 2.568-2.256 4.478-2.256h.044c3.194.02 5.097 1.975 5.287 5.388.108.046.216.094.321.142 1.49.7 2.58 1.761 3.154 3.070.797 1.820.871 4.790-1.548 7.158-1.85 1.81-4.094 2.628-7.277 2.65Zm1.003-11.69c-.242 0-.487.007-.739.021-1.836.103-2.98.946-2.916 2.143.067 1.256 1.452 1.839 2.784 1.767 1.224-.065 2.818-.543 3.086-3.710a10.5 10.5 0 0 0-2.215-.221z"/></svg></div>
<div class="soc" style="left:1157px;top:26px"><svg width="28" height="28" viewBox="0 0 24 24" ><rect x="0" y="0" width="24" height="24" rx="2" fill="#0a66c2"/><path fill="#fff" d="M20.447 20.452h-3.554v-5.569c0-1.328-.027-3.037-1.852-3.037-1.853 0-2.136 1.445-2.136 2.939v5.667H9.351V9h3.414v1.561h.046c.477-.9 1.637-1.85 3.37-1.85 3.601 0 4.267 2.370 4.267 5.455v6.286zM5.337 7.433c-1.144 0-2.063-.926-2.063-2.065 0-1.138.92-2.063 2.063-2.063 1.140 0 2.064.925 2.064 2.063 0 1.139-.925 2.065-2.064 2.065zm1.782 13.019H3.555V9h3.564v11.452z"/></svg></div>
<div class="soc off" style="left:1205px;top:26px"><svg width="28" height="28" viewBox="0 0 24 24" ><path fill="#ff6719" transform="translate(1.47 0.86) scale(0.93)" d="M22.539 8.242H1.46V5.406h21.08v2.836zM1.46 10.812V24L12 18.110 22.540 24V10.812H1.46zM22.540 0H1.46v2.836h21.080V0z"/></svg></div>
<div class="cell r" style="left:1257px;width:287.5px"><svg class="o" viewBox="0 0 12.4 20.4"><path d="M5.35 0H7.65V20.4H5.35V3.2L1.45 5.6L0.45 3.7L5.35 0.4Z"/></svg><b class="d">2</b><b class="c">,</b><b class="d">4</b><b class="d">8</b><b class="d">3</b></div>
<div class="cell r" style="left:1569px;width:165px;color:#3bb45a">+<b class="d">4</b><b class="d">5</b><svg class="o" viewBox="0 0 12.4 20.4"><path d="M5.35 0H7.65V20.4H5.35V3.2L1.45 5.6L0.45 3.7L5.35 0.4Z"/></svg></div>
<div class="badge" style="left:1917px;width:58px;background:#86ce8f;border-color:#a6dbab;color:#212121">M</div>
<div class="cell r" style="left:1999px;width:112.5px"><svg class="o" viewBox="0 0 12.4 20.4"><path d="M5.35 0H7.65V20.4H5.35V3.2L1.45 5.6L0.45 3.7L5.35 0.4Z"/></svg><b class="p">.</b><b class="d">9</b><b class="q"><i>%</i></b></div>
<div class="cell r" style="left:2139px;width:161.5px"><b class="d">4</b><b class="c">,</b><b class="d">0</b><b class="d">9</b><b class="d">8</b></div>
<div class="cell r" style="left:2325px;width:273.5px"><b class="h"></b></div>
</div>
<div class="a" style="left:0;top:1308px;width:2880px;height:80px">
<div class="av" style="overflow:hidden"><svg width="100%" height="100%" viewBox="0 0 28 28"><rect width="28" height="28" fill="#34464c"/><ellipse cx="15" cy="31" rx="14" ry="11" fill="#263239"/><ellipse cx="16" cy="11.5" rx="6.2" ry="7.2" fill="#cf9a76"/><path d="M9.8 9 Q16 2.5 22.2 9 Q21 4.5 16 4.3 Q11 4.5 9.8 9Z" fill="#b9744a"/></svg></div>
<div class="cell" style="left:173px"><span class="name">Marcus Yoon</span></div>
<div class="chips">
<div style="position:absolute;left:24px;top:18px;display:flex;gap:20px">
<div class="chip" style="position:relative;top:0;">Our Conversation Has Faded</div>
</div></div>
<div class="soc off" style="left:821px;top:26px"><svg width="28" height="28" viewBox="0 0 24 24" ><rect x="1.6" y="1.6" width="20.8" height="20.8" rx="6" fill="none" stroke="url(#igg)" stroke-width="2.3"/><circle cx="12" cy="12" r="4.9" fill="none" stroke="url(#igg)" stroke-width="2.3"/><circle cx="18" cy="6" r="1.4" fill="url(#igg)"/><rect x="1.6" y="1.6" width="20.8" height="20.8" rx="6" fill="none" stroke="url(#igv)" stroke-width="2.3"/><circle cx="12" cy="12" r="4.9" fill="none" stroke="url(#igv)" stroke-width="2.3"/><circle cx="18" cy="6" r="1.4" fill="url(#igv)"/></svg></div>
<div class="soc off" style="left:869px;top:26px"><svg width="28" height="28" viewBox="0 0 24 24" ><path fill="#0866ff" d="M9.101 23.691v-7.98H6.627v-3.667h2.474v-1.58c0-4.085 1.848-5.978 5.858-5.978.401 0 .955.042 1.468.103a8.68 8.68 0 0 1 1.141.195v3.325a8.623 8.623 0 0 0-.653-.036 26.805 26.805 0 0 0-.733-.009c-.707 0-1.259.096-1.675.309a1.686 1.686 0 0 0-.679.622c-.258.42-.374.995-.374 1.752v1.297h3.919l-.386 2.103-.287 1.564h-3.246v8.245C19.396 23.238 24 18.179 24 12.044c0-6.627-5.373-12-12-12s-12 5.373-12 12c0 5.628 3.874 10.35 9.101 11.647Z"/></svg></div>
<div class="soc off" style="left:917px;top:26px"><svg width="28" height="28" viewBox="0 0 24 24" ><g transform="translate(1.2 0.6) scale(0.93)"><path fill="#25f4ee" transform="translate(-1 -1)" d="M12.525.02c1.31-.02 2.61-.01 3.91-.02.08 1.53.63 3.09 1.75 4.17 1.12 1.11 2.7 1.62 4.24 1.79v4.03c-1.44-.05-2.89-.35-4.2-.97-.57-.26-1.1-.59-1.62-.93-.01 2.92.01 5.84-.02 8.75-.08 1.4-.54 2.79-1.35 3.94-1.310 1.92-3.58 3.17-5.91 3.21-1.43.08-2.86-.31-4.08-1.03-2.02-1.19-3.44-3.37-3.65-5.71-.02-.5-.03-1-.01-1.49.18-1.9 1.12-3.72 2.58-4.96 1.66-1.44 3.98-2.13 6.15-1.72.02 1.480-.04 2.96-.04 4.44-.99-.32-2.15-.23-3.02.37-.63.41-1.11 1.04-1.36 1.75-.21.51-.15 1.07-.14 1.61.24 1.64 1.82 3.02 3.5 2.87 1.12-.01 2.19-.66 2.77-1.61.19-.33.4-.67.41-1.06.1-1.79.06-3.57.07-5.36.01-4.03-.01-8.05.02-12.07z"/><path fill="#fe2c55" transform="translate(1 1)" d="M12.525.02c1.31-.02 2.61-.01 3.91-.02.08 1.53.63 3.09 1.75 4.17 1.12 1.11 2.7 1.62 4.24 1.79v4.03c-1.44-.05-2.89-.35-4.2-.97-.57-.26-1.1-.59-1.62-.93-.01 2.92.01 5.84-.02 8.75-.08 1.4-.54 2.79-1.35 3.94-1.310 1.92-3.58 3.17-5.91 3.21-1.43.08-2.86-.31-4.08-1.03-2.02-1.19-3.44-3.37-3.65-5.71-.02-.5-.03-1-.01-1.49.18-1.9 1.12-3.72 2.58-4.96 1.66-1.44 3.98-2.13 6.15-1.72.02 1.480-.04 2.96-.04 4.44-.99-.32-2.15-.23-3.02.37-.63.41-1.11 1.04-1.36 1.75-.21.51-.15 1.07-.14 1.61.24 1.64 1.82 3.02 3.5 2.87 1.12-.01 2.19-.66 2.77-1.61.19-.33.4-.67.41-1.06.1-1.79.06-3.57.07-5.36.01-4.03-.01-8.05.02-12.07z"/><path fill="#000" d="M12.525.02c1.31-.02 2.61-.01 3.91-.02.08 1.53.63 3.09 1.75 4.17 1.12 1.11 2.7 1.62 4.24 1.79v4.03c-1.44-.05-2.89-.35-4.2-.97-.57-.26-1.1-.59-1.62-.93-.01 2.92.01 5.84-.02 8.75-.08 1.4-.54 2.79-1.35 3.94-1.310 1.92-3.58 3.17-5.91 3.21-1.43.08-2.86-.31-4.08-1.03-2.02-1.19-3.44-3.37-3.65-5.71-.02-.5-.03-1-.01-1.49.18-1.9 1.12-3.72 2.58-4.96 1.66-1.44 3.98-2.13 6.15-1.72.02 1.480-.04 2.96-.04 4.44-.99-.32-2.15-.23-3.02.37-.63.41-1.11 1.04-1.36 1.75-.21.51-.15 1.07-.14 1.61.24 1.64 1.82 3.02 3.5 2.87 1.12-.01 2.19-.66 2.77-1.61.19-.33.4-.67.41-1.06.1-1.79.06-3.57.07-5.36.01-4.03-.01-8.05.02-12.07z"/></g></svg></div>
<div class="soc" style="left:965px;top:26px"><svg width="28" height="28" viewBox="0 0 24 24" ><path fill="#ff0000" d="M23.498 6.186a3.016 3.016 0 0 0-2.122-2.136C19.505 3.545 12 3.545 12 3.545s-7.505 0-9.377.505A3.017 3.017 0 0 0 .502 6.186C0 8.07 0 12 0 12s0 3.93.502 5.814a3.016 3.016 0 0 0 2.122 2.136c1.871.505 9.376.505 9.376.505s7.505 0 9.377-.505a3.015 3.015 0 0 0 2.122-2.136C24 15.93 24 12 24 12s0-3.93-.502-5.814z"/><path fill="#fff" d="M9.545 15.568V8.432L15.818 12l-6.273 3.568z"/></svg></div>
<div class="soc" style="left:1013px;top:26px"><svg width="28" height="28" viewBox="0 0 24 24" ><path fill="#000" transform="translate(1.2 1.2) scale(0.9)" d="M18.901 1.153h3.68l-8.04 9.19L24 22.846h-7.406l-5.8-7.584-6.638 7.584H.474l8.6-9.83L0 1.154h7.594l5.243 6.932ZM17.61 20.644h2.039L6.486 3.24H4.298Z"/></svg></div>
<div class="soc off" style="left:1061px;top:26px"><svg width="28" height="28" viewBox="0 0 24 24" ><path fill="#1185fe" transform="translate(0.5 0.75) scale(0.96)" d="M12 10.8c-1.087-2.114-4.046-6.053-6.798-7.995C2.566.944 1.561 1.266.902 1.565.139 1.908 0 3.08 0 3.768c0 .69.378 5.65.624 6.479.815 2.736 3.713 3.66 6.383 3.364.136-.02.275-.039.415-.056-.138.022-.276.04-.415.056-3.912.58-7.387 2.005-2.83 7.078 5.013 5.19 6.87-1.113 7.823-4.308.953 3.195 2.05 9.271 7.733 4.308 4.267-4.308 1.172-6.498-2.74-7.078a8.741 8.741 0 0 1-.415-.056c.14.017.279.036.415.056 2.67.297 5.568-.628 6.383-3.364.246-.828.624-5.79.624-6.478 0-.69-.139-1.861-.902-2.206-.659-.298-1.664-.62-4.3 1.24C16.046 4.748 13.087 8.687 12 10.8Z"/></svg></div>
<div class="soc off" style="left:1109px;top:26px"><svg width="28" height="28" viewBox="0 0 24 24" ><path fill="#000" d="M12.186 24h-.007c-3.581-.024-6.334-1.205-8.184-3.509C2.35 18.44 1.5 15.586 1.472 12.01v-.017c.03-3.579.879-6.43 2.525-8.482C5.845 1.205 8.6.024 12.18 0h.014c2.746.02 5.043.725 6.826 2.098 1.677 1.29 2.858 3.13 3.509 5.467l-2.04.569c-1.104-3.96-3.898-5.984-8.304-6.015-2.910.022-5.11.936-6.54 2.717C4.307 6.504 3.616 8.914 3.589 12c.027 3.086.718 5.496 2.057 7.164 1.43 1.783 3.631 2.698 6.54 2.717 2.623-.02 4.358-.631 5.8-2.045 1.647-1.613 1.618-3.593 1.090-4.798-.31-.71-.873-1.3-1.634-1.75-.192 1.352-.622 2.446-1.284 3.272-.886 1.102-2.14 1.704-3.73 1.790-1.202.065-2.361-.218-3.259-.801-1.063-.689-1.685-1.74-1.752-2.964-.065-1.190.408-2.285 1.33-3.082.88-.76 2.119-1.207 3.583-1.291a13.853 13.853 0 0 1 3.020.142c-.126-.742-.375-1.332-.75-1.757-.513-.586-1.308-.883-2.359-.89h-.029c-.844 0-1.992.232-2.721 1.32L7.734 7.847c.98-1.454 2.568-2.256 4.478-2.256h.044c3.194.02 5.097 1.975 5.287 5.388.108.046.216.094.321.142 1.49.7 2.58 1.761 3.154 3.070.797 1.820.871 4.790-1.548 7.158-1.85 1.81-4.094 2.628-7.277 2.65Zm1.003-11.69c-.242 0-.487.007-.739.021-1.836.103-2.98.946-2.916 2.143.067 1.256 1.452 1.839 2.784 1.767 1.224-.065 2.818-.543 3.086-3.710a10.5 10.5 0 0 0-2.215-.221z"/></svg></div>
<div class="soc" style="left:1157px;top:26px"><svg width="28" height="28" viewBox="0 0 24 24" ><rect x="0" y="0" width="24" height="24" rx="2" fill="#0a66c2"/><path fill="#fff" d="M20.447 20.452h-3.554v-5.569c0-1.328-.027-3.037-1.852-3.037-1.853 0-2.136 1.445-2.136 2.939v5.667H9.351V9h3.414v1.561h.046c.477-.9 1.637-1.85 3.37-1.85 3.601 0 4.267 2.370 4.267 5.455v6.286zM5.337 7.433c-1.144 0-2.063-.926-2.063-2.065 0-1.138.92-2.063 2.063-2.063 1.140 0 2.064.925 2.064 2.063 0 1.139-.925 2.065-2.064 2.065zm1.782 13.019H3.555V9h3.564v11.452z"/></svg></div>
<div class="soc off" style="left:1205px;top:26px"><svg width="28" height="28" viewBox="0 0 24 24" ><path fill="#ff6719" transform="translate(1.47 0.86) scale(0.93)" d="M22.539 8.242H1.46V5.406h21.08v2.836zM1.46 10.812V24L12 18.110 22.540 24V10.812H1.46zM22.540 0H1.46v2.836h21.080V0z"/></svg></div>
<div class="cell r" style="left:1257px;width:287.5px"><b class="d">2</b><b class="d">9</b><b class="c">,</b><b class="d">0</b><b class="d">4</b><b class="d">0</b></div>
<div class="cell r" style="left:1569px;width:165px;color:#3bb45a">+<b class="d">7</b><b class="d">6</b></div>
<div class="badge" style="left:1917px;width:58px;background:#86ce8f;border-color:#a6dbab;color:#212121">M</div>
<div class="cell r" style="left:1999px;width:112.5px"><b class="d">2</b><b class="p">.</b><b class="d">7</b><b class="q"><i>%</i></b></div>
<div class="cell r" style="left:2139px;width:161.5px"><svg class="o" viewBox="0 0 12.4 20.4"><path d="M5.35 0H7.65V20.4H5.35V3.2L1.45 5.6L0.45 3.7L5.35 0.4Z"/></svg><b class="d">7</b><b class="c">,</b><b class="d">7</b><b class="d">9</b><svg class="o" viewBox="0 0 12.4 20.4"><path d="M5.35 0H7.65V20.4H5.35V3.2L1.45 5.6L0.45 3.7L5.35 0.4Z"/></svg></div>
<div class="cell r" style="left:2325px;width:273.5px"><b class="h"></b></div>
</div>
<div class="a" style="left:0;top:1388px;width:2880px;height:80px">
<div class="a" style="left:127px;top:28px"><svg width="24" height="24" viewBox="0 0 24 24" ><circle cx="12" cy="8.05" r="7" fill="none" stroke="#8f8f8f" stroke-width="1.6"/><path d="M1.3 21.9 C4 17.8 8 16.3 12 16.3 C16 16.3 20 17.8 22.7 21.9" fill="none" stroke="#8f8f8f" stroke-width="1.6" stroke-linecap="round"/></svg></div>
<div class="cell" style="left:173px"><span class="name">Julia Ames</span></div>
<div class="chips">
<div style="position:absolute;left:24px;top:18px;display:flex;gap:20px">
<div class="chip" style="position:relative;top:0;min-width:210px;">What is Love?</div>
</div></div>
<div class="soc" style="left:821px;top:26px"><svg width="28" height="28" viewBox="0 0 24 24" ><rect x="1.6" y="1.6" width="20.8" height="20.8" rx="6" fill="none" stroke="url(#igg)" stroke-width="2.3"/><circle cx="12" cy="12" r="4.9" fill="none" stroke="url(#igg)" stroke-width="2.3"/><circle cx="18" cy="6" r="1.4" fill="url(#igg)"/><rect x="1.6" y="1.6" width="20.8" height="20.8" rx="6" fill="none" stroke="url(#igv)" stroke-width="2.3"/><circle cx="12" cy="12" r="4.9" fill="none" stroke="url(#igv)" stroke-width="2.3"/><circle cx="18" cy="6" r="1.4" fill="url(#igv)"/></svg></div>
<div class="soc" style="left:869px;top:26px"><svg width="28" height="28" viewBox="0 0 24 24" ><path fill="#0866ff" d="M9.101 23.691v-7.98H6.627v-3.667h2.474v-1.58c0-4.085 1.848-5.978 5.858-5.978.401 0 .955.042 1.468.103a8.68 8.68 0 0 1 1.141.195v3.325a8.623 8.623 0 0 0-.653-.036 26.805 26.805 0 0 0-.733-.009c-.707 0-1.259.096-1.675.309a1.686 1.686 0 0 0-.679.622c-.258.42-.374.995-.374 1.752v1.297h3.919l-.386 2.103-.287 1.564h-3.246v8.245C19.396 23.238 24 18.179 24 12.044c0-6.627-5.373-12-12-12s-12 5.373-12 12c0 5.628 3.874 10.35 9.101 11.647Z"/></svg></div>
<div class="soc off" style="left:917px;top:26px"><svg width="28" height="28" viewBox="0 0 24 24" ><g transform="translate(1.2 0.6) scale(0.93)"><path fill="#25f4ee" transform="translate(-1 -1)" d="M12.525.02c1.31-.02 2.61-.01 3.91-.02.08 1.53.63 3.09 1.75 4.17 1.12 1.11 2.7 1.62 4.24 1.79v4.03c-1.44-.05-2.89-.35-4.2-.97-.57-.26-1.1-.59-1.62-.93-.01 2.92.01 5.84-.02 8.75-.08 1.4-.54 2.79-1.35 3.94-1.310 1.92-3.58 3.17-5.91 3.21-1.43.08-2.86-.31-4.08-1.03-2.02-1.19-3.44-3.37-3.65-5.71-.02-.5-.03-1-.01-1.49.18-1.9 1.12-3.72 2.58-4.96 1.66-1.44 3.98-2.13 6.15-1.72.02 1.480-.04 2.96-.04 4.44-.99-.32-2.15-.23-3.02.37-.63.41-1.11 1.04-1.36 1.75-.21.51-.15 1.07-.14 1.61.24 1.64 1.82 3.02 3.5 2.87 1.12-.01 2.19-.66 2.77-1.61.19-.33.4-.67.41-1.06.1-1.79.06-3.57.07-5.36.01-4.03-.01-8.05.02-12.07z"/><path fill="#fe2c55" transform="translate(1 1)" d="M12.525.02c1.31-.02 2.61-.01 3.91-.02.08 1.53.63 3.09 1.75 4.17 1.12 1.11 2.7 1.62 4.24 1.79v4.03c-1.44-.05-2.89-.35-4.2-.97-.57-.26-1.1-.59-1.62-.93-.01 2.92.01 5.84-.02 8.75-.08 1.4-.54 2.79-1.35 3.94-1.310 1.92-3.58 3.17-5.91 3.21-1.43.08-2.86-.31-4.08-1.03-2.02-1.19-3.44-3.37-3.65-5.71-.02-.5-.03-1-.01-1.49.18-1.9 1.12-3.72 2.58-4.96 1.66-1.44 3.98-2.13 6.15-1.72.02 1.480-.04 2.96-.04 4.44-.99-.32-2.15-.23-3.02.37-.63.41-1.11 1.04-1.36 1.75-.21.51-.15 1.07-.14 1.61.24 1.64 1.82 3.02 3.5 2.87 1.12-.01 2.19-.66 2.77-1.61.19-.33.4-.67.41-1.06.1-1.79.06-3.57.07-5.36.01-4.03-.01-8.05.02-12.07z"/><path fill="#000" d="M12.525.02c1.31-.02 2.61-.01 3.91-.02.08 1.53.63 3.09 1.75 4.17 1.12 1.11 2.7 1.62 4.24 1.79v4.03c-1.44-.05-2.89-.35-4.2-.97-.57-.26-1.1-.59-1.62-.93-.01 2.92.01 5.84-.02 8.75-.08 1.4-.54 2.79-1.35 3.94-1.310 1.92-3.58 3.17-5.91 3.21-1.43.08-2.86-.31-4.08-1.03-2.02-1.19-3.44-3.37-3.65-5.71-.02-.5-.03-1-.01-1.49.18-1.9 1.12-3.72 2.58-4.96 1.66-1.44 3.98-2.13 6.15-1.72.02 1.480-.04 2.96-.04 4.44-.99-.32-2.15-.23-3.02.37-.63.41-1.11 1.04-1.36 1.75-.21.51-.15 1.07-.14 1.61.24 1.64 1.82 3.02 3.5 2.87 1.12-.01 2.19-.66 2.77-1.61.19-.33.4-.67.41-1.06.1-1.79.06-3.57.07-5.36.01-4.03-.01-8.05.02-12.07z"/></g></svg></div>
<div class="soc off" style="left:965px;top:26px"><svg width="28" height="28" viewBox="0 0 24 24" ><path fill="#ff0000" d="M23.498 6.186a3.016 3.016 0 0 0-2.122-2.136C19.505 3.545 12 3.545 12 3.545s-7.505 0-9.377.505A3.017 3.017 0 0 0 .502 6.186C0 8.07 0 12 0 12s0 3.93.502 5.814a3.016 3.016 0 0 0 2.122 2.136c1.871.505 9.376.505 9.376.505s7.505 0 9.377-.505a3.015 3.015 0 0 0 2.122-2.136C24 15.93 24 12 24 12s0-3.93-.502-5.814z"/><path fill="#fff" d="M9.545 15.568V8.432L15.818 12l-6.273 3.568z"/></svg></div>
<div class="soc off" style="left:1013px;top:26px"><svg width="28" height="28" viewBox="0 0 24 24" ><path fill="#000" transform="translate(1.2 1.2) scale(0.9)" d="M18.901 1.153h3.68l-8.04 9.19L24 22.846h-7.406l-5.8-7.584-6.638 7.584H.474l8.6-9.83L0 1.154h7.594l5.243 6.932ZM17.61 20.644h2.039L6.486 3.24H4.298Z"/></svg></div>
<div class="soc off" style="left:1061px;top:26px"><svg width="28" height="28" viewBox="0 0 24 24" ><path fill="#1185fe" transform="translate(0.5 0.75) scale(0.96)" d="M12 10.8c-1.087-2.114-4.046-6.053-6.798-7.995C2.566.944 1.561 1.266.902 1.565.139 1.908 0 3.08 0 3.768c0 .69.378 5.65.624 6.479.815 2.736 3.713 3.66 6.383 3.364.136-.02.275-.039.415-.056-.138.022-.276.04-.415.056-3.912.58-7.387 2.005-2.83 7.078 5.013 5.19 6.87-1.113 7.823-4.308.953 3.195 2.05 9.271 7.733 4.308 4.267-4.308 1.172-6.498-2.74-7.078a8.741 8.741 0 0 1-.415-.056c.14.017.279.036.415.056 2.67.297 5.568-.628 6.383-3.364.246-.828.624-5.79.624-6.478 0-.69-.139-1.861-.902-2.206-.659-.298-1.664-.62-4.3 1.24C16.046 4.748 13.087 8.687 12 10.8Z"/></svg></div>
<div class="soc" style="left:1109px;top:26px"><svg width="28" height="28" viewBox="0 0 24 24" ><path fill="#000" d="M12.186 24h-.007c-3.581-.024-6.334-1.205-8.184-3.509C2.35 18.44 1.5 15.586 1.472 12.01v-.017c.03-3.579.879-6.43 2.525-8.482C5.845 1.205 8.6.024 12.18 0h.014c2.746.02 5.043.725 6.826 2.098 1.677 1.29 2.858 3.13 3.509 5.467l-2.04.569c-1.104-3.96-3.898-5.984-8.304-6.015-2.910.022-5.11.936-6.54 2.717C4.307 6.504 3.616 8.914 3.589 12c.027 3.086.718 5.496 2.057 7.164 1.43 1.783 3.631 2.698 6.54 2.717 2.623-.02 4.358-.631 5.8-2.045 1.647-1.613 1.618-3.593 1.090-4.798-.31-.71-.873-1.3-1.634-1.75-.192 1.352-.622 2.446-1.284 3.272-.886 1.102-2.14 1.704-3.73 1.790-1.202.065-2.361-.218-3.259-.801-1.063-.689-1.685-1.74-1.752-2.964-.065-1.190.408-2.285 1.33-3.082.88-.76 2.119-1.207 3.583-1.291a13.853 13.853 0 0 1 3.020.142c-.126-.742-.375-1.332-.75-1.757-.513-.586-1.308-.883-2.359-.89h-.029c-.844 0-1.992.232-2.721 1.32L7.734 7.847c.98-1.454 2.568-2.256 4.478-2.256h.044c3.194.02 5.097 1.975 5.287 5.388.108.046.216.094.321.142 1.49.7 2.58 1.761 3.154 3.070.797 1.820.871 4.790-1.548 7.158-1.85 1.81-4.094 2.628-7.277 2.65Zm1.003-11.69c-.242 0-.487.007-.739.021-1.836.103-2.98.946-2.916 2.143.067 1.256 1.452 1.839 2.784 1.767 1.224-.065 2.818-.543 3.086-3.710a10.5 10.5 0 0 0-2.215-.221z"/></svg></div>
<div class="soc off" style="left:1157px;top:26px"><svg width="28" height="28" viewBox="0 0 24 24" ><rect x="0" y="0" width="24" height="24" rx="2" fill="#0a66c2"/><path fill="#fff" d="M20.447 20.452h-3.554v-5.569c0-1.328-.027-3.037-1.852-3.037-1.853 0-2.136 1.445-2.136 2.939v5.667H9.351V9h3.414v1.561h.046c.477-.9 1.637-1.85 3.37-1.85 3.601 0 4.267 2.370 4.267 5.455v6.286zM5.337 7.433c-1.144 0-2.063-.926-2.063-2.065 0-1.138.92-2.063 2.063-2.063 1.140 0 2.064.925 2.064 2.063 0 1.139-.925 2.065-2.064 2.065zm1.782 13.019H3.555V9h3.564v11.452z"/></svg></div>
<div class="soc off" style="left:1205px;top:26px"><svg width="28" height="28" viewBox="0 0 24 24" ><path fill="#ff6719" transform="translate(1.47 0.86) scale(0.93)" d="M22.539 8.242H1.46V5.406h21.08v2.836zM1.46 10.812V24L12 18.110 22.540 24V10.812H1.46zM22.540 0H1.46v2.836h21.080V0z"/></svg></div>
<div class="cell r" style="left:1257px;width:287.5px"><b class="d">4</b><b class="c">,</b><b class="d">8</b><b class="d">9</b><b class="d">2</b></div>
<div class="cell r" style="left:1569px;width:165px;color:#f45c17"><b class="h"></b><b class="d">4</b><b class="d">7</b></div>
<div class="badge" style="left:1851px;width:124px;background:#f9f9f7;border-color:#eeede9;color:#212121">Absent</div>
<div class="cell r" style="left:1999px;width:112.5px"><b class="d">0</b><b class="p">.</b><b class="d">8</b><b class="q"><i>%</i></b></div>
<div class="cell r" style="left:2139px;width:161.5px"><b class="h"></b></div>
<div class="cell r" style="left:2325px;width:273.5px"><svg class="o" viewBox="0 0 12.4 20.4"><path d="M5.35 0H7.65V20.4H5.35V3.2L1.45 5.6L0.45 3.7L5.35 0.4Z"/></svg><b class="c">,</b><b class="d">8</b><b class="d">9</b><svg class="o" viewBox="0 0 12.4 20.4"><path d="M5.35 0H7.65V20.4H5.35V3.2L1.45 5.6L0.45 3.7L5.35 0.4Z"/></svg></div>
</div>
<div class="a" style="left:0;top:1468px;width:2880px;height:80px">
<div class="a" style="left:127px;top:28px"><svg width="24" height="24" viewBox="0 0 24 24" ><circle cx="12" cy="8.05" r="7" fill="none" stroke="#8f8f8f" stroke-width="1.6"/><path d="M1.3 21.9 C4 17.8 8 16.3 12 16.3 C16 16.3 20 17.8 22.7 21.9" fill="none" stroke="#8f8f8f" stroke-width="1.6" stroke-linecap="round"/></svg></div>
<div class="cell" style="left:173px"><span class="name">Raj Bhatt</span></div>
<div class="chips">
<div style="position:absolute;left:24px;top:18px;display:flex;gap:20px">
<div class="chip" style="position:relative;top:0;min-width:282px;">Baby Don’t Hurt Me</div>
</div></div>
<div class="soc" style="left:821px;top:26px"><svg width="28" height="28" viewBox="0 0 24 24" ><rect x="1.6" y="1.6" width="20.8" height="20.8" rx="6" fill="none" stroke="url(#igg)" stroke-width="2.3"/><circle cx="12" cy="12" r="4.9" fill="none" stroke="url(#igg)" stroke-width="2.3"/><circle cx="18" cy="6" r="1.4" fill="url(#igg)"/><rect x="1.6" y="1.6" width="20.8" height="20.8" rx="6" fill="none" stroke="url(#igv)" stroke-width="2.3"/><circle cx="12" cy="12" r="4.9" fill="none" stroke="url(#igv)" stroke-width="2.3"/><circle cx="18" cy="6" r="1.4" fill="url(#igv)"/></svg></div>
<div class="soc off" style="left:869px;top:26px"><svg width="28" height="28" viewBox="0 0 24 24" ><path fill="#0866ff" d="M9.101 23.691v-7.98H6.627v-3.667h2.474v-1.58c0-4.085 1.848-5.978 5.858-5.978.401 0 .955.042 1.468.103a8.68 8.68 0 0 1 1.141.195v3.325a8.623 8.623 0 0 0-.653-.036 26.805 26.805 0 0 0-.733-.009c-.707 0-1.259.096-1.675.309a1.686 1.686 0 0 0-.679.622c-.258.42-.374.995-.374 1.752v1.297h3.919l-.386 2.103-.287 1.564h-3.246v8.245C19.396 23.238 24 18.179 24 12.044c0-6.627-5.373-12-12-12s-12 5.373-12 12c0 5.628 3.874 10.35 9.101 11.647Z"/></svg></div>
<div class="soc off" style="left:917px;top:26px"><svg width="28" height="28" viewBox="0 0 24 24" ><g transform="translate(1.2 0.6) scale(0.93)"><path fill="#25f4ee" transform="translate(-1 -1)" d="M12.525.02c1.31-.02 2.61-.01 3.91-.02.08 1.53.63 3.09 1.75 4.17 1.12 1.11 2.7 1.62 4.24 1.79v4.03c-1.44-.05-2.89-.35-4.2-.97-.57-.26-1.1-.59-1.62-.93-.01 2.92.01 5.84-.02 8.75-.08 1.4-.54 2.79-1.35 3.94-1.310 1.92-3.58 3.17-5.91 3.21-1.43.08-2.86-.31-4.08-1.03-2.02-1.19-3.44-3.37-3.65-5.71-.02-.5-.03-1-.01-1.49.18-1.9 1.12-3.72 2.58-4.96 1.66-1.44 3.98-2.13 6.15-1.72.02 1.480-.04 2.96-.04 4.44-.99-.32-2.15-.23-3.02.37-.63.41-1.11 1.04-1.36 1.75-.21.51-.15 1.07-.14 1.61.24 1.64 1.82 3.02 3.5 2.87 1.12-.01 2.19-.66 2.77-1.61.19-.33.4-.67.41-1.06.1-1.79.06-3.57.07-5.36.01-4.03-.01-8.05.02-12.07z"/><path fill="#fe2c55" transform="translate(1 1)" d="M12.525.02c1.31-.02 2.61-.01 3.91-.02.08 1.53.63 3.09 1.75 4.17 1.12 1.11 2.7 1.62 4.24 1.79v4.03c-1.44-.05-2.89-.35-4.2-.97-.57-.26-1.1-.59-1.62-.93-.01 2.92.01 5.84-.02 8.75-.08 1.4-.54 2.79-1.35 3.94-1.310 1.92-3.58 3.17-5.91 3.21-1.43.08-2.86-.31-4.08-1.03-2.02-1.19-3.44-3.37-3.65-5.71-.02-.5-.03-1-.01-1.49.18-1.9 1.12-3.72 2.58-4.96 1.66-1.44 3.98-2.13 6.15-1.72.02 1.480-.04 2.96-.04 4.44-.99-.32-2.15-.23-3.02.37-.63.41-1.11 1.04-1.36 1.75-.21.51-.15 1.07-.14 1.61.24 1.64 1.82 3.02 3.5 2.87 1.12-.01 2.19-.66 2.77-1.61.19-.33.4-.67.41-1.06.1-1.79.06-3.57.07-5.36.01-4.03-.01-8.05.02-12.07z"/><path fill="#000" d="M12.525.02c1.31-.02 2.61-.01 3.91-.02.08 1.53.63 3.09 1.75 4.17 1.12 1.11 2.7 1.62 4.24 1.79v4.03c-1.44-.05-2.89-.35-4.2-.97-.57-.26-1.1-.59-1.62-.93-.01 2.92.01 5.84-.02 8.75-.08 1.4-.54 2.79-1.35 3.94-1.310 1.92-3.58 3.17-5.91 3.21-1.43.08-2.86-.31-4.08-1.03-2.02-1.19-3.44-3.37-3.65-5.71-.02-.5-.03-1-.01-1.49.18-1.9 1.12-3.72 2.58-4.96 1.66-1.44 3.98-2.13 6.15-1.72.02 1.480-.04 2.96-.04 4.44-.99-.32-2.15-.23-3.02.37-.63.41-1.11 1.04-1.36 1.75-.21.51-.15 1.07-.14 1.61.24 1.64 1.82 3.02 3.5 2.87 1.12-.01 2.19-.66 2.77-1.61.19-.33.4-.67.41-1.06.1-1.79.06-3.57.07-5.36.01-4.03-.01-8.05.02-12.07z"/></g></svg></div>
<div class="soc off" style="left:965px;top:26px"><svg width="28" height="28" viewBox="0 0 24 24" ><path fill="#ff0000" d="M23.498 6.186a3.016 3.016 0 0 0-2.122-2.136C19.505 3.545 12 3.545 12 3.545s-7.505 0-9.377.505A3.017 3.017 0 0 0 .502 6.186C0 8.07 0 12 0 12s0 3.93.502 5.814a3.016 3.016 0 0 0 2.122 2.136c1.871.505 9.376.505 9.376.505s7.505 0 9.377-.505a3.015 3.015 0 0 0 2.122-2.136C24 15.93 24 12 24 12s0-3.93-.502-5.814z"/><path fill="#fff" d="M9.545 15.568V8.432L15.818 12l-6.273 3.568z"/></svg></div>
<div class="soc" style="left:1013px;top:26px"><svg width="28" height="28" viewBox="0 0 24 24" ><path fill="#000" transform="translate(1.2 1.2) scale(0.9)" d="M18.901 1.153h3.68l-8.04 9.19L24 22.846h-7.406l-5.8-7.584-6.638 7.584H.474l8.6-9.83L0 1.154h7.594l5.243 6.932ZM17.61 20.644h2.039L6.486 3.24H4.298Z"/></svg></div>
<div class="soc off" style="left:1061px;top:26px"><svg width="28" height="28" viewBox="0 0 24 24" ><path fill="#1185fe" transform="translate(0.5 0.75) scale(0.96)" d="M12 10.8c-1.087-2.114-4.046-6.053-6.798-7.995C2.566.944 1.561 1.266.902 1.565.139 1.908 0 3.08 0 3.768c0 .69.378 5.65.624 6.479.815 2.736 3.713 3.66 6.383 3.364.136-.02.275-.039.415-.056-.138.022-.276.04-.415.056-3.912.58-7.387 2.005-2.83 7.078 5.013 5.19 6.87-1.113 7.823-4.308.953 3.195 2.05 9.271 7.733 4.308 4.267-4.308 1.172-6.498-2.74-7.078a8.741 8.741 0 0 1-.415-.056c.14.017.279.036.415.056 2.67.297 5.568-.628 6.383-3.364.246-.828.624-5.79.624-6.478 0-.69-.139-1.861-.902-2.206-.659-.298-1.664-.62-4.3 1.24C16.046 4.748 13.087 8.687 12 10.8Z"/></svg></div>
<div class="soc" style="left:1109px;top:26px"><svg width="28" height="28" viewBox="0 0 24 24" ><path fill="#000" d="M12.186 24h-.007c-3.581-.024-6.334-1.205-8.184-3.509C2.35 18.44 1.5 15.586 1.472 12.01v-.017c.03-3.579.879-6.43 2.525-8.482C5.845 1.205 8.6.024 12.18 0h.014c2.746.02 5.043.725 6.826 2.098 1.677 1.29 2.858 3.13 3.509 5.467l-2.04.569c-1.104-3.96-3.898-5.984-8.304-6.015-2.910.022-5.11.936-6.54 2.717C4.307 6.504 3.616 8.914 3.589 12c.027 3.086.718 5.496 2.057 7.164 1.43 1.783 3.631 2.698 6.54 2.717 2.623-.02 4.358-.631 5.8-2.045 1.647-1.613 1.618-3.593 1.090-4.798-.31-.71-.873-1.3-1.634-1.75-.192 1.352-.622 2.446-1.284 3.272-.886 1.102-2.14 1.704-3.73 1.790-1.202.065-2.361-.218-3.259-.801-1.063-.689-1.685-1.74-1.752-2.964-.065-1.190.408-2.285 1.33-3.082.88-.76 2.119-1.207 3.583-1.291a13.853 13.853 0 0 1 3.020.142c-.126-.742-.375-1.332-.75-1.757-.513-.586-1.308-.883-2.359-.89h-.029c-.844 0-1.992.232-2.721 1.32L7.734 7.847c.98-1.454 2.568-2.256 4.478-2.256h.044c3.194.02 5.097 1.975 5.287 5.388.108.046.216.094.321.142 1.49.7 2.58 1.761 3.154 3.070.797 1.820.871 4.790-1.548 7.158-1.85 1.81-4.094 2.628-7.277 2.65Zm1.003-11.69c-.242 0-.487.007-.739.021-1.836.103-2.98.946-2.916 2.143.067 1.256 1.452 1.839 2.784 1.767 1.224-.065 2.818-.543 3.086-3.710a10.5 10.5 0 0 0-2.215-.221z"/></svg></div>
<div class="soc" style="left:1157px;top:26px"><svg width="28" height="28" viewBox="0 0 24 24" ><rect x="0" y="0" width="24" height="24" rx="2" fill="#0a66c2"/><path fill="#fff" d="M20.447 20.452h-3.554v-5.569c0-1.328-.027-3.037-1.852-3.037-1.853 0-2.136 1.445-2.136 2.939v5.667H9.351V9h3.414v1.561h.046c.477-.9 1.637-1.85 3.37-1.85 3.601 0 4.267 2.370 4.267 5.455v6.286zM5.337 7.433c-1.144 0-2.063-.926-2.063-2.065 0-1.138.92-2.063 2.063-2.063 1.140 0 2.064.925 2.064 2.063 0 1.139-.925 2.065-2.064 2.065zm1.782 13.019H3.555V9h3.564v11.452z"/></svg></div>
<div class="soc off" style="left:1205px;top:26px"><svg width="28" height="28" viewBox="0 0 24 24" ><path fill="#ff6719" transform="translate(1.47 0.86) scale(0.93)" d="M22.539 8.242H1.46V5.406h21.08v2.836zM1.46 10.812V24L12 18.110 22.540 24V10.812H1.46zM22.540 0H1.46v2.836h21.080V0z"/></svg></div>
<div class="cell r" style="left:1257px;width:287.5px"><b class="d">4</b><b class="d">7</b><b class="c">,</b><b class="d">8</b><b class="d">3</b><b class="d">3</b></div>
<div class="cell r" style="left:1569px;width:165px;color:#3bb45a">+<b class="d">7</b><b class="c">,</b><b class="d">9</b><b class="d">5</b><b class="d">0</b></div>
<div class="badge" style="left:1917px;width:58px;background:#86ce8f;border-color:#a6dbab;color:#212121">M</div>
<div class="cell r" style="left:1999px;width:112.5px"><svg class="o" viewBox="0 0 12.4 20.4"><path d="M5.35 0H7.65V20.4H5.35V3.2L1.45 5.6L0.45 3.7L5.35 0.4Z"/></svg><svg class="o" viewBox="0 0 12.4 20.4"><path d="M5.35 0H7.65V20.4H5.35V3.2L1.45 5.6L0.45 3.7L5.35 0.4Z"/></svg><b class="p">.</b><b class="d">6</b><b class="q"><i>%</i></b></div>
<div class="cell r" style="left:2139px;width:161.5px"><b class="d">6</b><b class="d">9</b><b class="d">3</b></div>
<div class="cell r" style="left:2325px;width:273.5px"><svg class="o" viewBox="0 0 12.4 20.4"><path d="M5.35 0H7.65V20.4H5.35V3.2L1.45 5.6L0.45 3.7L5.35 0.4Z"/></svg><b class="d">9</b><b class="c">,</b><b class="d">8</b><b class="d">4</b><svg class="o" viewBox="0 0 12.4 20.4"><path d="M5.35 0H7.65V20.4H5.35V3.2L1.45 5.6L0.45 3.7L5.35 0.4Z"/></svg></div>
</div>
<div class="a" style="left:0;top:1548px;width:2880px;height:80px">
<div class="av" style="overflow:hidden"><svg width="100%" height="100%" viewBox="0 0 28 28"><rect width="28" height="28" fill="#c99a62"/><ellipse cx="14" cy="14" rx="9" ry="12" fill="#a99d92"/><ellipse cx="14" cy="31" rx="11" ry="8" fill="#d9e4ea"/><ellipse cx="14" cy="14.5" rx="5.2" ry="6.8" fill="#e4ada2"/></svg></div>
<div class="cell" style="left:173px"><span class="name">Leah Donovan</span></div>
<div class="chips">
<div style="position:absolute;left:24px;top:18px;display:flex;gap:20px">
<div class="chip" style="position:relative;top:0;min-width:144px;">No More</div>
</div></div>
<div class="soc off" style="left:821px;top:26px"><svg width="28" height="28" viewBox="0 0 24 24" ><rect x="1.6" y="1.6" width="20.8" height="20.8" rx="6" fill="none" stroke="url(#igg)" stroke-width="2.3"/><circle cx="12" cy="12" r="4.9" fill="none" stroke="url(#igg)" stroke-width="2.3"/><circle cx="18" cy="6" r="1.4" fill="url(#igg)"/><rect x="1.6" y="1.6" width="20.8" height="20.8" rx="6" fill="none" stroke="url(#igv)" stroke-width="2.3"/><circle cx="12" cy="12" r="4.9" fill="none" stroke="url(#igv)" stroke-width="2.3"/><circle cx="18" cy="6" r="1.4" fill="url(#igv)"/></svg></div>
<div class="soc" style="left:869px;top:26px"><svg width="28" height="28" viewBox="0 0 24 24" ><path fill="#0866ff" d="M9.101 23.691v-7.98H6.627v-3.667h2.474v-1.58c0-4.085 1.848-5.978 5.858-5.978.401 0 .955.042 1.468.103a8.68 8.68 0 0 1 1.141.195v3.325a8.623 8.623 0 0 0-.653-.036 26.805 26.805 0 0 0-.733-.009c-.707 0-1.259.096-1.675.309a1.686 1.686 0 0 0-.679.622c-.258.42-.374.995-.374 1.752v1.297h3.919l-.386 2.103-.287 1.564h-3.246v8.245C19.396 23.238 24 18.179 24 12.044c0-6.627-5.373-12-12-12s-12 5.373-12 12c0 5.628 3.874 10.35 9.101 11.647Z"/></svg></div>
<div class="soc off" style="left:917px;top:26px"><svg width="28" height="28" viewBox="0 0 24 24" ><g transform="translate(1.2 0.6) scale(0.93)"><path fill="#25f4ee" transform="translate(-1 -1)" d="M12.525.02c1.31-.02 2.61-.01 3.91-.02.08 1.53.63 3.09 1.75 4.17 1.12 1.11 2.7 1.62 4.24 1.79v4.03c-1.44-.05-2.89-.35-4.2-.97-.57-.26-1.1-.59-1.62-.93-.01 2.92.01 5.84-.02 8.75-.08 1.4-.54 2.79-1.35 3.94-1.310 1.92-3.58 3.17-5.91 3.21-1.43.08-2.86-.31-4.08-1.03-2.02-1.19-3.44-3.37-3.65-5.71-.02-.5-.03-1-.01-1.49.18-1.9 1.12-3.72 2.58-4.96 1.66-1.44 3.98-2.13 6.15-1.72.02 1.480-.04 2.96-.04 4.44-.99-.32-2.15-.23-3.02.37-.63.41-1.11 1.04-1.36 1.75-.21.51-.15 1.07-.14 1.61.24 1.64 1.82 3.02 3.5 2.87 1.12-.01 2.19-.66 2.77-1.61.19-.33.4-.67.41-1.06.1-1.79.06-3.57.07-5.36.01-4.03-.01-8.05.02-12.07z"/><path fill="#fe2c55" transform="translate(1 1)" d="M12.525.02c1.31-.02 2.61-.01 3.91-.02.08 1.53.63 3.09 1.75 4.17 1.12 1.11 2.7 1.62 4.24 1.79v4.03c-1.44-.05-2.89-.35-4.2-.97-.57-.26-1.1-.59-1.62-.93-.01 2.92.01 5.84-.02 8.75-.08 1.4-.54 2.79-1.35 3.94-1.310 1.92-3.58 3.17-5.91 3.21-1.43.08-2.86-.31-4.08-1.03-2.02-1.19-3.44-3.37-3.65-5.71-.02-.5-.03-1-.01-1.49.18-1.9 1.12-3.72 2.58-4.96 1.66-1.44 3.98-2.13 6.15-1.72.02 1.480-.04 2.96-.04 4.44-.99-.32-2.15-.23-3.02.37-.63.41-1.11 1.04-1.36 1.75-.21.51-.15 1.07-.14 1.61.24 1.64 1.82 3.02 3.5 2.87 1.12-.01 2.19-.66 2.77-1.61.19-.33.4-.67.41-1.06.1-1.79.06-3.57.07-5.36.01-4.03-.01-8.05.02-12.07z"/><path fill="#000" d="M12.525.02c1.31-.02 2.61-.01 3.91-.02.08 1.53.63 3.09 1.75 4.17 1.12 1.11 2.7 1.62 4.24 1.79v4.03c-1.44-.05-2.89-.35-4.2-.97-.57-.26-1.1-.59-1.62-.93-.01 2.92.01 5.84-.02 8.75-.08 1.4-.54 2.79-1.35 3.94-1.310 1.92-3.58 3.17-5.91 3.21-1.43.08-2.86-.31-4.08-1.03-2.02-1.19-3.44-3.37-3.65-5.71-.02-.5-.03-1-.01-1.49.18-1.9 1.12-3.72 2.58-4.96 1.66-1.44 3.98-2.13 6.15-1.72.02 1.480-.04 2.96-.04 4.44-.99-.32-2.15-.23-3.02.37-.63.41-1.11 1.04-1.36 1.75-.21.51-.15 1.07-.14 1.61.24 1.64 1.82 3.02 3.5 2.87 1.12-.01 2.19-.66 2.77-1.61.19-.33.4-.67.41-1.06.1-1.79.06-3.57.07-5.36.01-4.03-.01-8.05.02-12.07z"/></g></svg></div>
<div class="soc off" style="left:965px;top:26px"><svg width="28" height="28" viewBox="0 0 24 24" ><path fill="#ff0000" d="M23.498 6.186a3.016 3.016 0 0 0-2.122-2.136C19.505 3.545 12 3.545 12 3.545s-7.505 0-9.377.505A3.017 3.017 0 0 0 .502 6.186C0 8.07 0 12 0 12s0 3.93.502 5.814a3.016 3.016 0 0 0 2.122 2.136c1.871.505 9.376.505 9.376.505s7.505 0 9.377-.505a3.015 3.015 0 0 0 2.122-2.136C24 15.93 24 12 24 12s0-3.93-.502-5.814z"/><path fill="#fff" d="M9.545 15.568V8.432L15.818 12l-6.273 3.568z"/></svg></div>
<div class="soc off" style="left:1013px;top:26px"><svg width="28" height="28" viewBox="0 0 24 24" ><path fill="#000" transform="translate(1.2 1.2) scale(0.9)" d="M18.901 1.153h3.68l-8.04 9.19L24 22.846h-7.406l-5.8-7.584-6.638 7.584H.474l8.6-9.83L0 1.154h7.594l5.243 6.932ZM17.61 20.644h2.039L6.486 3.24H4.298Z"/></svg></div>
<div class="soc off" style="left:1061px;top:26px"><svg width="28" height="28" viewBox="0 0 24 24" ><path fill="#1185fe" transform="translate(0.5 0.75) scale(0.96)" d="M12 10.8c-1.087-2.114-4.046-6.053-6.798-7.995C2.566.944 1.561 1.266.902 1.565.139 1.908 0 3.08 0 3.768c0 .69.378 5.65.624 6.479.815 2.736 3.713 3.66 6.383 3.364.136-.02.275-.039.415-.056-.138.022-.276.04-.415.056-3.912.58-7.387 2.005-2.83 7.078 5.013 5.19 6.87-1.113 7.823-4.308.953 3.195 2.05 9.271 7.733 4.308 4.267-4.308 1.172-6.498-2.74-7.078a8.741 8.741 0 0 1-.415-.056c.14.017.279.036.415.056 2.67.297 5.568-.628 6.383-3.364.246-.828.624-5.79.624-6.478 0-.69-.139-1.861-.902-2.206-.659-.298-1.664-.62-4.3 1.24C16.046 4.748 13.087 8.687 12 10.8Z"/></svg></div>
<div class="soc off" style="left:1109px;top:26px"><svg width="28" height="28" viewBox="0 0 24 24" ><path fill="#000" d="M12.186 24h-.007c-3.581-.024-6.334-1.205-8.184-3.509C2.35 18.44 1.5 15.586 1.472 12.01v-.017c.03-3.579.879-6.43 2.525-8.482C5.845 1.205 8.6.024 12.18 0h.014c2.746.02 5.043.725 6.826 2.098 1.677 1.29 2.858 3.13 3.509 5.467l-2.04.569c-1.104-3.96-3.898-5.984-8.304-6.015-2.910.022-5.11.936-6.54 2.717C4.307 6.504 3.616 8.914 3.589 12c.027 3.086.718 5.496 2.057 7.164 1.43 1.783 3.631 2.698 6.54 2.717 2.623-.02 4.358-.631 5.8-2.045 1.647-1.613 1.618-3.593 1.090-4.798-.31-.71-.873-1.3-1.634-1.75-.192 1.352-.622 2.446-1.284 3.272-.886 1.102-2.14 1.704-3.73 1.790-1.202.065-2.361-.218-3.259-.801-1.063-.689-1.685-1.74-1.752-2.964-.065-1.190.408-2.285 1.33-3.082.88-.76 2.119-1.207 3.583-1.291a13.853 13.853 0 0 1 3.020.142c-.126-.742-.375-1.332-.75-1.757-.513-.586-1.308-.883-2.359-.89h-.029c-.844 0-1.992.232-2.721 1.32L7.734 7.847c.98-1.454 2.568-2.256 4.478-2.256h.044c3.194.02 5.097 1.975 5.287 5.388.108.046.216.094.321.142 1.49.7 2.58 1.761 3.154 3.070.797 1.820.871 4.790-1.548 7.158-1.85 1.81-4.094 2.628-7.277 2.65Zm1.003-11.69c-.242 0-.487.007-.739.021-1.836.103-2.98.946-2.916 2.143.067 1.256 1.452 1.839 2.784 1.767 1.224-.065 2.818-.543 3.086-3.710a10.5 10.5 0 0 0-2.215-.221z"/></svg></div>
<div class="soc off" style="left:1157px;top:26px"><svg width="28" height="28" viewBox="0 0 24 24" ><rect x="0" y="0" width="24" height="24" rx="2" fill="#0a66c2"/><path fill="#fff" d="M20.447 20.452h-3.554v-5.569c0-1.328-.027-3.037-1.852-3.037-1.853 0-2.136 1.445-2.136 2.939v5.667H9.351V9h3.414v1.561h.046c.477-.9 1.637-1.85 3.37-1.85 3.601 0 4.267 2.370 4.267 5.455v6.286zM5.337 7.433c-1.144 0-2.063-.926-2.063-2.065 0-1.138.92-2.063 2.063-2.063 1.140 0 2.064.925 2.064 2.063 0 1.139-.925 2.065-2.064 2.065zm1.782 13.019H3.555V9h3.564v11.452z"/></svg></div>
<div class="soc off" style="left:1205px;top:26px"><svg width="28" height="28" viewBox="0 0 24 24" ><path fill="#ff6719" transform="translate(1.47 0.86) scale(0.93)" d="M22.539 8.242H1.46V5.406h21.08v2.836zM1.46 10.812V24L12 18.110 22.540 24V10.812H1.46zM22.540 0H1.46v2.836h21.080V0z"/></svg></div>
<div class="cell r" style="left:1257px;width:287.5px"><b class="d">8</b><b class="c">,</b><b class="d">2</b><b class="d">7</b><svg class="o" viewBox="0 0 12.4 20.4"><path d="M5.35 0H7.65V20.4H5.35V3.2L1.45 5.6L0.45 3.7L5.35 0.4Z"/></svg></div>
<div class="cell r" style="left:1569px;width:165px;color:#f45c17"><b class="h"></b><b class="d">5</b><b class="d">2</b></div>
<div class="badge" style="left:1925px;width:50px;background:#b3e0cf;border-color:#c6e8db;color:#212121">S</div>
<div class="cell r" style="left:1999px;width:112.5px"><b class="d">3</b><b class="p">.</b><b class="d">4</b><b class="q"><i>%</i></b></div>
<div class="cell r" style="left:2139px;width:161.5px"><b class="h"></b></div>
<div class="cell r" style="left:2325px;width:273.5px"><b class="h"></b></div>
</div>
<div class="a" style="left:0;top:1628px;width:2880px;height:80px">
<div class="a" style="left:127px;top:28px"><svg width="24" height="24" viewBox="0 0 24 24" ><circle cx="12" cy="8.05" r="7" fill="none" stroke="#8f8f8f" stroke-width="1.6"/><path d="M1.3 21.9 C4 17.8 8 16.3 12 16.3 C16 16.3 20 17.8 22.7 21.9" fill="none" stroke="#8f8f8f" stroke-width="1.6" stroke-linecap="round"/></svg></div>
<div class="cell" style="left:173px"><span class="name">Thomas Gill</span></div>
<div class="chips">
<div style="position:absolute;left:24px;top:18px;display:flex;gap:20px">
<div class="chip" style="position:relative;top:0;min-width:272.5px;">The Attention Shift</div>
<div class="chip" style="position:relative;top:0;min-width:60px;"></div>
</div></div>
<div class="soc" style="left:821px;top:26px"><svg width="28" height="28" viewBox="0 0 24 24" ><rect x="1.6" y="1.6" width="20.8" height="20.8" rx="6" fill="none" stroke="url(#igg)" stroke-width="2.3"/><circle cx="12" cy="12" r="4.9" fill="none" stroke="url(#igg)" stroke-width="2.3"/><circle cx="18" cy="6" r="1.4" fill="url(#igg)"/><rect x="1.6" y="1.6" width="20.8" height="20.8" rx="6" fill="none" stroke="url(#igv)" stroke-width="2.3"/><circle cx="12" cy="12" r="4.9" fill="none" stroke="url(#igv)" stroke-width="2.3"/><circle cx="18" cy="6" r="1.4" fill="url(#igv)"/></svg></div>
<div class="soc off" style="left:869px;top:26px"><svg width="28" height="28" viewBox="0 0 24 24" ><path fill="#0866ff" d="M9.101 23.691v-7.98H6.627v-3.667h2.474v-1.58c0-4.085 1.848-5.978 5.858-5.978.401 0 .955.042 1.468.103a8.68 8.68 0 0 1 1.141.195v3.325a8.623 8.623 0 0 0-.653-.036 26.805 26.805 0 0 0-.733-.009c-.707 0-1.259.096-1.675.309a1.686 1.686 0 0 0-.679.622c-.258.42-.374.995-.374 1.752v1.297h3.919l-.386 2.103-.287 1.564h-3.246v8.245C19.396 23.238 24 18.179 24 12.044c0-6.627-5.373-12-12-12s-12 5.373-12 12c0 5.628 3.874 10.35 9.101 11.647Z"/></svg></div>
<div class="soc" style="left:917px;top:26px"><svg width="28" height="28" viewBox="0 0 24 24" ><g transform="translate(1.2 0.6) scale(0.93)"><path fill="#25f4ee" transform="translate(-1 -1)" d="M12.525.02c1.31-.02 2.61-.01 3.91-.02.08 1.53.63 3.09 1.75 4.17 1.12 1.11 2.7 1.62 4.24 1.79v4.03c-1.44-.05-2.89-.35-4.2-.97-.57-.26-1.1-.59-1.62-.93-.01 2.92.01 5.84-.02 8.75-.08 1.4-.54 2.79-1.35 3.94-1.310 1.92-3.58 3.17-5.91 3.21-1.43.08-2.86-.31-4.08-1.03-2.02-1.19-3.44-3.37-3.65-5.71-.02-.5-.03-1-.01-1.49.18-1.9 1.12-3.72 2.58-4.96 1.66-1.44 3.98-2.13 6.15-1.72.02 1.480-.04 2.96-.04 4.44-.99-.32-2.15-.23-3.02.37-.63.41-1.11 1.04-1.36 1.75-.21.51-.15 1.07-.14 1.61.24 1.64 1.82 3.02 3.5 2.87 1.12-.01 2.19-.66 2.77-1.61.19-.33.4-.67.41-1.06.1-1.79.06-3.57.07-5.36.01-4.03-.01-8.05.02-12.07z"/><path fill="#fe2c55" transform="translate(1 1)" d="M12.525.02c1.31-.02 2.61-.01 3.91-.02.08 1.53.63 3.09 1.75 4.17 1.12 1.11 2.7 1.62 4.24 1.79v4.03c-1.44-.05-2.89-.35-4.2-.97-.57-.26-1.1-.59-1.62-.93-.01 2.92.01 5.84-.02 8.75-.08 1.4-.54 2.79-1.35 3.94-1.310 1.92-3.58 3.17-5.91 3.21-1.43.08-2.86-.31-4.08-1.03-2.02-1.19-3.44-3.37-3.65-5.71-.02-.5-.03-1-.01-1.49.18-1.9 1.12-3.72 2.58-4.96 1.66-1.44 3.98-2.13 6.15-1.72.02 1.480-.04 2.96-.04 4.44-.99-.32-2.15-.23-3.02.37-.63.41-1.11 1.04-1.36 1.75-.21.51-.15 1.07-.14 1.61.24 1.64 1.82 3.02 3.5 2.87 1.12-.01 2.19-.66 2.77-1.61.19-.33.4-.67.41-1.06.1-1.79.06-3.57.07-5.36.01-4.03-.01-8.05.02-12.07z"/><path fill="#000" d="M12.525.02c1.31-.02 2.61-.01 3.91-.02.08 1.53.63 3.09 1.75 4.17 1.12 1.11 2.7 1.62 4.24 1.79v4.03c-1.44-.05-2.89-.35-4.2-.97-.57-.26-1.1-.59-1.62-.93-.01 2.92.01 5.84-.02 8.75-.08 1.4-.54 2.79-1.35 3.94-1.310 1.92-3.58 3.17-5.91 3.21-1.43.08-2.86-.31-4.08-1.03-2.02-1.19-3.44-3.37-3.65-5.71-.02-.5-.03-1-.01-1.49.18-1.9 1.12-3.72 2.58-4.96 1.66-1.44 3.98-2.13 6.15-1.72.02 1.480-.04 2.96-.04 4.44-.99-.32-2.15-.23-3.02.37-.63.41-1.11 1.04-1.36 1.75-.21.51-.15 1.07-.14 1.61.24 1.64 1.82 3.02 3.5 2.87 1.12-.01 2.19-.66 2.77-1.61.19-.33.4-.67.41-1.06.1-1.79.06-3.57.07-5.36.01-4.03-.01-8.05.02-12.07z"/></g></svg></div>
<div class="soc" style="left:965px;top:26px"><svg width="28" height="28" viewBox="0 0 24 24" ><path fill="#ff0000" d="M23.498 6.186a3.016 3.016 0 0 0-2.122-2.136C19.505 3.545 12 3.545 12 3.545s-7.505 0-9.377.505A3.017 3.017 0 0 0 .502 6.186C0 8.07 0 12 0 12s0 3.93.502 5.814a3.016 3.016 0 0 0 2.122 2.136c1.871.505 9.376.505 9.376.505s7.505 0 9.377-.505a3.015 3.015 0 0 0 2.122-2.136C24 15.93 24 12 24 12s0-3.93-.502-5.814z"/><path fill="#fff" d="M9.545 15.568V8.432L15.818 12l-6.273 3.568z"/></svg></div>
<div class="soc off" style="left:1013px;top:26px"><svg width="28" height="28" viewBox="0 0 24 24" ><path fill="#000" transform="translate(1.2 1.2) scale(0.9)" d="M18.901 1.153h3.68l-8.04 9.19L24 22.846h-7.406l-5.8-7.584-6.638 7.584H.474l8.6-9.83L0 1.154h7.594l5.243 6.932ZM17.61 20.644h2.039L6.486 3.24H4.298Z"/></svg></div>
<div class="soc off" style="left:1061px;top:26px"><svg width="28" height="28" viewBox="0 0 24 24" ><path fill="#1185fe" transform="translate(0.5 0.75) scale(0.96)" d="M12 10.8c-1.087-2.114-4.046-6.053-6.798-7.995C2.566.944 1.561 1.266.902 1.565.139 1.908 0 3.08 0 3.768c0 .69.378 5.65.624 6.479.815 2.736 3.713 3.66 6.383 3.364.136-.02.275-.039.415-.056-.138.022-.276.04-.415.056-3.912.58-7.387 2.005-2.83 7.078 5.013 5.19 6.87-1.113 7.823-4.308.953 3.195 2.05 9.271 7.733 4.308 4.267-4.308 1.172-6.498-2.74-7.078a8.741 8.741 0 0 1-.415-.056c.14.017.279.036.415.056 2.67.297 5.568-.628 6.383-3.364.246-.828.624-5.79.624-6.478 0-.69-.139-1.861-.902-2.206-.659-.298-1.664-.62-4.3 1.24C16.046 4.748 13.087 8.687 12 10.8Z"/></svg></div>
<div class="soc off" style="left:1109px;top:26px"><svg width="28" height="28" viewBox="0 0 24 24" ><path fill="#000" d="M12.186 24h-.007c-3.581-.024-6.334-1.205-8.184-3.509C2.35 18.44 1.5 15.586 1.472 12.01v-.017c.03-3.579.879-6.43 2.525-8.482C5.845 1.205 8.6.024 12.18 0h.014c2.746.02 5.043.725 6.826 2.098 1.677 1.29 2.858 3.13 3.509 5.467l-2.04.569c-1.104-3.96-3.898-5.984-8.304-6.015-2.910.022-5.11.936-6.54 2.717C4.307 6.504 3.616 8.914 3.589 12c.027 3.086.718 5.496 2.057 7.164 1.43 1.783 3.631 2.698 6.54 2.717 2.623-.02 4.358-.631 5.8-2.045 1.647-1.613 1.618-3.593 1.090-4.798-.31-.71-.873-1.3-1.634-1.75-.192 1.352-.622 2.446-1.284 3.272-.886 1.102-2.14 1.704-3.73 1.790-1.202.065-2.361-.218-3.259-.801-1.063-.689-1.685-1.74-1.752-2.964-.065-1.190.408-2.285 1.33-3.082.88-.76 2.119-1.207 3.583-1.291a13.853 13.853 0 0 1 3.020.142c-.126-.742-.375-1.332-.75-1.757-.513-.586-1.308-.883-2.359-.89h-.029c-.844 0-1.992.232-2.721 1.32L7.734 7.847c.98-1.454 2.568-2.256 4.478-2.256h.044c3.194.02 5.097 1.975 5.287 5.388.108.046.216.094.321.142 1.49.7 2.58 1.761 3.154 3.070.797 1.820.871 4.790-1.548 7.158-1.85 1.81-4.094 2.628-7.277 2.65Zm1.003-11.69c-.242 0-.487.007-.739.021-1.836.103-2.98.946-2.916 2.143.067 1.256 1.452 1.839 2.784 1.767 1.224-.065 2.818-.543 3.086-3.710a10.5 10.5 0 0 0-2.215-.221z"/></svg></div>
<div class="soc off" style="left:1157px;top:26px"><svg width="28" height="28" viewBox="0 0 24 24" ><rect x="0" y="0" width="24" height="24" rx="2" fill="#0a66c2"/><path fill="#fff" d="M20.447 20.452h-3.554v-5.569c0-1.328-.027-3.037-1.852-3.037-1.853 0-2.136 1.445-2.136 2.939v5.667H9.351V9h3.414v1.561h.046c.477-.9 1.637-1.85 3.37-1.85 3.601 0 4.267 2.370 4.267 5.455v6.286zM5.337 7.433c-1.144 0-2.063-.926-2.063-2.065 0-1.138.92-2.063 2.063-2.063 1.140 0 2.064.925 2.064 2.063 0 1.139-.925 2.065-2.064 2.065zm1.782 13.019H3.555V9h3.564v11.452z"/></svg></div>
<div class="soc off" style="left:1205px;top:26px"><svg width="28" height="28" viewBox="0 0 24 24" ><path fill="#ff6719" transform="translate(1.47 0.86) scale(0.93)" d="M22.539 8.242H1.46V5.406h21.08v2.836zM1.46 10.812V24L12 18.110 22.540 24V10.812H1.46zM22.540 0H1.46v2.836h21.080V0z"/></svg></div>
<div class="cell r" style="left:1257px;width:287.5px"><svg class="o" viewBox="0 0 12.4 20.4"><path d="M5.35 0H7.65V20.4H5.35V3.2L1.45 5.6L0.45 3.7L5.35 0.4Z"/></svg><b class="d">3</b><b class="d">4</b><b class="c">,</b><b class="d">5</b><b class="d">0</b><b class="d">8</b></div>
<div class="cell r" style="left:1569px;width:165px;color:#f45c17"><b class="h"></b><svg class="o" viewBox="0 0 12.4 20.4"><path d="M5.35 0H7.65V20.4H5.35V3.2L1.45 5.6L0.45 3.7L5.35 0.4Z"/></svg></div>
<div class="badge" style="left:1927px;width:48px;background:#0a6fbf;border-color:#4b97d4;color:#fff">L</div>
<div class="cell r" style="left:1999px;width:112.5px"><svg class="o" viewBox="0 0 12.4 20.4"><path d="M5.35 0H7.65V20.4H5.35V3.2L1.45 5.6L0.45 3.7L5.35 0.4Z"/></svg><b class="p">.</b><b class="d">6</b><b class="q"><i>%</i></b></div>
<div class="cell r" style="left:2139px;width:161.5px"><b class="h"></b></div>
<div class="cell r" style="left:2325px;width:273.5px"><b class="d">5</b><b class="d">7</b><b class="c">,</b><b class="d">7</b><svg class="o" viewBox="0 0 12.4 20.4"><path d="M5.35 0H7.65V20.4H5.35V3.2L1.45 5.6L0.45 3.7L5.35 0.4Z"/></svg><b class="d">3</b></div>
</div>
<div class="a" style="left:0;top:1708px;width:2880px;height:80px">
<div class="a" style="left:127px;top:28px"><svg width="24" height="24" viewBox="0 0 24 24" ><circle cx="12" cy="8.05" r="7" fill="none" stroke="#8f8f8f" stroke-width="1.6"/><path d="M1.3 21.9 C4 17.8 8 16.3 12 16.3 C16 16.3 20 17.8 22.7 21.9" fill="none" stroke="#8f8f8f" stroke-width="1.6" stroke-linecap="round"/></svg></div>
<div class="cell" style="left:173px"><span class="name">Emily Choi</span></div>
<div class="chips">
<div style="position:absolute;left:24px;top:18px;display:flex;gap:20px">
<div class="chip" style="position:relative;top:0;min-width:254px;">Baby Don’t Worry</div>
</div></div>
<div class="soc off" style="left:821px;top:26px"><svg width="28" height="28" viewBox="0 0 24 24" ><rect x="1.6" y="1.6" width="20.8" height="20.8" rx="6" fill="none" stroke="url(#igg)" stroke-width="2.3"/><circle cx="12" cy="12" r="4.9" fill="none" stroke="url(#igg)" stroke-width="2.3"/><circle cx="18" cy="6" r="1.4" fill="url(#igg)"/><rect x="1.6" y="1.6" width="20.8" height="20.8" rx="6" fill="none" stroke="url(#igv)" stroke-width="2.3"/><circle cx="12" cy="12" r="4.9" fill="none" stroke="url(#igv)" stroke-width="2.3"/><circle cx="18" cy="6" r="1.4" fill="url(#igv)"/></svg></div>
<div class="soc off" style="left:869px;top:26px"><svg width="28" height="28" viewBox="0 0 24 24" ><path fill="#0866ff" d="M9.101 23.691v-7.98H6.627v-3.667h2.474v-1.58c0-4.085 1.848-5.978 5.858-5.978.401 0 .955.042 1.468.103a8.68 8.68 0 0 1 1.141.195v3.325a8.623 8.623 0 0 0-.653-.036 26.805 26.805 0 0 0-.733-.009c-.707 0-1.259.096-1.675.309a1.686 1.686 0 0 0-.679.622c-.258.42-.374.995-.374 1.752v1.297h3.919l-.386 2.103-.287 1.564h-3.246v8.245C19.396 23.238 24 18.179 24 12.044c0-6.627-5.373-12-12-12s-12 5.373-12 12c0 5.628 3.874 10.35 9.101 11.647Z"/></svg></div>
<div class="soc off" style="left:917px;top:26px"><svg width="28" height="28" viewBox="0 0 24 24" ><g transform="translate(1.2 0.6) scale(0.93)"><path fill="#25f4ee" transform="translate(-1 -1)" d="M12.525.02c1.31-.02 2.61-.01 3.91-.02.08 1.53.63 3.09 1.75 4.17 1.12 1.11 2.7 1.62 4.24 1.79v4.03c-1.44-.05-2.89-.35-4.2-.97-.57-.26-1.1-.59-1.62-.93-.01 2.92.01 5.84-.02 8.75-.08 1.4-.54 2.79-1.35 3.94-1.310 1.92-3.58 3.17-5.91 3.21-1.43.08-2.86-.31-4.08-1.03-2.02-1.19-3.44-3.37-3.65-5.71-.02-.5-.03-1-.01-1.49.18-1.9 1.12-3.72 2.58-4.96 1.66-1.44 3.98-2.13 6.15-1.72.02 1.480-.04 2.96-.04 4.44-.99-.32-2.15-.23-3.02.37-.63.41-1.11 1.04-1.36 1.75-.21.51-.15 1.07-.14 1.61.24 1.64 1.82 3.02 3.5 2.87 1.12-.01 2.19-.66 2.77-1.61.19-.33.4-.67.41-1.06.1-1.79.06-3.57.07-5.36.01-4.03-.01-8.05.02-12.07z"/><path fill="#fe2c55" transform="translate(1 1)" d="M12.525.02c1.31-.02 2.61-.01 3.91-.02.08 1.53.63 3.09 1.75 4.17 1.12 1.11 2.7 1.62 4.24 1.79v4.03c-1.44-.05-2.89-.35-4.2-.97-.57-.26-1.1-.59-1.62-.93-.01 2.92.01 5.84-.02 8.75-.08 1.4-.54 2.79-1.35 3.94-1.310 1.92-3.58 3.17-5.91 3.21-1.43.08-2.86-.31-4.08-1.03-2.02-1.19-3.44-3.37-3.65-5.71-.02-.5-.03-1-.01-1.49.18-1.9 1.12-3.72 2.58-4.96 1.66-1.44 3.98-2.13 6.15-1.72.02 1.480-.04 2.96-.04 4.44-.99-.32-2.15-.23-3.02.37-.63.41-1.11 1.04-1.36 1.75-.21.51-.15 1.07-.14 1.61.24 1.64 1.82 3.02 3.5 2.87 1.12-.01 2.19-.66 2.77-1.61.19-.33.4-.67.41-1.06.1-1.79.06-3.57.07-5.36.01-4.03-.01-8.05.02-12.07z"/><path fill="#000" d="M12.525.02c1.31-.02 2.61-.01 3.91-.02.08 1.53.63 3.09 1.75 4.17 1.12 1.11 2.7 1.62 4.24 1.79v4.03c-1.44-.05-2.89-.35-4.2-.97-.57-.26-1.1-.59-1.62-.93-.01 2.92.01 5.84-.02 8.75-.08 1.4-.54 2.79-1.35 3.94-1.310 1.92-3.58 3.17-5.91 3.21-1.43.08-2.86-.31-4.08-1.03-2.02-1.19-3.44-3.37-3.65-5.71-.02-.5-.03-1-.01-1.49.18-1.9 1.12-3.72 2.58-4.96 1.66-1.44 3.98-2.13 6.15-1.72.02 1.480-.04 2.96-.04 4.44-.99-.32-2.15-.23-3.02.37-.63.41-1.11 1.04-1.36 1.75-.21.51-.15 1.07-.14 1.61.24 1.64 1.82 3.02 3.5 2.87 1.12-.01 2.19-.66 2.77-1.61.19-.33.4-.67.41-1.06.1-1.79.06-3.57.07-5.36.01-4.03-.01-8.05.02-12.07z"/></g></svg></div>
<div class="soc off" style="left:965px;top:26px"><svg width="28" height="28" viewBox="0 0 24 24" ><path fill="#ff0000" d="M23.498 6.186a3.016 3.016 0 0 0-2.122-2.136C19.505 3.545 12 3.545 12 3.545s-7.505 0-9.377.505A3.017 3.017 0 0 0 .502 6.186C0 8.07 0 12 0 12s0 3.93.502 5.814a3.016 3.016 0 0 0 2.122 2.136c1.871.505 9.376.505 9.376.505s7.505 0 9.377-.505a3.015 3.015 0 0 0 2.122-2.136C24 15.93 24 12 24 12s0-3.93-.502-5.814z"/><path fill="#fff" d="M9.545 15.568V8.432L15.818 12l-6.273 3.568z"/></svg></div>
<div class="soc off" style="left:1013px;top:26px"><svg width="28" height="28" viewBox="0 0 24 24" ><path fill="#000" transform="translate(1.2 1.2) scale(0.9)" d="M18.901 1.153h3.68l-8.04 9.19L24 22.846h-7.406l-5.8-7.584-6.638 7.584H.474l8.6-9.83L0 1.154h7.594l5.243 6.932ZM17.61 20.644h2.039L6.486 3.24H4.298Z"/></svg></div>
<div class="soc off" style="left:1061px;top:26px"><svg width="28" height="28" viewBox="0 0 24 24" ><path fill="#1185fe" transform="translate(0.5 0.75) scale(0.96)" d="M12 10.8c-1.087-2.114-4.046-6.053-6.798-7.995C2.566.944 1.561 1.266.902 1.565.139 1.908 0 3.08 0 3.768c0 .69.378 5.65.624 6.479.815 2.736 3.713 3.66 6.383 3.364.136-.02.275-.039.415-.056-.138.022-.276.04-.415.056-3.912.58-7.387 2.005-2.83 7.078 5.013 5.19 6.87-1.113 7.823-4.308.953 3.195 2.05 9.271 7.733 4.308 4.267-4.308 1.172-6.498-2.74-7.078a8.741 8.741 0 0 1-.415-.056c.14.017.279.036.415.056 2.67.297 5.568-.628 6.383-3.364.246-.828.624-5.79.624-6.478 0-.69-.139-1.861-.902-2.206-.659-.298-1.664-.62-4.3 1.24C16.046 4.748 13.087 8.687 12 10.8Z"/></svg></div>
<div class="soc off" style="left:1109px;top:26px"><svg width="28" height="28" viewBox="0 0 24 24" ><path fill="#000" d="M12.186 24h-.007c-3.581-.024-6.334-1.205-8.184-3.509C2.35 18.44 1.5 15.586 1.472 12.01v-.017c.03-3.579.879-6.43 2.525-8.482C5.845 1.205 8.6.024 12.18 0h.014c2.746.02 5.043.725 6.826 2.098 1.677 1.29 2.858 3.13 3.509 5.467l-2.04.569c-1.104-3.96-3.898-5.984-8.304-6.015-2.910.022-5.11.936-6.54 2.717C4.307 6.504 3.616 8.914 3.589 12c.027 3.086.718 5.496 2.057 7.164 1.43 1.783 3.631 2.698 6.54 2.717 2.623-.02 4.358-.631 5.8-2.045 1.647-1.613 1.618-3.593 1.090-4.798-.31-.71-.873-1.3-1.634-1.75-.192 1.352-.622 2.446-1.284 3.272-.886 1.102-2.14 1.704-3.73 1.790-1.202.065-2.361-.218-3.259-.801-1.063-.689-1.685-1.74-1.752-2.964-.065-1.190.408-2.285 1.33-3.082.88-.76 2.119-1.207 3.583-1.291a13.853 13.853 0 0 1 3.020.142c-.126-.742-.375-1.332-.75-1.757-.513-.586-1.308-.883-2.359-.89h-.029c-.844 0-1.992.232-2.721 1.32L7.734 7.847c.98-1.454 2.568-2.256 4.478-2.256h.044c3.194.02 5.097 1.975 5.287 5.388.108.046.216.094.321.142 1.49.7 2.58 1.761 3.154 3.070.797 1.820.871 4.790-1.548 7.158-1.85 1.81-4.094 2.628-7.277 2.65Zm1.003-11.69c-.242 0-.487.007-.739.021-1.836.103-2.98.946-2.916 2.143.067 1.256 1.452 1.839 2.784 1.767 1.224-.065 2.818-.543 3.086-3.710a10.5 10.5 0 0 0-2.215-.221z"/></svg></div>
<div class="soc off" style="left:1157px;top:26px"><svg width="28" height="28" viewBox="0 0 24 24" ><rect x="0" y="0" width="24" height="24" rx="2" fill="#0a66c2"/><path fill="#fff" d="M20.447 20.452h-3.554v-5.569c0-1.328-.027-3.037-1.852-3.037-1.853 0-2.136 1.445-2.136 2.939v5.667H9.351V9h3.414v1.561h.046c.477-.9 1.637-1.85 3.37-1.85 3.601 0 4.267 2.370 4.267 5.455v6.286zM5.337 7.433c-1.144 0-2.063-.926-2.063-2.065 0-1.138.92-2.063 2.063-2.063 1.140 0 2.064.925 2.064 2.063 0 1.139-.925 2.065-2.064 2.065zm1.782 13.019H3.555V9h3.564v11.452z"/></svg></div>
<div class="soc off" style="left:1205px;top:26px"><svg width="28" height="28" viewBox="0 0 24 24" ><path fill="#ff6719" transform="translate(1.47 0.86) scale(0.93)" d="M22.539 8.242H1.46V5.406h21.08v2.836zM1.46 10.812V24L12 18.110 22.540 24V10.812H1.46zM22.540 0H1.46v2.836h21.080V0z"/></svg></div>
<div class="cell r" style="left:1257px;width:287.5px"><b class="h"></b></div>
<div class="cell r" style="left:1569px;width:165px;color:#212121"><b class="h"></b></div>
<div class="badge" style="left:1851px;width:124px;background:#f9f9f7;border-color:#eeede9;color:#212121">Absent</div>
<div class="cell r" style="left:1999px;width:112.5px"><b class="h"></b></div>
<div class="cell r" style="left:2139px;width:161.5px"><b class="h"></b></div>
<div class="cell r" style="left:2325px;width:273.5px"><b class="h"></b></div>
</div>
</body></html>
